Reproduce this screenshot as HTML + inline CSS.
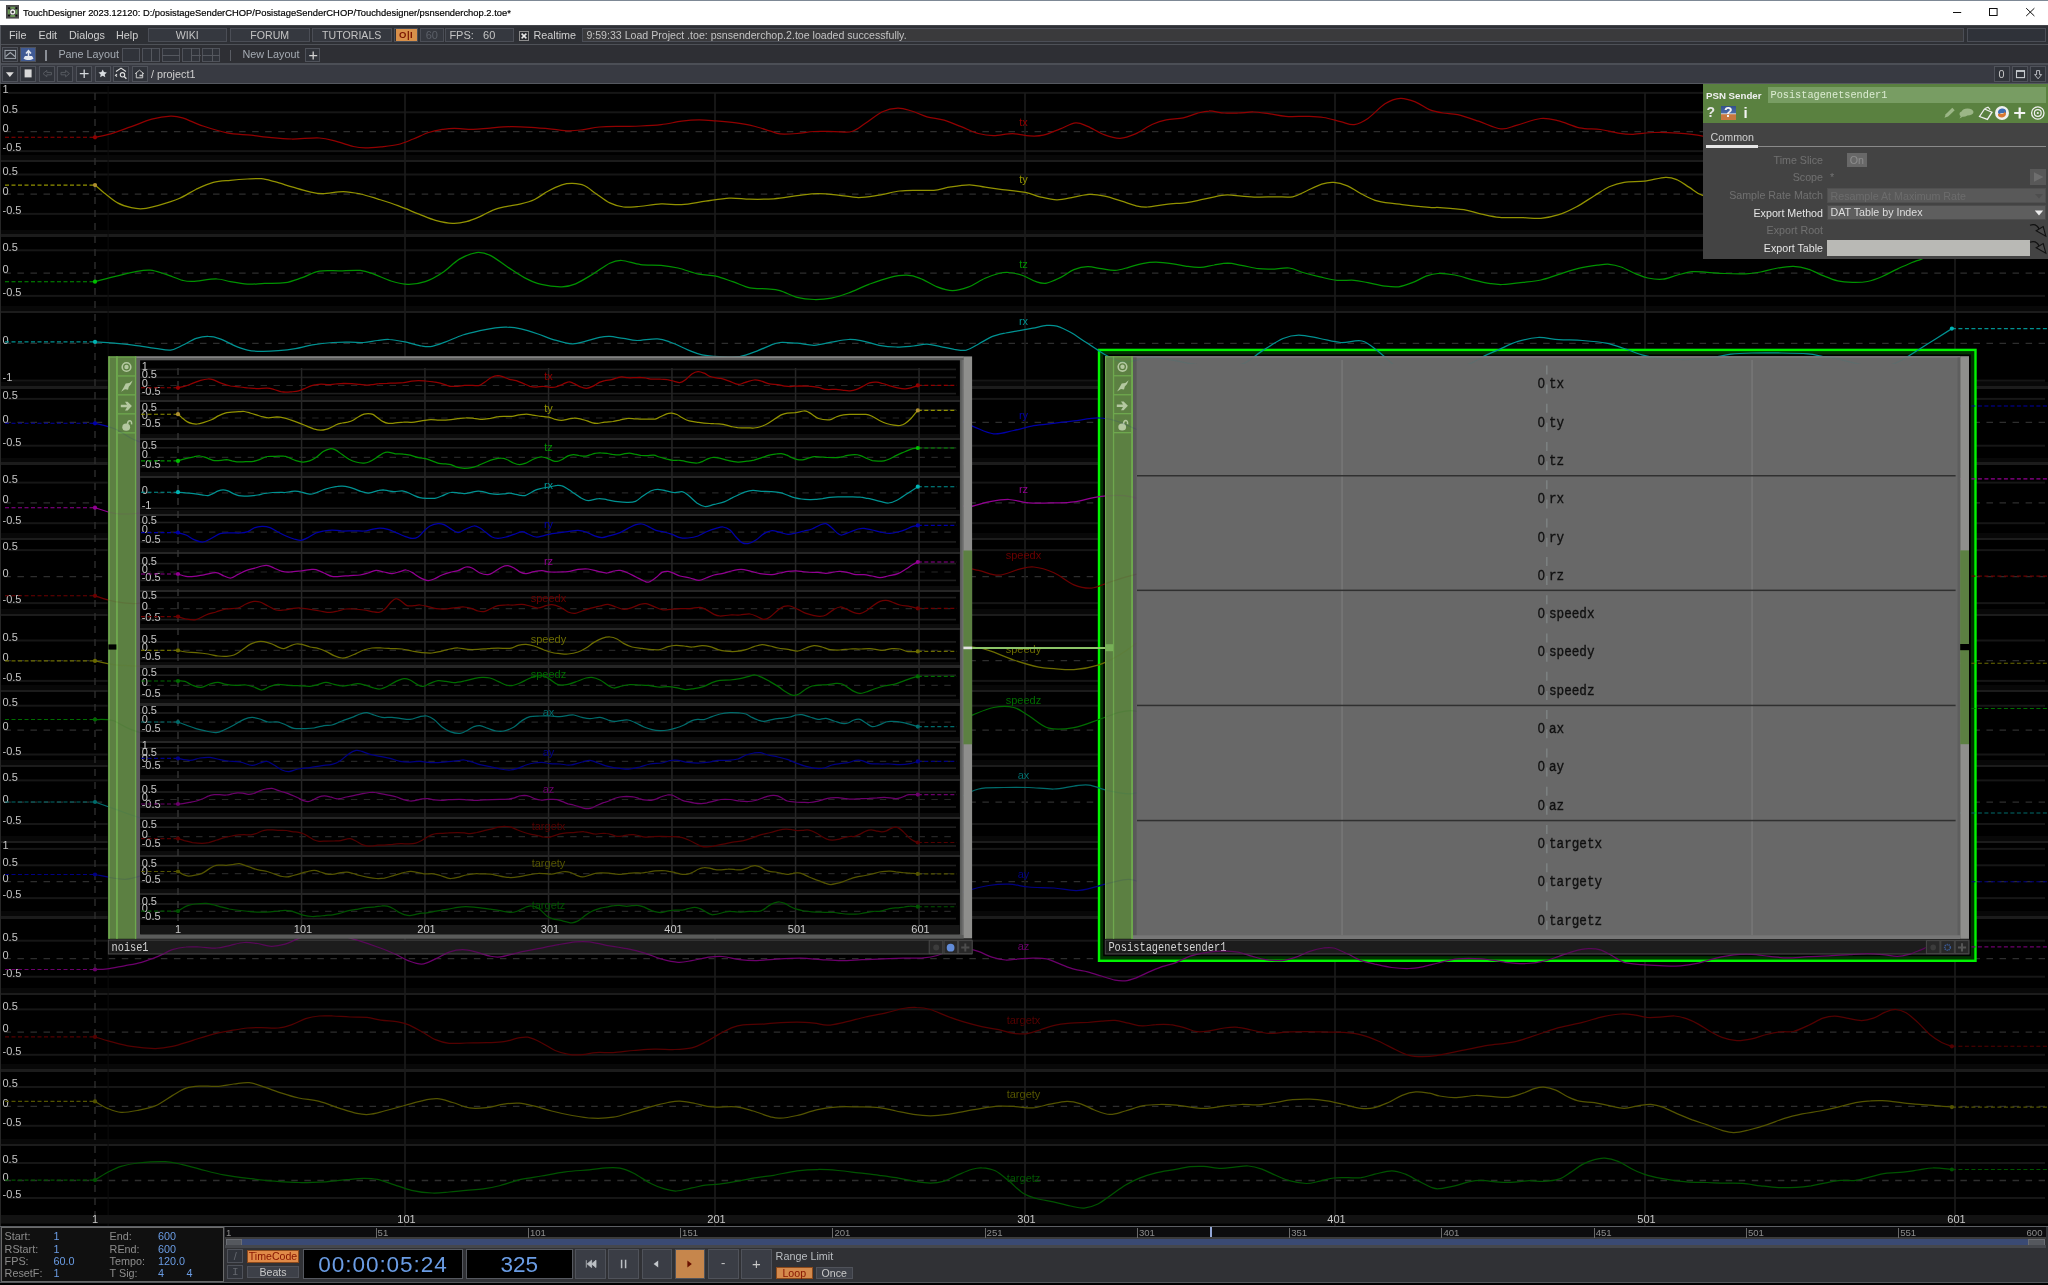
<!DOCTYPE html><html><head><meta charset="utf-8"><title>TouchDesigner</title><style>
html,body{margin:0;padding:0;background:#000}
#w{position:absolute;left:0;top:0;width:2048px;height:1285px}
#w>div{filter:brightness(1)}
body{width:2048px;height:1285px;position:relative;overflow:hidden;font-family:'Liberation Sans', sans-serif}
.mt{position:absolute;font:10.8px 'Liberation Sans', sans-serif;color:#cfcfcf;white-space:nowrap}
.btn{position:absolute;box-sizing:border-box;border:1px solid #4b4e56;background:#35383f;font:10.6px 'Liberation Sans', sans-serif;color:#c4c4c4;text-align:center;white-space:nowrap;overflow:hidden}
.ib{position:absolute;box-sizing:border-box;border:1px solid #4f525a;background:#30333a}
.il{position:absolute;font:10.8px 'Liberation Sans', sans-serif;color:#8c8c8c;white-space:nowrap}
.iv{position:absolute;font:10.8px 'Liberation Sans', sans-serif;color:#6a9ce4;white-space:nowrap}
.rl{position:absolute;top:1226.6px;font:9.6px 'Liberation Sans', sans-serif;color:#8c8c8c;white-space:nowrap}
</style></head><body>
<svg style="position:absolute;left:0;top:0;filter:brightness(1)" width="2048" height="1285" viewBox="0 0 2048 1285">
<rect x="0" y="84" width="2048" height="1142" fill="#000"/>
<g shape-rendering="crispEdges">
<rect x="0" y="155.2" width="2048" height="5" fill="#080808"/>
<rect x="0" y="160.0" width="2048" height="2.4" fill="#1c1c1c"/>
<rect x="0" y="229.5" width="2048" height="5" fill="#080808"/>
<rect x="0" y="234.3" width="2048" height="2.4" fill="#1c1c1c"/>
<rect x="0" y="305.9" width="2048" height="5" fill="#080808"/>
<rect x="0" y="310.7" width="2048" height="2.4" fill="#1c1c1c"/>
<rect x="0" y="381.5" width="2048" height="5" fill="#080808"/>
<rect x="0" y="386.3" width="2048" height="2.4" fill="#1c1c1c"/>
<rect x="0" y="457.6" width="2048" height="5" fill="#080808"/>
<rect x="0" y="462.4" width="2048" height="2.4" fill="#1c1c1c"/>
<rect x="0" y="532.9" width="2048" height="5" fill="#080808"/>
<rect x="0" y="537.7" width="2048" height="2.4" fill="#1c1c1c"/>
<rect x="0" y="608.9" width="2048" height="5" fill="#080808"/>
<rect x="0" y="613.7" width="2048" height="2.4" fill="#1c1c1c"/>
<rect x="0" y="684.7" width="2048" height="5" fill="#080808"/>
<rect x="0" y="689.5" width="2048" height="2.4" fill="#1c1c1c"/>
<rect x="0" y="760.1" width="2048" height="5" fill="#080808"/>
<rect x="0" y="764.9" width="2048" height="2.4" fill="#1c1c1c"/>
<rect x="0" y="836.0" width="2048" height="5" fill="#080808"/>
<rect x="0" y="840.8" width="2048" height="2.4" fill="#1c1c1c"/>
<rect x="0" y="911.3" width="2048" height="5" fill="#080808"/>
<rect x="0" y="916.1" width="2048" height="2.4" fill="#1c1c1c"/>
<rect x="0" y="987.7" width="2048" height="5" fill="#080808"/>
<rect x="0" y="992.5" width="2048" height="2.4" fill="#1c1c1c"/>
<rect x="0" y="1064.3" width="2048" height="5" fill="#080808"/>
<rect x="0" y="1069.1" width="2048" height="2.4" fill="#1c1c1c"/>
<rect x="0" y="1138.7" width="2048" height="5" fill="#080808"/>
<rect x="0" y="1143.5" width="2048" height="2.4" fill="#1c1c1c"/>
</g>
<rect x="8" y="91.9" width="2037" height="2" fill="#161616"/>
<rect x="8" y="111.3" width="2037" height="2" fill="#161616"/>
<rect x="8" y="150.1" width="2037" height="2" fill="#161616"/>
<line x1="4.4" y1="131.7" x2="2045" y2="131.7" stroke="#2e2e2e" stroke-width="1.3" stroke-dasharray="6.5 6.54"/>
<rect x="8" y="173.5" width="2037" height="2" fill="#161616"/>
<rect x="8" y="212.9" width="2037" height="2" fill="#161616"/>
<line x1="4.4" y1="194.2" x2="2045" y2="194.2" stroke="#2e2e2e" stroke-width="1.3" stroke-dasharray="6.5 6.54"/>
<rect x="8" y="249.3" width="2037" height="2" fill="#161616"/>
<rect x="8" y="294.9" width="2037" height="2" fill="#161616"/>
<line x1="4.4" y1="273.1" x2="2045" y2="273.1" stroke="#2e2e2e" stroke-width="1.3" stroke-dasharray="6.5 6.54"/>
<rect x="8" y="379.6" width="2037" height="2" fill="#161616"/>
<line x1="4.4" y1="343.3" x2="2045" y2="343.3" stroke="#2e2e2e" stroke-width="1.3" stroke-dasharray="6.5 6.54"/>
<rect x="8" y="397.9" width="2037" height="2" fill="#161616"/>
<rect x="8" y="444.7" width="2037" height="2" fill="#161616"/>
<line x1="4.4" y1="422.3" x2="2045" y2="422.3" stroke="#2e2e2e" stroke-width="1.3" stroke-dasharray="6.5 6.54"/>
<rect x="8" y="481.6" width="2037" height="2" fill="#161616"/>
<rect x="8" y="522.2" width="2037" height="2" fill="#161616"/>
<line x1="4.4" y1="502.9" x2="2045" y2="502.9" stroke="#2e2e2e" stroke-width="1.3" stroke-dasharray="6.5 6.54"/>
<rect x="8" y="549.1" width="2037" height="2" fill="#161616"/>
<rect x="8" y="602.1" width="2037" height="2" fill="#161616"/>
<line x1="4.4" y1="576.6" x2="2045" y2="576.6" stroke="#2e2e2e" stroke-width="1.3" stroke-dasharray="6.5 6.54"/>
<rect x="8" y="639.5" width="2037" height="2" fill="#161616"/>
<rect x="8" y="679.9" width="2037" height="2" fill="#161616"/>
<line x1="4.4" y1="660.7" x2="2045" y2="660.7" stroke="#2e2e2e" stroke-width="1.3" stroke-dasharray="6.5 6.54"/>
<rect x="8" y="704.7" width="2037" height="2" fill="#161616"/>
<rect x="8" y="753.5" width="2037" height="2" fill="#161616"/>
<line x1="4.4" y1="730.1" x2="2045" y2="730.1" stroke="#2e2e2e" stroke-width="1.3" stroke-dasharray="6.5 6.54"/>
<rect x="8" y="779.4" width="2037" height="2" fill="#161616"/>
<rect x="8" y="823.0" width="2037" height="2" fill="#161616"/>
<line x1="4.4" y1="802.2" x2="2045" y2="802.2" stroke="#2e2e2e" stroke-width="1.3" stroke-dasharray="6.5 6.54"/>
<rect x="8" y="847.9" width="2037" height="2" fill="#161616"/>
<rect x="8" y="864.3" width="2037" height="2" fill="#161616"/>
<rect x="8" y="897.1" width="2037" height="2" fill="#161616"/>
<line x1="4.4" y1="881.7" x2="2045" y2="881.7" stroke="#2e2e2e" stroke-width="1.3" stroke-dasharray="6.5 6.54"/>
<rect x="8" y="939.7" width="2037" height="2" fill="#161616"/>
<rect x="8" y="975.7" width="2037" height="2" fill="#161616"/>
<line x1="4.4" y1="958.7" x2="2045" y2="958.7" stroke="#2e2e2e" stroke-width="1.3" stroke-dasharray="6.5 6.54"/>
<rect x="8" y="1008.4" width="2037" height="2" fill="#161616"/>
<rect x="8" y="1053.8" width="2037" height="2" fill="#161616"/>
<line x1="4.4" y1="1032.1" x2="2045" y2="1032.1" stroke="#2e2e2e" stroke-width="1.3" stroke-dasharray="6.5 6.54"/>
<rect x="8" y="1086.0" width="2037" height="2" fill="#161616"/>
<rect x="8" y="1124.8" width="2037" height="2" fill="#161616"/>
<line x1="4.4" y1="1106.4" x2="2045" y2="1106.4" stroke="#2e2e2e" stroke-width="1.3" stroke-dasharray="6.5 6.54"/>
<rect x="8" y="1162.0" width="2037" height="2" fill="#161616"/>
<rect x="8" y="1197.0" width="2037" height="2" fill="#161616"/>
<line x1="4.4" y1="1180.5" x2="2045" y2="1180.5" stroke="#2e2e2e" stroke-width="1.3" stroke-dasharray="6.5 6.54"/>
<rect x="404.2" y="93" width="1.6" height="1133" fill="#1c1c1c"/>
<rect x="714.2" y="93" width="1.6" height="1133" fill="#1c1c1c"/>
<rect x="1024.2" y="93" width="1.6" height="1133" fill="#1c1c1c"/>
<rect x="1334.2" y="93" width="1.6" height="1133" fill="#1c1c1c"/>
<rect x="1644.2" y="93" width="1.6" height="1133" fill="#1c1c1c"/>
<rect x="1954.2" y="93" width="1.6" height="1133" fill="#1c1c1c"/>
<line x1="95" y1="93" x2="95" y2="1215" stroke="#303030" stroke-width="1.3" stroke-dasharray="7 6"/>
<rect x="107.6" y="86" width="1" height="1140" fill="#0c0c0c"/>
<rect x="0" y="1215" width="2048" height="8.6" fill="#121212"/>
<text x="95.0" y="1223.3" font-size="11" fill="#c8c8c8" text-anchor="middle" font-family="'Liberation Sans', sans-serif">1</text>
<text x="406.5" y="1223.3" font-size="11" fill="#c8c8c8" text-anchor="middle" font-family="'Liberation Sans', sans-serif">101</text>
<text x="716.5" y="1223.3" font-size="11" fill="#c8c8c8" text-anchor="middle" font-family="'Liberation Sans', sans-serif">201</text>
<text x="1026.5" y="1223.3" font-size="11" fill="#c8c8c8" text-anchor="middle" font-family="'Liberation Sans', sans-serif">301</text>
<text x="1336.5" y="1223.3" font-size="11" fill="#c8c8c8" text-anchor="middle" font-family="'Liberation Sans', sans-serif">401</text>
<text x="1646.5" y="1223.3" font-size="11" fill="#c8c8c8" text-anchor="middle" font-family="'Liberation Sans', sans-serif">501</text>
<text x="1956.5" y="1223.3" font-size="11" fill="#c8c8c8" text-anchor="middle" font-family="'Liberation Sans', sans-serif">601</text>
<text x="2.5" y="93.2" font-size="11" fill="#c4c4c4" font-family="'Liberation Sans', sans-serif">1</text>
<text x="2.5" y="112.6" font-size="11" fill="#c4c4c4" font-family="'Liberation Sans', sans-serif">0.5</text>
<text x="2.5" y="132.0" font-size="11" fill="#c4c4c4" font-family="'Liberation Sans', sans-serif">0</text>
<text x="2.5" y="151.4" font-size="11" fill="#c4c4c4" font-family="'Liberation Sans', sans-serif">-0.5</text>
<text x="2.5" y="174.8" font-size="11" fill="#c4c4c4" font-family="'Liberation Sans', sans-serif">0.5</text>
<text x="2.5" y="194.5" font-size="11" fill="#c4c4c4" font-family="'Liberation Sans', sans-serif">0</text>
<text x="2.5" y="214.2" font-size="11" fill="#c4c4c4" font-family="'Liberation Sans', sans-serif">-0.5</text>
<text x="2.5" y="250.6" font-size="11" fill="#c4c4c4" font-family="'Liberation Sans', sans-serif">0.5</text>
<text x="2.5" y="273.4" font-size="11" fill="#c4c4c4" font-family="'Liberation Sans', sans-serif">0</text>
<text x="2.5" y="296.2" font-size="11" fill="#c4c4c4" font-family="'Liberation Sans', sans-serif">-0.5</text>
<text x="2.5" y="343.6" font-size="11" fill="#c4c4c4" font-family="'Liberation Sans', sans-serif">0</text>
<text x="2.5" y="380.9" font-size="11" fill="#c4c4c4" font-family="'Liberation Sans', sans-serif">-1</text>
<text x="2.5" y="399.2" font-size="11" fill="#c4c4c4" font-family="'Liberation Sans', sans-serif">0.5</text>
<text x="2.5" y="422.6" font-size="11" fill="#c4c4c4" font-family="'Liberation Sans', sans-serif">0</text>
<text x="2.5" y="446.0" font-size="11" fill="#c4c4c4" font-family="'Liberation Sans', sans-serif">-0.5</text>
<text x="2.5" y="482.9" font-size="11" fill="#c4c4c4" font-family="'Liberation Sans', sans-serif">0.5</text>
<text x="2.5" y="503.2" font-size="11" fill="#c4c4c4" font-family="'Liberation Sans', sans-serif">0</text>
<text x="2.5" y="523.5" font-size="11" fill="#c4c4c4" font-family="'Liberation Sans', sans-serif">-0.5</text>
<text x="2.5" y="550.4" font-size="11" fill="#c4c4c4" font-family="'Liberation Sans', sans-serif">0.5</text>
<text x="2.5" y="576.9" font-size="11" fill="#c4c4c4" font-family="'Liberation Sans', sans-serif">0</text>
<text x="2.5" y="603.4" font-size="11" fill="#c4c4c4" font-family="'Liberation Sans', sans-serif">-0.5</text>
<text x="2.5" y="640.8" font-size="11" fill="#c4c4c4" font-family="'Liberation Sans', sans-serif">0.5</text>
<text x="2.5" y="661.0" font-size="11" fill="#c4c4c4" font-family="'Liberation Sans', sans-serif">0</text>
<text x="2.5" y="681.2" font-size="11" fill="#c4c4c4" font-family="'Liberation Sans', sans-serif">-0.5</text>
<text x="2.5" y="706.0" font-size="11" fill="#c4c4c4" font-family="'Liberation Sans', sans-serif">0.5</text>
<text x="2.5" y="730.4" font-size="11" fill="#c4c4c4" font-family="'Liberation Sans', sans-serif">0</text>
<text x="2.5" y="754.8" font-size="11" fill="#c4c4c4" font-family="'Liberation Sans', sans-serif">-0.5</text>
<text x="2.5" y="780.7" font-size="11" fill="#c4c4c4" font-family="'Liberation Sans', sans-serif">0.5</text>
<text x="2.5" y="802.5" font-size="11" fill="#c4c4c4" font-family="'Liberation Sans', sans-serif">0</text>
<text x="2.5" y="824.3" font-size="11" fill="#c4c4c4" font-family="'Liberation Sans', sans-serif">-0.5</text>
<text x="2.5" y="849.2" font-size="11" fill="#c4c4c4" font-family="'Liberation Sans', sans-serif">1</text>
<text x="2.5" y="865.6" font-size="11" fill="#c4c4c4" font-family="'Liberation Sans', sans-serif">0.5</text>
<text x="2.5" y="882.0" font-size="11" fill="#c4c4c4" font-family="'Liberation Sans', sans-serif">0</text>
<text x="2.5" y="898.4" font-size="11" fill="#c4c4c4" font-family="'Liberation Sans', sans-serif">-0.5</text>
<text x="2.5" y="941.0" font-size="11" fill="#c4c4c4" font-family="'Liberation Sans', sans-serif">0.5</text>
<text x="2.5" y="959.0" font-size="11" fill="#c4c4c4" font-family="'Liberation Sans', sans-serif">0</text>
<text x="2.5" y="977.0" font-size="11" fill="#c4c4c4" font-family="'Liberation Sans', sans-serif">-0.5</text>
<text x="2.5" y="1009.7" font-size="11" fill="#c4c4c4" font-family="'Liberation Sans', sans-serif">0.5</text>
<text x="2.5" y="1032.4" font-size="11" fill="#c4c4c4" font-family="'Liberation Sans', sans-serif">0</text>
<text x="2.5" y="1055.1" font-size="11" fill="#c4c4c4" font-family="'Liberation Sans', sans-serif">-0.5</text>
<text x="2.5" y="1087.3" font-size="11" fill="#c4c4c4" font-family="'Liberation Sans', sans-serif">0.5</text>
<text x="2.5" y="1106.7" font-size="11" fill="#c4c4c4" font-family="'Liberation Sans', sans-serif">0</text>
<text x="2.5" y="1126.1" font-size="11" fill="#c4c4c4" font-family="'Liberation Sans', sans-serif">-0.5</text>
<text x="2.5" y="1163.3" font-size="11" fill="#c4c4c4" font-family="'Liberation Sans', sans-serif">0.5</text>
<text x="2.5" y="1180.8" font-size="11" fill="#c4c4c4" font-family="'Liberation Sans', sans-serif">0</text>
<text x="2.5" y="1198.3" font-size="11" fill="#c4c4c4" font-family="'Liberation Sans', sans-serif">-0.5</text>
<rect x="1097.8" y="348.7" width="878.9" height="613.3" fill="#00f400"/>
<rect x="1100.2" y="351.1" width="874.1" height="608.5" fill="#003200"/>
<rect x="1103.2" y="354.4" width="867.7" height="601.8" fill="#000"/>
<g id="bgc"><path d="M95.0 137.3C97.6 136.7 104.7 135.6 110.8 133.9C116.8 132.1 124.4 129.1 131.3 126.7C138.1 124.2 145.2 120.9 151.8 119.2C158.3 117.4 165.4 116.3 170.6 116.1C175.7 115.9 177.1 116.2 182.5 117.8C188.0 119.5 195.6 123.5 203.0 126.0C210.5 128.5 219.0 131.3 227.0 132.9C234.9 134.4 243.5 134.4 250.9 135.2C258.3 136.0 264.6 137.0 271.4 137.6C278.2 138.3 283.9 138.9 291.9 139.0C299.9 139.1 311.9 137.6 319.3 138.0C326.7 138.4 330.7 140.0 336.3 141.4C342.0 142.8 348.6 145.4 353.4 146.5C358.3 147.6 360.8 147.8 365.4 147.9C370.0 147.9 375.4 147.4 380.8 146.9C386.2 146.3 392.5 145.8 397.9 144.5C403.3 143.2 408.1 141.0 413.3 139.0C418.4 137.0 423.8 134.1 428.6 132.5C433.5 130.9 438.0 130.1 442.3 129.4C446.6 128.8 449.1 128.4 454.3 128.4C459.4 128.4 467.1 129.5 473.1 129.4C479.0 129.4 483.9 128.5 490.2 128.1C496.4 127.6 503.8 126.8 510.7 126.7C517.5 126.6 524.3 127.0 531.2 127.4C538.0 127.8 545.4 128.5 551.7 129.1C557.9 129.7 563.6 130.7 568.8 130.8C573.9 130.9 577.3 130.4 582.4 129.8C587.6 129.1 593.3 127.6 599.5 127.0C605.8 126.5 613.2 126.5 620.0 126.4C626.9 126.2 633.7 126.3 640.5 126.0C647.4 125.7 654.2 125.4 661.1 124.6C667.9 123.9 675.3 122.0 681.6 121.2C687.8 120.4 693.0 119.9 698.7 119.9C704.3 119.8 709.5 120.4 715.7 120.9C722.0 121.4 730.0 122.1 736.2 122.9C742.5 123.8 747.6 124.6 753.3 126.0C759.0 127.4 766.0 129.8 770.4 131.1C774.9 132.5 775.6 133.5 780.0 133.9C784.4 134.3 791.4 133.9 797.1 133.5C802.8 133.1 807.9 131.8 814.2 131.5C820.4 131.1 828.4 131.5 834.7 131.5C841.0 131.5 846.7 132.9 851.8 131.5C856.9 130.1 860.3 126.6 865.4 123.3C870.6 120.0 877.1 114.2 882.5 111.7C888.0 109.2 893.1 108.4 897.9 108.2C902.8 108.1 906.7 109.6 911.6 111.0C916.4 112.4 921.6 115.2 927.0 116.8C932.4 118.3 938.4 118.6 944.1 120.2C949.8 121.9 955.5 124.5 961.2 126.7C966.8 128.9 972.8 132.1 978.2 133.5C983.7 135.0 987.9 135.6 993.6 135.6C999.3 135.6 1006.4 133.5 1012.4 133.5C1018.4 133.6 1024.4 135.6 1029.5 135.9C1034.6 136.2 1038.1 136.4 1043.2 135.2C1048.3 134.0 1054.9 130.8 1060.3 128.8C1065.7 126.7 1071.1 123.3 1075.7 122.9C1080.2 122.5 1082.8 124.4 1087.6 126.4C1092.5 128.4 1099.3 132.9 1104.7 134.9C1110.1 136.9 1115.0 138.5 1120.1 138.3C1125.2 138.1 1130.1 136.2 1135.5 133.9C1140.9 131.5 1147.4 126.6 1152.6 124.3C1157.7 122.0 1161.1 120.9 1166.2 119.9C1171.4 118.8 1178.2 118.9 1183.3 117.8C1188.4 116.7 1192.7 114.5 1197.0 113.4C1201.3 112.2 1204.4 111.0 1209.0 111.0C1213.5 110.9 1219.5 112.7 1224.3 113.0C1229.2 113.4 1233.2 113.2 1238.0 113.0C1242.8 112.9 1248.3 111.9 1253.4 112.0C1258.5 112.1 1263.4 113.0 1268.8 113.7C1274.2 114.5 1279.6 116.0 1285.9 116.4C1292.1 116.9 1300.1 116.3 1306.4 116.4C1312.6 116.6 1317.8 116.6 1323.5 117.5C1329.2 118.3 1335.4 120.4 1340.5 121.6C1345.7 122.8 1349.7 125.2 1354.2 124.6C1358.8 124.1 1362.8 122.0 1367.9 118.5C1373.0 115.0 1379.6 107.2 1385.0 103.8C1390.4 100.4 1395.2 98.6 1400.4 98.3C1405.5 98.0 1410.9 100.2 1415.7 102.1C1420.6 104.0 1424.9 107.8 1429.4 109.6C1434.0 111.4 1438.4 112.2 1443.1 113.0C1447.8 113.9 1451.9 113.3 1457.8 114.7C1463.7 116.1 1471.4 118.8 1478.6 121.2C1485.8 123.6 1494.4 128.3 1500.9 128.9C1507.3 129.6 1510.5 126.8 1517.2 125.1C1523.9 123.3 1534.0 119.2 1540.9 118.5C1547.9 117.9 1552.3 119.4 1558.8 120.9C1565.2 122.5 1572.6 126.3 1579.5 127.8C1586.5 129.2 1593.9 128.6 1600.3 129.5C1606.7 130.4 1612.7 132.3 1618.1 133.1C1623.6 133.9 1627.0 134.4 1633.0 134.3C1638.9 134.2 1646.3 132.7 1653.8 132.5C1661.2 132.3 1669.3 132.5 1677.5 133.1C1685.7 133.7 1695.5 134.7 1702.7 136.1C1710.0 137.4 1713.6 140.3 1720.9 141.1C1728.3 141.9 1739.3 140.7 1746.7 141.1C1754.1 141.5 1759.6 142.8 1765.5 143.3C1771.3 143.9 1776.4 144.8 1781.9 144.5C1787.3 144.1 1792.4 143.2 1798.3 141.1C1804.1 139.0 1811.6 134.7 1817.0 132.1C1822.5 129.5 1826.0 126.8 1831.1 125.4C1836.2 124.0 1842.0 123.6 1847.5 123.8C1853.0 124.1 1858.0 125.5 1863.9 127.0C1869.8 128.4 1876.4 130.9 1882.7 132.6C1888.9 134.3 1895.2 136.1 1901.4 137.3C1907.7 138.4 1914.7 139.5 1920.2 139.5C1925.6 139.5 1929.9 138.3 1934.2 137.3C1938.5 136.3 1943.0 134.7 1945.9 133.7C1948.9 132.7 1950.9 131.8 1951.9 131.5" fill="none" stroke="#920000" stroke-width="1.25"/>
<line x1="5" y1="137.3" x2="95.0" y2="137.3" stroke="#920000" stroke-width="1.1" stroke-dasharray="4 2.5"/>
<line x1="1951.9" y1="131.5" x2="2048" y2="131.5" stroke="#920000" stroke-width="1.1" stroke-dasharray="4 2.5"/>
<circle cx="95.0" cy="137.3" r="2.1" fill="#920000"/>
<circle cx="1951.9" cy="131.5" r="2.1" fill="#920000"/>
<path d="M95.0 185.1C96.5 186.4 100.2 189.7 103.9 192.7C107.7 195.6 113.0 200.4 117.6 202.9C122.2 205.4 127.0 206.7 131.3 207.7C135.5 208.7 138.7 209.1 143.2 208.7C147.8 208.3 152.6 207.0 158.6 205.3C164.6 203.6 172.9 201.2 179.1 198.5C185.4 195.8 190.5 191.9 196.2 189.2C201.9 186.6 207.6 183.9 213.3 182.4C219.0 180.9 224.7 180.9 230.4 180.4C236.1 179.8 242.4 179.3 247.5 179.0C252.6 178.7 256.6 178.2 261.2 178.7C265.7 179.1 269.7 180.4 274.8 181.7C280.0 183.1 286.2 185.2 291.9 186.9C297.6 188.5 303.9 190.5 309.0 191.6C314.1 192.8 317.0 193.7 322.7 193.7C328.4 193.7 336.9 191.6 343.2 191.6C349.4 191.7 354.6 192.8 360.3 194.0C366.0 195.2 371.1 196.9 377.4 198.8C383.6 200.8 391.0 203.1 397.9 205.7C404.7 208.2 412.1 211.4 418.4 213.9C424.6 216.3 429.8 218.8 435.5 220.4C441.2 221.9 447.4 223.2 452.6 223.4C457.7 223.7 461.7 222.9 466.2 221.7C470.8 220.6 475.3 218.6 479.9 216.6C484.5 214.6 489.0 211.5 493.6 209.8C498.1 208.0 502.7 207.3 507.2 206.3C511.8 205.4 516.4 205.1 520.9 203.9C525.5 202.8 530.0 201.7 534.6 199.5C539.1 197.3 543.7 193.4 548.3 191.0C552.8 188.5 557.9 186.1 561.9 184.8C565.9 183.6 568.5 183.3 572.2 183.4C575.9 183.6 580.2 183.8 584.2 185.5C588.1 187.2 591.8 190.8 596.1 193.7C600.4 196.6 605.2 200.7 609.8 202.9C614.3 205.1 618.9 206.4 623.5 207.0C628.0 207.6 630.9 207.2 637.1 206.7C643.4 206.2 653.6 204.3 661.1 203.9C668.5 203.6 674.2 205.1 681.6 204.6C689.0 204.2 697.5 202.3 705.5 201.2C713.5 200.1 722.0 198.5 729.4 198.1C736.8 197.8 742.5 199.0 749.9 199.2C757.3 199.3 766.0 199.4 773.8 198.8C781.7 198.2 789.8 196.6 797.1 195.7C804.4 194.9 810.8 193.8 817.6 193.7C824.4 193.6 831.3 194.4 838.1 195.1C844.9 195.7 851.8 197.5 858.6 197.5C865.4 197.5 872.3 196.1 879.1 195.1C886.0 194.0 893.4 191.8 899.6 191.0C905.9 190.2 911.0 190.4 916.7 190.3C922.4 190.2 928.1 190.8 933.8 190.3C939.5 189.7 944.9 187.8 950.9 186.9C956.9 185.9 964.0 184.7 969.7 184.8C975.4 184.9 979.7 186.4 985.1 187.2C990.5 188.0 995.4 188.7 1002.2 189.6C1008.9 190.4 1019.1 191.1 1025.4 192.3C1031.7 193.5 1034.5 195.5 1039.8 196.8C1045.0 198.0 1051.2 199.8 1056.9 199.8C1062.6 199.9 1068.5 198.0 1073.9 197.1C1079.4 196.2 1084.2 194.5 1089.3 194.4C1094.5 194.2 1099.3 194.9 1104.7 196.1C1110.1 197.2 1116.7 199.6 1121.8 201.2C1126.9 202.8 1131.2 204.7 1135.5 205.7C1139.7 206.6 1142.3 207.2 1147.4 207.0C1152.6 206.8 1159.7 205.0 1166.2 204.3C1172.8 203.5 1180.5 203.4 1186.7 202.6C1193.0 201.7 1197.6 200.4 1203.8 199.2C1210.1 197.9 1218.1 195.6 1224.3 195.1C1230.6 194.5 1235.7 195.7 1241.4 196.1C1247.1 196.4 1252.8 197.0 1258.5 197.1C1264.2 197.2 1269.9 196.8 1275.6 196.8C1281.3 196.7 1287.6 197.7 1292.7 196.8C1297.8 195.8 1301.5 193.1 1306.4 191.0C1311.2 188.8 1317.2 185.5 1321.7 184.1C1326.3 182.7 1329.4 182.1 1333.7 182.4C1338.0 182.7 1342.8 184.0 1347.4 185.8C1351.9 187.7 1355.9 191.1 1361.1 193.7C1366.2 196.3 1371.3 199.4 1378.1 201.2C1385.0 203.0 1393.5 203.6 1402.1 204.6C1410.6 205.7 1423.1 206.9 1429.4 207.4C1435.7 207.9 1434.3 207.2 1440.0 207.6C1445.7 208.0 1456.8 208.6 1463.8 209.7C1470.7 210.8 1475.6 212.9 1481.6 214.1C1487.5 215.4 1492.4 216.8 1499.4 217.4C1506.3 218.0 1516.2 217.6 1523.1 217.7C1530.1 217.9 1535.0 218.8 1540.9 218.3C1546.9 217.8 1552.8 216.7 1558.8 214.7C1564.7 212.8 1570.6 209.9 1576.6 206.7C1582.5 203.6 1588.9 199.0 1594.4 195.7C1599.8 192.4 1604.3 189.1 1609.2 186.8C1614.2 184.6 1618.1 183.3 1624.1 182.4C1630.0 181.4 1637.9 182.0 1644.8 181.2C1651.8 180.3 1660.2 177.5 1665.6 177.3C1671.1 177.1 1673.5 178.3 1677.5 180.0C1681.5 181.7 1685.2 184.8 1689.4 187.4C1693.6 190.0 1695.9 193.6 1702.7 195.4C1709.6 197.3 1723.0 199.0 1730.3 198.4C1737.6 197.8 1740.9 193.6 1746.7 191.7C1752.6 189.7 1759.2 187.8 1765.5 186.8C1771.7 185.7 1777.6 185.8 1784.2 185.6C1790.9 185.4 1799.1 185.6 1805.3 185.6C1811.6 185.6 1816.6 185.0 1821.7 185.6C1826.8 186.3 1830.3 187.1 1835.8 189.4C1841.2 191.8 1848.3 196.6 1854.5 199.5C1860.8 202.5 1867.0 205.4 1873.3 207.4C1879.5 209.4 1886.2 210.7 1892.0 211.4C1897.9 212.2 1903.7 212.6 1908.4 211.9C1913.1 211.2 1915.9 210.0 1920.2 207.4C1924.4 204.8 1929.9 200.3 1934.2 196.2C1938.5 192.1 1943.0 186.1 1945.9 182.7C1948.9 179.3 1950.9 177.1 1951.9 176.0" fill="none" stroke="#929200" stroke-width="1.25"/>
<line x1="5" y1="185.1" x2="95.0" y2="185.1" stroke="#929200" stroke-width="1.1" stroke-dasharray="4 2.5"/>
<line x1="1951.9" y1="176.0" x2="2048" y2="176.0" stroke="#929200" stroke-width="1.1" stroke-dasharray="4 2.5"/>
<circle cx="95.0" cy="185.1" r="2.1" fill="#b09030"/>
<circle cx="1951.9" cy="176.0" r="2.1" fill="#b09030"/>
<path d="M95.0 281.7C98.2 280.8 107.6 278.2 114.2 276.6C120.8 274.9 128.7 272.9 134.7 271.8C140.7 270.7 144.9 269.7 150.1 270.1C155.2 270.5 160.0 272.5 165.4 274.2C170.9 275.9 178.0 279.1 182.5 280.3C187.1 281.5 187.1 281.6 192.8 281.4C198.5 281.1 210.5 278.9 216.7 279.0C223.0 279.0 225.3 280.8 230.4 281.7C235.5 282.6 241.8 283.8 247.5 284.1C253.2 284.4 258.3 283.6 264.6 283.4C270.8 283.2 278.8 283.7 285.1 282.7C291.3 281.8 296.5 279.5 302.2 277.6C307.9 275.7 313.0 272.2 319.3 271.1C325.5 270.0 332.9 270.9 339.8 270.8C346.6 270.6 354.6 269.9 360.3 270.4C366.0 271.0 368.8 272.4 373.9 274.2C379.1 275.9 385.3 279.3 391.0 281.0C396.7 282.7 402.4 284.3 408.1 284.4C413.8 284.5 419.5 283.6 425.2 281.7C430.9 279.8 436.6 276.6 442.3 272.8C448.0 269.1 453.7 262.5 459.4 259.1C465.1 255.8 471.4 253.3 476.5 252.6C481.6 252.0 485.0 253.0 490.2 255.4C495.3 257.7 501.5 263.0 507.2 266.7C512.9 270.4 518.6 274.6 524.3 277.6C530.0 280.6 535.2 282.9 541.4 284.4C547.7 286.0 556.2 286.9 561.9 286.8C567.6 286.7 570.5 285.9 575.6 283.8C580.7 281.6 587.0 277.6 592.7 274.2C598.4 270.8 604.9 265.5 609.8 263.2C614.6 261.0 616.6 260.3 621.7 260.5C626.9 260.7 634.0 263.8 640.5 264.6C647.1 265.4 654.8 264.7 661.1 265.3C667.3 265.9 671.9 266.5 678.1 268.0C684.4 269.5 692.4 272.8 698.7 274.2C704.9 275.5 710.0 275.0 715.7 276.2C721.4 277.5 727.1 279.8 732.8 281.7C738.5 283.6 744.2 286.7 749.9 287.9C755.6 289.0 762.0 288.4 767.0 288.9C772.0 289.3 775.0 289.2 780.0 290.6C785.0 292.0 791.4 295.9 797.1 297.4C802.8 298.9 808.5 299.4 814.2 299.5C819.9 299.6 825.6 299.2 831.3 298.1C837.0 297.0 842.1 295.3 848.4 293.0C854.6 290.7 862.0 287.0 868.9 284.4C875.7 281.9 883.1 279.1 889.4 277.6C895.6 276.1 901.3 275.1 906.5 275.2C911.6 275.3 915.0 276.3 920.1 278.3C925.3 280.2 931.8 284.8 937.2 286.8C942.6 288.9 947.5 290.5 952.6 290.6C957.7 290.6 962.6 289.2 968.0 287.2C973.4 285.1 980.0 280.6 985.1 278.3C990.2 276.0 994.8 274.5 998.7 273.5C1002.7 272.5 1005.0 272.1 1009.0 272.5C1013.0 272.8 1018.1 274.0 1022.7 275.5C1027.2 277.1 1032.4 280.4 1036.3 281.7C1040.3 283.0 1042.6 283.8 1046.6 283.1C1050.6 282.4 1055.7 279.8 1060.3 277.6C1064.8 275.4 1069.4 271.6 1073.9 269.7C1078.5 267.9 1083.1 266.8 1087.6 266.7C1092.2 266.5 1096.7 268.1 1101.3 268.7C1105.8 269.3 1110.4 270.6 1115.0 270.4C1119.5 270.2 1124.1 268.5 1128.6 267.3C1133.2 266.2 1137.7 264.4 1142.3 263.6C1146.9 262.7 1150.8 262.2 1156.0 262.2C1161.1 262.3 1167.9 263.2 1173.1 263.9C1178.2 264.6 1182.2 265.7 1186.7 266.3C1191.3 266.9 1195.9 267.6 1200.4 267.3C1205.0 267.1 1209.5 265.6 1214.1 265.0C1218.6 264.3 1223.2 263.2 1227.8 263.2C1232.3 263.3 1236.3 264.4 1241.4 265.3C1246.6 266.2 1253.4 268.1 1258.5 268.7C1263.6 269.3 1267.1 269.2 1272.2 269.1C1277.3 268.9 1284.2 267.5 1289.3 268.0C1294.4 268.6 1297.8 271.0 1302.9 272.5C1308.1 274.0 1314.3 275.6 1320.0 276.9C1325.7 278.2 1331.4 279.8 1337.1 280.3C1342.8 280.9 1349.1 279.9 1354.2 280.3C1359.3 280.7 1362.8 281.8 1367.9 282.7C1373.0 283.7 1379.9 285.5 1385.0 286.1C1390.1 286.8 1394.1 287.4 1398.7 286.8C1403.2 286.3 1407.8 284.5 1412.3 282.7C1416.9 281.0 1421.7 277.8 1426.0 276.2C1430.3 274.7 1433.2 273.7 1438.0 273.5C1442.8 273.3 1449.1 274.0 1454.8 275.0C1460.6 276.0 1466.7 278.3 1472.7 279.8C1478.6 281.2 1485.5 282.8 1490.5 283.6C1495.4 284.4 1496.9 284.7 1502.3 284.5C1507.8 284.3 1516.7 283.2 1523.1 282.4C1529.6 281.7 1535.0 281.4 1540.9 280.0C1546.9 278.7 1552.3 276.4 1558.8 274.4C1565.2 272.4 1573.1 269.7 1579.5 268.2C1586.0 266.6 1592.4 265.8 1597.3 265.2C1602.3 264.6 1605.3 264.0 1609.2 264.3C1613.2 264.6 1616.6 265.4 1621.1 267.0C1625.5 268.6 1631.5 272.0 1635.9 273.8C1640.4 275.6 1643.4 277.1 1647.8 278.0C1652.3 278.9 1657.7 279.7 1662.7 279.2C1667.6 278.7 1672.6 276.2 1677.5 275.0C1682.4 273.8 1687.4 272.2 1692.3 271.7C1697.3 271.3 1701.7 272.0 1707.2 272.3C1712.6 272.6 1718.6 273.3 1725.0 273.5C1731.4 273.8 1739.8 274.1 1745.8 273.8C1751.7 273.6 1755.7 272.9 1760.6 272.0C1765.6 271.1 1770.0 269.4 1775.5 268.5C1780.9 267.5 1787.8 266.3 1793.3 266.4C1798.7 266.5 1803.2 267.5 1808.1 269.1C1813.1 270.6 1818.0 273.6 1823.0 275.6C1827.9 277.6 1832.9 279.8 1837.8 280.9C1842.8 282.1 1847.7 282.3 1852.7 282.4C1857.6 282.5 1862.6 282.5 1867.5 281.5C1872.4 280.5 1877.4 278.6 1882.3 276.5C1887.3 274.4 1892.2 271.4 1897.2 269.1C1902.1 266.7 1908.1 264.2 1912.0 262.5C1916.0 260.9 1916.5 260.9 1920.9 259.3C1925.4 257.6 1933.7 253.9 1938.9 252.4C1944.1 251.0 1949.7 250.9 1951.9 250.6" fill="none" stroke="#009200" stroke-width="1.25"/>
<line x1="5" y1="281.7" x2="95.0" y2="281.7" stroke="#009200" stroke-width="1.1" stroke-dasharray="4 2.5"/>
<line x1="1951.9" y1="250.6" x2="2048" y2="250.6" stroke="#009200" stroke-width="1.1" stroke-dasharray="4 2.5"/>
<circle cx="95.0" cy="281.7" r="2.1" fill="#00c000"/>
<circle cx="1951.9" cy="250.6" r="2.1" fill="#00c000"/>
<path d="M95.0 341.9C98.2 342.1 107.6 342.7 114.2 343.2C120.8 343.8 127.9 344.4 134.7 345.3C141.5 346.1 149.2 347.6 155.2 348.3C161.2 349.1 166.0 350.6 170.6 350.1C175.1 349.5 178.3 347.2 182.5 345.3C186.8 343.3 191.9 339.9 196.2 338.4C200.5 337.0 204.2 336.3 208.2 336.4C212.2 336.4 215.9 337.3 220.1 338.8C224.4 340.3 229.3 343.4 233.8 345.3C238.4 347.2 242.9 349.0 247.5 350.1C252.0 351.1 256.0 351.3 261.2 351.4C266.3 351.5 272.5 351.2 278.2 350.7C283.9 350.3 289.6 349.7 295.3 348.7C301.0 347.7 306.2 346.0 312.4 344.9C318.7 343.9 326.7 343.0 332.9 342.5C339.2 342.1 344.9 342.2 350.0 342.2C355.1 342.2 359.1 342.8 363.7 342.5C368.2 342.3 373.1 341.0 377.4 340.5C381.6 340.0 384.8 339.2 389.3 339.5C393.9 339.7 399.3 340.8 404.7 341.9C410.1 342.9 417.2 345.2 421.8 346.0C426.4 346.7 428.1 347.0 432.1 346.3C436.0 345.6 440.6 343.7 445.7 341.9C450.8 340.0 457.1 336.9 462.8 335.0C468.5 333.1 474.5 331.8 479.9 330.6C485.3 329.4 490.7 328.4 495.3 327.8C499.8 327.3 503.0 327.0 507.2 327.2C511.5 327.3 515.8 327.7 520.9 328.9C526.0 330.0 532.3 332.1 538.0 334.0C543.7 335.9 549.4 338.5 555.1 340.1C560.8 341.8 567.1 343.7 572.2 343.9C577.3 344.1 581.3 342.3 585.9 341.2C590.4 340.1 595.5 338.2 599.5 337.4C603.5 336.6 605.8 336.2 609.8 336.4C613.8 336.6 618.9 337.8 623.5 338.4C628.0 339.1 631.4 340.4 637.1 340.5C642.8 340.5 651.9 338.4 657.6 338.8C663.3 339.1 666.2 340.7 671.3 342.5C676.4 344.4 683.3 348.0 688.4 350.1C693.5 352.1 696.9 353.8 702.1 354.8C707.2 355.9 712.9 356.3 719.2 356.6C725.4 356.8 733.4 357.5 739.7 356.6C745.9 355.6 751.6 353.0 756.8 351.1C761.9 349.2 766.6 346.7 770.4 345.3C774.3 343.8 775.6 342.9 780.0 342.5C784.4 342.2 791.4 342.8 797.1 343.2C802.8 343.7 808.5 345.4 814.2 345.3C819.9 345.1 825.6 343.2 831.3 342.2C837.0 341.2 843.2 339.7 848.4 339.5C853.5 339.2 856.9 339.9 862.0 340.8C867.2 341.8 873.4 344.2 879.1 345.3C884.8 346.3 890.5 346.9 896.2 347.0C901.9 347.1 908.2 346.4 913.3 346.0C918.4 345.5 922.4 344.1 927.0 344.2C931.5 344.4 936.1 345.8 940.6 346.6C945.2 347.5 950.0 348.8 954.3 349.4C958.6 349.9 962.3 350.9 966.3 350.1C970.3 349.2 974.0 346.5 978.2 344.2C982.5 342.0 987.4 338.6 991.9 336.7C996.5 334.8 1001.0 334.0 1005.6 333.0C1010.1 331.9 1014.7 331.4 1019.3 330.6C1023.8 329.8 1028.4 329.0 1032.9 328.2C1037.5 327.3 1042.6 325.8 1046.6 325.4C1050.6 325.1 1052.9 325.0 1056.9 326.1C1060.8 327.3 1066.0 329.8 1070.5 332.3C1075.1 334.8 1079.6 338.2 1084.2 341.2C1088.8 344.1 1093.9 347.6 1097.9 350.1C1101.9 352.6 1103.6 354.2 1108.1 356.2C1112.6 358.2 1117.7 362.0 1124.9 362.2C1132.1 362.4 1143.3 357.5 1151.2 357.2C1159.1 356.8 1164.4 358.9 1172.3 360.2C1180.2 361.4 1189.9 363.7 1198.7 364.7C1207.4 365.7 1217.5 366.4 1225.0 366.2C1232.5 366.1 1237.3 366.2 1243.5 363.7C1249.6 361.2 1255.3 355.3 1261.9 351.1C1268.5 346.9 1276.8 341.2 1283.0 338.5C1289.1 335.8 1292.6 335.0 1298.8 335.0C1304.9 335.0 1312.8 337.2 1319.9 338.5C1326.9 339.7 1333.9 342.1 1340.9 342.5C1348.0 342.9 1355.9 339.6 1362.0 341.0C1368.2 342.4 1371.7 346.5 1377.8 351.1C1384.0 355.7 1392.3 364.6 1398.9 368.8C1405.5 373.0 1410.3 375.9 1417.4 376.3C1424.4 376.8 1432.7 373.2 1441.1 371.3C1449.4 369.4 1460.2 367.3 1467.4 364.7C1474.7 362.2 1479.2 358.5 1484.5 355.9C1489.9 353.4 1493.9 351.8 1499.4 349.4C1504.8 347.0 1510.8 343.7 1517.2 341.7C1523.6 339.7 1531.0 337.9 1538.0 337.5C1544.9 337.2 1551.3 339.1 1558.8 339.6C1566.2 340.1 1574.6 339.9 1582.5 340.5C1590.4 341.1 1599.3 341.8 1606.2 343.2C1613.2 344.5 1618.1 346.6 1624.1 348.5C1630.0 350.4 1635.9 353.1 1641.9 354.8C1647.8 356.4 1653.3 357.5 1659.7 358.3C1666.1 359.1 1674.0 359.4 1680.5 359.5C1686.9 359.6 1692.8 359.3 1698.3 358.9C1703.7 358.6 1707.7 358.2 1713.1 357.4C1718.6 356.6 1724.5 354.9 1730.9 354.2C1737.4 353.4 1743.3 353.2 1751.7 353.0C1760.1 352.8 1772.0 352.8 1781.4 353.0C1790.8 353.1 1801.2 353.3 1808.1 353.9C1815.1 354.5 1819.1 356.0 1823.0 356.5C1826.8 357.1 1825.3 356.0 1831.1 357.2C1836.8 358.4 1849.5 362.0 1857.4 363.7C1865.3 365.5 1871.5 368.2 1878.5 367.8C1885.5 367.3 1891.7 365.0 1899.6 361.2C1907.5 357.4 1917.2 350.5 1925.9 345.0C1934.6 339.6 1947.6 331.4 1951.9 328.6" fill="none" stroke="#009292" stroke-width="1.25"/>
<line x1="5" y1="341.9" x2="95.0" y2="341.9" stroke="#009292" stroke-width="1.1" stroke-dasharray="4 2.5"/>
<line x1="1951.9" y1="328.6" x2="2048" y2="328.6" stroke="#009292" stroke-width="1.1" stroke-dasharray="4 2.5"/>
<circle cx="95.0" cy="341.9" r="2.1" fill="#00b4b4"/>
<circle cx="1951.9" cy="328.6" r="2.1" fill="#00b4b4"/>
<path d="M95.0 423.3C98.3 424.2 108.4 426.2 115.1 429.0C121.8 431.8 128.0 437.3 135.2 440.1C142.3 442.9 150.2 446.5 157.8 445.9C165.3 445.2 173.2 439.6 180.3 436.2C187.5 432.9 192.9 427.7 200.4 425.7C208.0 423.6 217.2 424.0 225.5 423.7C233.9 423.5 243.1 424.7 250.6 424.2C258.2 423.7 264.9 422.9 270.7 420.9C276.6 418.9 279.9 414.3 285.8 412.2C291.6 410.1 299.2 408.5 305.9 408.4C312.5 408.2 319.2 409.0 325.9 411.2C332.6 413.5 339.3 418.5 346.0 421.8C352.7 425.2 359.4 428.6 366.1 431.4C372.8 434.2 379.9 436.9 386.2 438.6C392.4 440.4 397.9 442.6 403.7 442.0C409.6 441.5 415.0 438.2 421.3 435.3C427.6 432.3 434.7 426.9 441.4 424.2C448.1 421.6 454.8 420.6 461.5 419.4C468.2 418.2 474.0 417.0 481.6 417.0C489.1 417.0 497.5 419.1 506.7 419.4C515.9 419.7 527.6 418.9 536.8 418.9C546.0 418.9 554.4 420.0 561.9 419.4C569.4 418.9 575.3 416.8 582.0 415.6C588.7 414.4 595.4 412.2 602.0 412.2C608.7 412.2 615.4 413.7 622.1 415.6C628.8 417.4 635.5 420.6 642.2 423.3C648.9 425.9 655.6 429.1 662.3 431.4C669.0 433.8 676.5 436.8 682.4 437.2C688.2 437.6 692.4 436.8 697.4 433.8C702.4 430.9 707.5 423.8 712.5 419.4C717.5 415.0 721.7 410.4 727.6 407.4C733.4 404.4 741.8 402.2 747.6 401.6C753.5 401.1 757.7 402.1 762.7 404.0C767.7 406.0 771.9 410.0 777.8 413.2C783.6 416.4 791.1 423.0 797.8 423.3C804.5 423.5 811.2 417.3 817.9 414.6C824.6 412.0 832.1 407.8 838.0 407.4C843.9 407.0 848.0 409.6 853.1 412.2C858.1 414.8 863.1 419.7 868.1 423.3C873.1 426.9 878.2 431.5 883.2 433.8C888.2 436.2 892.4 437.2 898.2 437.2C904.1 437.2 911.6 435.4 918.3 433.8C925.0 432.2 931.7 429.8 938.4 427.6C945.1 425.4 952.6 421.0 958.5 420.9C964.3 420.7 967.7 424.5 973.5 426.6C979.4 428.8 986.9 433.2 993.6 433.8C1000.3 434.5 1007.0 431.8 1013.7 430.5C1020.4 429.1 1027.1 426.9 1033.8 425.7C1040.5 424.5 1047.2 424.1 1053.9 423.3C1060.6 422.5 1066.4 421.7 1073.9 420.9C1081.5 420.0 1091.5 417.8 1099.0 418.0C1106.6 418.1 1112.4 419.7 1119.1 421.8C1125.8 423.9 1132.5 428.2 1139.2 430.5C1145.9 432.7 1152.6 435.3 1159.3 435.3C1166.0 435.3 1171.8 432.5 1179.4 430.5C1186.9 428.5 1196.9 426.1 1204.5 423.3C1212.0 420.4 1217.9 416.4 1224.6 413.2C1231.2 410.0 1238.8 405.8 1244.6 404.0C1250.5 402.3 1254.7 401.9 1259.7 402.6C1264.7 403.3 1268.9 405.8 1274.8 408.4C1280.6 410.9 1288.1 415.7 1294.8 418.0C1301.5 420.2 1308.2 420.2 1314.9 421.8C1321.6 423.4 1328.3 425.3 1335.0 427.6C1341.7 429.8 1348.4 433.8 1355.1 435.3C1361.8 436.7 1367.6 436.9 1375.2 436.2C1382.7 435.6 1392.7 433.8 1400.3 431.4C1407.8 429.0 1412.8 424.9 1420.3 421.8C1427.9 418.8 1438.3 415.2 1445.4 413.2C1452.6 411.2 1457.2 409.2 1463.0 409.8C1468.9 410.4 1475.1 413.0 1480.6 417.0C1486.0 421.0 1490.6 428.8 1495.6 433.8C1500.7 438.9 1505.7 444.7 1510.7 447.3C1515.7 449.9 1519.9 450.7 1525.8 449.7C1531.6 448.7 1539.2 445.1 1545.9 441.0C1552.5 437.0 1559.2 429.4 1565.9 425.7C1572.6 421.9 1579.3 418.9 1586.0 418.5C1592.7 418.0 1599.4 421.3 1606.1 422.8C1612.8 424.3 1619.5 427.3 1626.2 427.6C1632.9 427.8 1639.6 425.6 1646.3 424.2C1652.9 422.9 1659.6 421.0 1666.3 419.4C1673.0 417.8 1679.7 417.0 1686.4 414.6C1693.1 412.2 1700.6 407.2 1706.5 405.0C1712.4 402.8 1716.5 400.4 1721.6 401.6C1726.6 402.8 1731.6 408.2 1736.6 412.2C1741.6 416.2 1747.5 422.9 1751.7 425.7C1755.9 428.5 1756.7 429.7 1761.7 429.0C1766.7 428.4 1775.1 424.2 1781.8 421.8C1788.5 419.4 1796.0 416.0 1801.9 414.6C1807.7 413.2 1811.1 412.8 1816.9 413.2C1822.8 413.6 1829.5 415.4 1837.0 417.0C1844.6 418.6 1854.6 421.4 1862.1 422.8C1869.7 424.1 1875.5 425.3 1882.2 425.2C1888.9 425.0 1895.6 423.4 1902.3 421.8C1909.0 420.2 1916.5 417.7 1922.4 415.6C1928.2 413.4 1932.5 410.4 1937.4 408.8C1942.4 407.2 1949.5 406.4 1951.9 406.0" fill="none" stroke="#0000a8" stroke-width="1.25"/>
<line x1="5" y1="423.3" x2="95.0" y2="423.3" stroke="#0000a8" stroke-width="1.1" stroke-dasharray="4 2.5"/>
<line x1="1951.9" y1="406.0" x2="2048" y2="406.0" stroke="#0000a8" stroke-width="1.1" stroke-dasharray="4 2.5"/>
<circle cx="95.0" cy="423.3" r="2.1" fill="#0000a8"/>
<circle cx="1951.9" cy="406.0" r="2.1" fill="#0000a8"/>
<path d="M95.0 507.7C98.3 508.7 108.4 512.5 115.1 513.5C121.8 514.4 127.6 514.1 135.2 513.5C142.7 512.8 151.1 511.2 160.3 509.6C169.5 508.1 182.0 503.9 190.4 504.3C198.8 504.8 204.2 510.4 210.5 512.5C216.7 514.7 222.2 518.0 228.0 517.3C233.9 516.7 239.3 511.6 245.6 508.7C251.9 505.7 259.0 501.9 265.7 499.5C272.4 497.1 279.1 496.1 285.8 494.2C292.5 492.4 300.0 489.6 305.9 488.5C311.7 487.4 315.9 486.7 320.9 487.5C325.9 488.3 330.1 491.0 336.0 493.3C341.8 495.6 349.4 499.9 356.1 501.5C362.7 503.1 368.6 503.1 376.1 502.9C383.7 502.7 392.9 501.5 401.2 500.5C409.6 499.5 419.6 497.7 426.3 497.1C433.0 496.6 435.5 495.8 441.4 497.1C447.3 498.5 454.8 502.6 461.5 505.3C468.2 508.0 474.9 512.1 481.6 513.5C488.3 514.8 494.1 513.8 501.6 513.5C509.2 513.2 518.4 512.1 526.7 511.6C535.1 511.0 544.3 511.2 551.8 510.1C559.4 509.1 565.2 507.1 571.9 505.3C578.6 503.5 585.3 499.5 592.0 499.1C598.7 498.7 605.4 501.6 612.1 502.9C618.8 504.2 625.5 506.9 632.2 506.7C638.9 506.6 646.4 503.4 652.2 501.9C658.1 500.5 662.3 497.8 667.3 498.1C672.3 498.4 676.5 500.8 682.4 503.9C688.2 506.9 695.8 513.1 702.4 516.4C709.1 519.6 716.7 523.0 722.5 523.6C728.4 524.1 731.7 522.0 737.6 519.7C743.4 517.5 751.0 512.8 757.7 510.1C764.4 507.5 771.1 505.6 777.8 503.9C784.4 502.1 791.1 501.7 797.8 499.5C804.5 497.4 812.1 491.9 817.9 490.9C823.8 489.8 827.1 490.9 833.0 493.3C838.8 495.7 846.4 502.7 853.1 505.3C859.8 507.9 867.3 509.6 873.1 509.2C879.0 508.7 882.3 505.9 888.2 502.9C894.1 499.9 902.4 493.4 908.3 490.9C914.1 488.3 918.3 487.1 923.3 487.5C928.4 487.9 933.4 490.7 938.4 493.3C943.4 495.8 948.4 500.7 953.5 502.9C958.5 505.1 962.7 506.9 968.5 506.7C974.4 506.6 981.9 503.1 988.6 501.9C995.3 500.7 1002.0 499.4 1008.7 499.5C1015.4 499.7 1021.2 502.3 1028.8 502.9C1036.3 503.5 1046.3 503.1 1053.9 502.9C1061.4 502.7 1066.4 503.0 1073.9 501.9C1081.5 500.9 1090.7 497.7 1099.0 496.6C1107.4 495.6 1115.8 494.9 1124.1 495.7C1132.5 496.5 1141.3 499.9 1149.3 501.5C1157.2 503.1 1165.1 505.5 1171.8 505.3C1178.5 505.1 1184.0 501.5 1189.4 500.5C1194.9 499.5 1198.6 498.3 1204.5 499.1C1210.3 499.9 1217.9 502.7 1224.6 505.3C1231.2 507.9 1237.9 511.7 1244.6 514.9C1251.3 518.1 1259.3 522.5 1264.7 524.5C1270.2 526.5 1272.2 528.3 1277.3 526.9C1282.3 525.6 1289.4 520.2 1294.8 516.4C1300.3 512.5 1304.9 506.3 1309.9 503.9C1314.9 501.4 1319.9 501.1 1325.0 501.5C1330.0 501.9 1335.0 504.4 1340.0 506.3C1345.0 508.1 1348.4 510.7 1355.1 512.5C1361.8 514.4 1372.2 515.6 1380.2 517.3C1388.1 519.1 1396.1 523.1 1402.8 523.1C1409.5 523.1 1414.1 519.5 1420.3 517.3C1426.6 515.2 1433.7 511.9 1440.4 510.1C1447.1 508.3 1453.8 508.2 1460.5 506.7C1467.2 505.3 1473.9 503.1 1480.6 501.5C1487.3 499.9 1494.8 497.9 1500.7 497.1C1506.5 496.4 1509.9 496.3 1515.7 497.1C1521.6 497.9 1529.1 500.3 1535.8 501.9C1542.5 503.5 1547.5 505.5 1555.9 506.7C1564.3 507.9 1577.6 509.4 1586.0 509.2C1594.4 508.9 1599.4 506.6 1606.1 505.3C1612.8 504.0 1619.5 502.3 1626.2 501.5C1632.9 500.6 1638.7 499.8 1646.3 500.0C1653.8 500.3 1662.2 502.3 1671.4 502.9C1680.6 503.5 1693.1 503.3 1701.5 503.9C1709.8 504.4 1714.9 506.4 1721.6 506.3C1728.3 506.1 1735.8 503.7 1741.6 502.9C1747.5 502.1 1750.8 501.2 1756.7 501.5C1762.6 501.7 1770.1 503.1 1776.8 504.3C1783.5 505.6 1790.2 508.3 1796.9 509.2C1803.6 510.0 1810.2 508.6 1816.9 509.2C1823.6 509.7 1830.3 511.3 1837.0 512.5C1843.7 513.7 1850.4 516.4 1857.1 516.4C1863.8 516.4 1869.7 514.1 1877.2 512.5C1884.7 510.9 1894.8 509.6 1902.3 506.7C1909.8 503.9 1916.5 499.1 1922.4 495.7C1928.2 492.2 1932.5 488.9 1937.4 486.1C1942.4 483.3 1949.5 480.1 1951.9 478.9" fill="none" stroke="#920092" stroke-width="1.25"/>
<line x1="5" y1="507.7" x2="95.0" y2="507.7" stroke="#920092" stroke-width="1.1" stroke-dasharray="4 2.5"/>
<line x1="1951.9" y1="478.9" x2="2048" y2="478.9" stroke="#920092" stroke-width="1.1" stroke-dasharray="4 2.5"/>
<circle cx="95.0" cy="507.7" r="2.1" fill="#920092"/>
<circle cx="1951.9" cy="478.9" r="2.1" fill="#920092"/>
<path d="M95.0 595.8C98.3 596.8 107.6 600.4 115.1 601.6C122.6 602.8 131.8 604.6 140.2 603.0C148.5 601.4 156.9 595.0 165.3 592.0C173.7 588.9 182.0 587.2 190.4 584.8C198.8 582.4 206.3 579.2 215.5 577.6C224.7 576.0 237.2 577.2 245.6 575.2C254.0 573.2 259.0 568.2 265.7 565.5C272.4 562.9 279.9 560.1 285.8 559.3C291.6 558.5 295.0 558.9 300.8 560.7C306.7 562.6 314.2 567.1 320.9 570.4C327.6 573.6 334.3 578.4 341.0 580.0C347.7 581.6 354.4 580.5 361.1 580.0C367.8 579.4 374.5 577.4 381.2 576.6C387.8 575.8 393.7 574.8 401.2 575.2C408.8 575.5 418.0 577.3 426.3 578.5C434.7 579.7 443.1 581.2 451.4 582.4C459.8 583.6 469.0 585.7 476.5 585.7C484.1 585.7 489.9 583.7 496.6 582.4C503.3 581.0 510.0 578.4 516.7 577.6C523.4 576.8 529.3 577.2 536.8 577.6C544.3 578.0 554.4 578.9 561.9 580.0C569.4 581.0 575.7 582.9 582.0 583.8C588.2 584.8 594.1 586.8 599.5 585.7C605.0 584.7 609.6 581.7 614.6 577.6C619.6 573.4 625.1 564.9 629.7 560.7C634.3 556.6 638.0 553.0 642.2 552.6C646.4 552.2 650.2 555.5 654.8 558.3C659.4 561.1 664.4 567.5 669.8 569.4C675.3 571.2 682.0 569.6 687.4 569.4C692.8 569.1 696.6 567.5 702.4 567.9C708.3 568.3 715.8 570.4 722.5 571.8C729.2 573.2 735.1 575.6 742.6 576.6C750.1 577.6 759.3 578.0 767.7 577.6C776.1 577.2 785.3 575.0 792.8 574.2C800.3 573.4 806.2 572.4 812.9 572.8C819.6 573.2 827.1 575.0 833.0 576.6C838.8 578.2 843.0 581.2 848.0 582.4C853.1 583.6 858.1 584.6 863.1 583.8C868.1 583.0 872.3 580.0 878.2 577.6C884.0 575.2 891.5 571.0 898.2 569.4C904.9 567.8 911.6 568.2 918.3 567.9C925.0 567.7 931.7 568.2 938.4 567.9C945.1 567.7 951.8 566.1 958.5 566.5C965.2 566.9 971.9 568.9 978.6 570.4C985.3 571.8 992.0 575.3 998.6 575.2C1005.3 575.0 1012.9 570.8 1018.7 569.4C1024.6 568.0 1027.9 566.4 1033.8 567.0C1039.6 567.5 1047.2 569.8 1053.9 572.8C1060.6 575.7 1067.7 582.2 1073.9 584.8C1080.2 587.3 1085.7 588.5 1091.5 588.1C1097.4 587.7 1102.8 584.4 1109.1 582.4C1115.4 580.4 1121.6 578.1 1129.2 576.1C1136.7 574.1 1146.7 572.0 1154.3 570.4C1161.8 568.7 1167.7 566.1 1174.4 566.5C1181.0 566.9 1187.7 570.8 1194.4 572.8C1201.1 574.8 1207.8 578.3 1214.5 578.5C1221.2 578.8 1227.9 576.2 1234.6 574.2C1241.3 572.2 1248.8 568.1 1254.7 566.5C1260.5 564.9 1263.9 563.7 1269.7 564.6C1275.6 565.5 1283.1 569.4 1289.8 571.8C1296.5 574.2 1303.2 577.9 1309.9 579.0C1316.6 580.1 1322.4 578.9 1330.0 578.5C1337.5 578.1 1346.7 576.9 1355.1 576.6C1363.4 576.3 1371.8 577.1 1380.2 576.6C1388.5 576.1 1398.6 573.3 1405.3 573.7C1412.0 574.1 1414.5 576.2 1420.3 579.0C1426.2 581.8 1434.6 588.0 1440.4 590.5C1446.3 593.1 1448.8 594.1 1455.5 594.4C1462.2 594.6 1472.2 592.4 1480.6 592.0C1489.0 591.6 1497.3 592.4 1505.7 592.0C1514.1 591.6 1523.3 588.8 1530.8 589.6C1538.3 590.4 1545.0 594.6 1550.9 596.8C1556.7 599.0 1560.9 602.6 1565.9 602.6C1571.0 602.6 1575.1 600.6 1581.0 596.8C1586.8 593.0 1595.2 584.2 1601.1 580.0C1606.9 575.7 1611.1 572.9 1616.1 571.3C1621.2 569.7 1625.3 569.1 1631.2 570.4C1637.1 571.6 1644.6 575.6 1651.3 578.5C1658.0 581.5 1664.7 585.7 1671.4 588.1C1678.0 590.6 1685.6 592.2 1691.4 593.4C1697.3 594.6 1701.5 595.6 1706.5 595.3C1711.5 595.1 1715.7 594.8 1721.6 592.0C1727.4 589.2 1735.8 581.7 1741.6 578.5C1747.5 575.3 1751.7 572.9 1756.7 572.8C1761.7 572.6 1765.9 575.3 1771.8 577.6C1777.6 579.8 1786.0 584.4 1791.8 586.2C1797.7 588.1 1801.9 589.3 1806.9 588.6C1811.9 588.0 1816.1 585.8 1822.0 582.4C1827.8 578.9 1836.2 571.8 1842.0 567.9C1847.9 564.1 1852.1 561.1 1857.1 559.3C1862.1 557.4 1867.1 556.6 1872.2 556.9C1877.2 557.1 1881.4 558.9 1887.2 560.7C1893.1 562.6 1899.8 566.1 1907.3 567.9C1914.8 569.8 1925.0 570.4 1932.4 571.8C1939.8 573.2 1948.7 575.4 1951.9 576.1" fill="none" stroke="#6c0000" stroke-width="1.25"/>
<line x1="5" y1="595.8" x2="95.0" y2="595.8" stroke="#6c0000" stroke-width="1.1" stroke-dasharray="4 2.5"/>
<line x1="1951.9" y1="576.1" x2="2048" y2="576.1" stroke="#6c0000" stroke-width="1.1" stroke-dasharray="4 2.5"/>
<circle cx="95.0" cy="595.8" r="2.1" fill="#6c0000"/>
<circle cx="1951.9" cy="576.1" r="2.1" fill="#6c0000"/>
<path d="M95.0 660.9C98.3 661.6 107.6 663.9 115.1 664.8C122.6 665.7 131.0 665.4 140.2 666.2C149.4 667.0 161.1 668.2 170.3 669.6C179.5 671.0 187.9 673.4 195.4 674.4C202.9 675.4 208.8 675.8 215.5 675.4C222.2 675.0 228.9 674.6 235.6 672.0C242.3 669.4 249.0 664.2 255.6 660.0C262.3 655.7 269.0 649.9 275.7 646.5C282.4 643.2 290.0 640.9 295.8 639.8C301.7 638.7 305.0 638.8 310.9 639.8C316.7 640.7 324.7 643.2 331.0 645.6C337.2 647.9 343.5 651.9 348.5 653.7C353.5 655.6 356.5 657.2 361.1 656.6C365.7 656.1 371.1 652.2 376.1 650.4C381.2 648.5 386.2 646.2 391.2 645.6C396.2 644.9 400.4 645.3 406.3 646.5C412.1 647.7 419.6 651.2 426.3 652.8C433.0 654.4 439.7 654.4 446.4 656.1C453.1 657.9 459.8 660.5 466.5 663.3C473.2 666.2 479.9 670.8 486.6 673.4C493.3 676.1 500.8 678.6 506.7 679.2C512.5 679.8 515.9 678.6 521.7 676.8C527.6 675.0 535.1 671.4 541.8 668.6C548.5 665.8 555.2 662.2 561.9 660.0C568.6 657.7 574.4 656.0 582.0 655.2C589.5 654.4 598.7 654.9 607.1 655.2C615.4 655.4 623.8 656.2 632.2 656.6C640.5 657.0 648.9 656.6 657.3 657.6C665.6 658.5 674.0 660.9 682.4 662.4C690.7 663.8 699.1 665.4 707.5 666.2C715.8 667.0 725.0 667.6 732.6 667.2C740.1 666.8 745.1 665.4 752.7 663.8C760.2 662.2 770.2 659.0 777.8 657.6C785.3 656.1 790.3 655.0 797.8 655.2C805.4 655.3 814.6 658.0 822.9 658.5C831.3 659.1 839.7 658.9 848.0 658.5C856.4 658.2 864.8 657.2 873.1 656.6C881.5 656.1 889.0 655.3 898.2 655.2C907.4 655.1 920.0 657.2 928.4 656.1C936.7 655.1 941.7 650.5 948.4 648.9C955.1 647.3 961.8 646.3 968.5 646.5C975.2 646.8 981.1 648.1 988.6 650.4C996.1 652.6 1005.3 657.2 1013.7 660.0C1022.1 662.8 1032.1 665.7 1038.8 667.2C1045.5 668.6 1048.0 668.2 1053.9 668.6C1059.7 669.0 1066.4 670.2 1073.9 669.6C1081.5 669.0 1091.5 667.2 1099.0 664.8C1106.6 662.4 1112.4 659.0 1119.1 655.2C1125.8 651.3 1132.5 645.6 1139.2 641.7C1145.9 637.9 1152.6 634.3 1159.3 632.1C1166.0 629.9 1173.1 628.5 1179.4 628.7C1185.6 629.0 1191.1 630.9 1196.9 633.5C1202.8 636.2 1208.2 641.4 1214.5 644.6C1220.8 647.8 1227.1 650.8 1234.6 652.8C1242.1 654.7 1251.3 655.1 1259.7 656.1C1268.1 657.2 1277.3 658.5 1284.8 659.0C1292.3 659.5 1298.2 660.2 1304.9 659.0C1311.6 657.8 1318.3 653.5 1325.0 651.8C1331.7 650.1 1338.3 649.2 1345.0 648.9C1351.7 648.7 1358.4 649.7 1365.1 650.4C1371.8 651.0 1377.7 652.9 1385.2 652.8C1392.7 652.6 1402.8 649.6 1410.3 649.4C1417.8 649.2 1423.7 650.2 1430.4 651.8C1437.1 653.4 1443.8 657.2 1450.5 659.0C1457.2 660.9 1463.0 662.1 1470.5 662.9C1478.1 663.6 1487.3 664.0 1495.6 663.3C1504.0 662.7 1513.2 660.9 1520.7 659.0C1528.3 657.1 1534.1 653.8 1540.8 651.8C1547.5 649.8 1554.2 647.2 1560.9 647.0C1567.6 646.8 1574.3 649.0 1581.0 650.4C1587.7 651.7 1593.5 653.8 1601.1 655.2C1608.6 656.5 1617.8 657.3 1626.2 658.5C1634.5 659.7 1643.7 662.9 1651.3 662.4C1658.8 661.8 1664.7 657.3 1671.4 655.2C1678.0 653.0 1684.7 649.8 1691.4 649.4C1698.1 649.0 1704.8 651.2 1711.5 652.8C1718.2 654.4 1724.1 657.8 1731.6 659.0C1739.1 660.2 1748.3 660.2 1756.7 660.0C1765.1 659.7 1773.4 658.0 1781.8 657.6C1790.2 657.2 1798.5 657.7 1806.9 657.6C1815.3 657.4 1822.8 656.1 1832.0 656.6C1841.2 657.2 1852.9 660.9 1862.1 660.9C1871.3 660.9 1879.7 657.2 1887.2 656.6C1894.8 656.1 1900.6 656.4 1907.3 657.6C1914.0 658.8 1920.0 662.9 1927.4 663.8C1934.8 664.8 1947.8 663.4 1951.9 663.3" fill="none" stroke="#6c6c00" stroke-width="1.25"/>
<line x1="5" y1="660.9" x2="95.0" y2="660.9" stroke="#6c6c00" stroke-width="1.1" stroke-dasharray="4 2.5"/>
<line x1="1951.9" y1="663.3" x2="2048" y2="663.3" stroke="#6c6c00" stroke-width="1.1" stroke-dasharray="4 2.5"/>
<circle cx="95.0" cy="660.9" r="2.1" fill="#6c6c00"/>
<circle cx="1951.9" cy="663.3" r="2.1" fill="#6c6c00"/>
<path d="M95.0 719.5C97.9 719.7 106.7 718.9 112.6 720.5C118.4 722.1 123.4 726.7 130.1 729.1C136.8 731.5 145.2 735.3 152.7 734.9C160.3 734.5 168.2 728.7 175.3 726.7C182.4 724.7 188.7 722.7 195.4 722.9C202.1 723.0 208.0 726.5 215.5 727.7C223.0 728.9 232.2 729.9 240.6 730.1C249.0 730.3 258.2 728.5 265.7 729.1C273.2 729.8 279.1 731.9 285.8 733.9C292.5 735.9 299.2 741.4 305.9 741.2C312.5 740.9 319.2 734.7 325.9 732.5C332.6 730.3 338.5 728.1 346.0 727.7C353.5 727.3 362.7 729.6 371.1 730.1C379.5 730.6 387.0 730.2 396.2 730.6C405.4 731.0 418.0 732.9 426.3 732.5C434.7 732.1 439.7 729.8 446.4 728.2C453.1 726.6 459.8 723.0 466.5 722.9C473.2 722.8 479.9 726.3 486.6 727.7C493.3 729.1 500.0 731.3 506.7 731.5C513.4 731.8 520.0 730.1 526.7 729.1C533.4 728.2 540.1 725.6 546.8 725.8C553.5 725.9 560.2 728.3 566.9 730.1C573.6 731.9 581.1 734.9 587.0 736.4C592.8 737.8 596.2 739.6 602.0 738.8C607.9 738.0 615.4 734.6 622.1 731.5C628.8 728.5 635.5 723.4 642.2 720.5C648.9 717.5 656.4 714.3 662.3 713.8C668.1 713.2 671.9 714.8 677.3 717.1C682.8 719.4 689.5 725.1 694.9 727.7C700.4 730.3 704.5 732.9 710.0 732.5C715.4 732.1 721.3 727.6 727.6 725.3C733.8 723.0 740.9 719.4 747.6 718.6C754.3 717.8 761.0 719.7 767.7 720.5C774.4 721.3 780.3 723.5 787.8 723.4C795.3 723.2 804.5 721.1 812.9 719.5C821.3 717.9 830.5 715.2 838.0 713.8C845.5 712.3 851.4 711.1 858.1 710.9C864.8 710.6 871.5 710.7 878.2 712.3C884.9 713.9 891.5 717.7 898.2 720.5C904.9 723.3 912.5 727.5 918.3 729.1C924.2 730.8 927.5 731.4 933.4 730.6C939.2 729.8 946.8 727.0 953.5 724.3C960.2 721.7 966.8 717.5 973.5 714.7C980.2 711.9 986.9 708.7 993.6 707.5C1000.3 706.3 1007.8 706.1 1013.7 707.5C1019.6 708.9 1022.9 712.2 1028.8 715.7C1034.6 719.1 1041.3 726.2 1048.8 728.2C1056.4 730.2 1065.6 729.1 1073.9 727.7C1082.3 726.3 1091.5 722.1 1099.0 719.5C1106.6 717.0 1113.3 713.8 1119.1 712.3C1125.0 710.9 1128.3 710.1 1134.2 710.9C1140.0 711.7 1147.6 713.9 1154.3 717.1C1161.0 720.3 1168.5 726.9 1174.4 730.1C1180.2 733.3 1183.6 736.1 1189.4 736.4C1195.3 736.6 1202.8 732.9 1209.5 731.5C1216.2 730.2 1222.0 728.6 1229.6 728.2C1237.1 727.8 1247.1 728.8 1254.7 729.1C1262.2 729.5 1267.2 729.3 1274.8 730.1C1282.3 730.9 1291.5 733.5 1299.9 733.9C1308.2 734.4 1317.4 732.7 1325.0 733.0C1332.5 733.2 1337.9 734.2 1345.0 735.4C1352.2 736.6 1360.1 739.8 1367.6 740.2C1375.2 740.6 1382.3 739.1 1390.2 737.8C1398.2 736.5 1407.8 734.9 1415.3 732.5C1422.9 730.1 1428.7 725.8 1435.4 723.4C1442.1 721.0 1448.0 719.1 1455.5 718.1C1463.0 717.0 1472.2 717.8 1480.6 717.1C1489.0 716.4 1498.2 715.1 1505.7 713.8C1513.2 712.4 1519.5 710.4 1525.8 708.9C1532.0 707.5 1537.5 704.8 1543.3 705.1C1549.2 705.4 1554.6 708.2 1560.9 710.9C1567.2 713.5 1574.3 717.4 1581.0 721.0C1587.7 724.6 1594.4 728.3 1601.1 732.5C1607.8 736.7 1614.9 742.4 1621.2 746.0C1627.4 749.6 1633.3 753.3 1638.7 754.1C1644.2 754.9 1648.3 753.3 1653.8 750.8C1659.2 748.2 1665.9 742.0 1671.4 738.8C1676.8 735.5 1680.6 733.1 1686.4 731.5C1692.3 729.9 1699.8 729.7 1706.5 729.1C1713.2 728.6 1719.9 728.8 1726.6 728.2C1733.3 727.5 1740.8 725.5 1746.7 725.3C1752.5 725.1 1756.7 725.1 1761.7 726.7C1766.7 728.4 1771.8 732.4 1776.8 735.4C1781.8 738.4 1786.8 742.2 1791.8 744.5C1796.9 746.8 1801.9 749.1 1806.9 749.3C1811.9 749.6 1816.1 747.7 1822.0 746.0C1827.8 744.2 1834.5 741.2 1842.0 738.8C1849.6 736.4 1858.8 733.4 1867.1 731.5C1875.5 729.7 1884.7 729.5 1892.2 727.7C1899.8 725.9 1905.6 723.3 1912.3 721.0C1919.0 718.6 1925.8 715.8 1932.4 713.8C1939.0 711.7 1948.7 709.3 1951.9 708.5" fill="none" stroke="#006c00" stroke-width="1.25"/>
<line x1="5" y1="719.5" x2="95.0" y2="719.5" stroke="#006c00" stroke-width="1.1" stroke-dasharray="4 2.5"/>
<line x1="1951.9" y1="708.5" x2="2048" y2="708.5" stroke="#006c00" stroke-width="1.1" stroke-dasharray="4 2.5"/>
<circle cx="95.0" cy="719.5" r="2.1" fill="#006c00"/>
<circle cx="1951.9" cy="708.5" r="2.1" fill="#006c00"/>
<path d="M95.0 802.0C98.3 803.2 107.6 806.5 115.1 809.2C122.6 811.8 131.8 815.4 140.2 817.8C148.5 820.2 156.9 822.0 165.3 823.6C173.7 825.2 182.9 827.8 190.4 827.4C197.9 827.0 202.9 824.2 210.5 821.2C218.0 818.1 227.2 813.4 235.6 809.2C243.9 804.9 253.1 798.8 260.7 795.7C268.2 792.7 274.1 791.1 280.7 790.9C287.4 790.7 294.1 792.9 300.8 794.7C307.5 796.6 313.4 800.8 320.9 802.0C328.4 803.2 338.5 800.8 346.0 802.0C353.5 803.2 359.4 806.6 366.1 809.2C372.8 811.7 378.6 815.9 386.2 817.3C393.7 818.8 402.9 818.0 411.3 817.8C419.6 817.7 428.0 817.6 436.4 816.4C444.7 815.2 453.9 811.8 461.5 810.6C469.0 809.4 474.0 811.0 481.6 809.2C489.1 807.3 498.3 802.6 506.7 799.6C515.0 796.5 524.2 793.7 531.8 790.9C539.3 788.1 545.6 784.7 551.8 782.7C558.1 780.8 563.6 779.0 569.4 779.4C575.3 779.8 580.7 783.2 587.0 785.1C593.3 787.1 599.5 789.9 607.1 790.9C614.6 791.9 624.6 790.5 632.2 790.9C639.7 791.3 644.7 792.5 652.2 793.3C659.8 794.1 669.0 796.4 677.3 795.7C685.7 795.0 695.3 790.3 702.4 789.0C709.6 787.6 714.2 786.4 720.0 787.5C725.9 788.7 731.3 791.3 737.6 795.7C743.9 800.1 751.0 809.1 757.7 814.0C764.4 818.9 770.2 822.5 777.8 825.0C785.3 827.6 795.3 830.0 802.9 829.4C810.4 828.7 817.1 823.9 822.9 821.2C828.8 818.5 833.0 814.8 838.0 813.0C843.0 811.3 847.2 809.9 853.1 810.6C858.9 811.3 866.4 815.2 873.1 817.3C879.8 819.5 886.5 822.6 893.2 823.6C899.9 824.6 905.8 825.2 913.3 823.6C920.8 822.0 930.9 818.1 938.4 814.0C945.9 809.8 951.8 802.8 958.5 798.6C965.2 794.4 971.0 790.8 978.6 789.0C986.1 787.1 995.3 787.8 1003.7 787.5C1012.0 787.3 1020.4 787.3 1028.8 787.5C1037.1 787.8 1046.3 789.2 1053.9 789.0C1061.4 788.7 1068.1 786.7 1073.9 786.1C1079.8 785.5 1083.2 784.3 1089.0 785.1C1094.9 785.9 1102.4 789.5 1109.1 790.9C1115.8 792.3 1121.6 793.8 1129.2 793.8C1136.7 793.8 1146.7 790.3 1154.3 790.9C1161.8 791.5 1168.5 795.5 1174.4 797.2C1180.2 798.8 1183.6 800.4 1189.4 800.5C1195.3 800.7 1203.6 798.7 1209.5 798.1C1215.4 797.6 1218.7 796.1 1224.6 797.2C1230.4 798.2 1237.9 801.6 1244.6 804.4C1251.3 807.2 1258.0 811.3 1264.7 814.0C1271.4 816.6 1278.1 818.8 1284.8 820.2C1291.5 821.7 1298.2 822.5 1304.9 822.6C1311.6 822.8 1318.3 822.2 1325.0 821.2C1331.7 820.1 1338.3 818.4 1345.0 816.4C1351.7 814.4 1358.4 812.1 1365.1 809.2C1371.8 806.2 1379.3 800.8 1385.2 798.6C1391.1 796.4 1395.2 796.1 1400.3 795.7C1405.3 795.3 1409.5 797.3 1415.3 796.2C1421.2 795.1 1428.7 791.2 1435.4 789.0C1442.1 786.7 1448.0 784.3 1455.5 782.7C1463.0 781.1 1472.2 779.8 1480.6 779.4C1489.0 779.0 1499.0 779.8 1505.7 780.3C1512.4 780.9 1515.7 781.0 1520.7 782.7C1525.8 784.5 1530.8 788.5 1535.8 790.9C1540.8 793.3 1545.9 795.5 1550.9 797.2C1555.9 798.8 1560.1 800.7 1565.9 800.5C1571.8 800.4 1579.3 797.4 1586.0 796.2C1592.7 795.0 1598.6 794.3 1606.1 793.3C1613.6 792.3 1624.5 791.3 1631.2 789.9C1637.9 788.6 1641.2 786.1 1646.3 785.1C1651.3 784.2 1655.5 783.4 1661.3 784.2C1667.2 785.0 1674.7 788.0 1681.4 789.9C1688.1 791.9 1694.8 795.1 1701.5 795.7C1708.2 796.3 1714.9 792.7 1721.6 793.3C1728.3 793.9 1734.9 797.6 1741.6 799.6C1748.3 801.6 1755.9 804.5 1761.7 805.3C1767.6 806.1 1771.8 805.7 1776.8 804.4C1781.8 803.0 1786.8 798.6 1791.8 797.2C1796.9 795.7 1801.9 794.5 1806.9 795.7C1811.9 796.9 1816.9 801.5 1822.0 804.4C1827.0 807.2 1832.0 812.1 1837.0 813.0C1842.0 814.0 1846.2 812.0 1852.1 810.1C1857.9 808.3 1866.3 803.6 1872.2 802.0C1878.0 800.4 1880.5 800.4 1887.2 800.5C1893.9 800.7 1904.8 801.7 1912.3 802.9C1919.9 804.1 1925.8 806.0 1932.4 807.7C1939.0 809.4 1948.7 812.1 1951.9 813.0" fill="none" stroke="#006c6c" stroke-width="1.25"/>
<line x1="5" y1="802.0" x2="95.0" y2="802.0" stroke="#006c6c" stroke-width="1.1" stroke-dasharray="4 2.5"/>
<line x1="1951.9" y1="813.0" x2="2048" y2="813.0" stroke="#006c6c" stroke-width="1.1" stroke-dasharray="4 2.5"/>
<circle cx="95.0" cy="802.0" r="2.1" fill="#006c6c"/>
<circle cx="1951.9" cy="813.0" r="2.1" fill="#006c6c"/>
<path d="M95.0 874.5C100.0 875.3 115.9 879.5 125.1 879.3C134.3 879.1 141.9 874.7 150.2 873.5C158.6 872.3 167.0 871.4 175.3 872.1C183.7 872.7 192.9 875.9 200.4 877.4C208.0 878.8 212.1 879.8 220.5 880.7C228.9 881.7 240.6 881.4 250.6 883.1C260.7 884.9 272.4 890.9 280.7 891.3C289.1 891.7 294.6 887.1 300.8 885.5C307.1 883.9 312.5 880.9 318.4 881.7C324.3 882.5 329.7 886.9 336.0 890.4C342.2 893.8 349.8 899.7 356.1 902.4C362.3 905.0 366.9 906.6 373.6 906.2C380.3 905.8 387.4 901.6 396.2 900.0C405.0 898.4 416.3 898.0 426.3 896.6C436.4 895.2 447.3 893.1 456.5 891.8C465.7 890.5 474.0 890.8 481.6 888.9C489.1 887.1 494.9 884.7 501.6 880.7C508.3 876.7 515.0 869.1 521.7 864.9C528.4 860.6 535.9 856.5 541.8 855.3C547.7 854.1 551.0 856.1 556.9 857.7C562.7 859.3 569.4 862.9 576.9 864.9C584.5 866.9 593.7 868.1 602.0 869.7C610.4 871.3 618.8 872.5 627.1 874.5C635.5 876.5 643.9 880.3 652.2 881.7C660.6 883.1 669.0 883.1 677.3 883.1C685.7 883.1 694.1 881.5 702.4 881.7C710.8 881.9 720.0 884.1 727.6 884.6C735.1 885.1 740.1 885.0 747.6 884.6C755.2 884.2 764.4 883.0 772.7 882.2C781.1 881.4 791.1 880.4 797.8 879.8C804.5 879.1 807.0 877.8 812.9 878.3C818.8 878.9 826.3 881.3 833.0 883.1C839.7 885.0 845.5 887.5 853.1 889.4C860.6 891.2 869.8 892.4 878.2 894.2C886.5 896.0 894.9 898.6 903.3 900.0C911.6 901.3 920.8 902.6 928.4 902.4C935.9 902.1 941.7 900.5 948.4 898.5C955.1 896.5 961.8 892.5 968.5 890.4C975.2 888.2 981.9 886.6 988.6 885.5C995.3 884.5 1002.0 883.9 1008.7 884.1C1015.4 884.3 1021.2 886.3 1028.8 887.0C1036.3 887.6 1045.5 887.4 1053.9 888.0C1062.2 888.5 1069.8 891.2 1079.0 890.4C1088.2 889.6 1100.7 885.0 1109.1 883.1C1117.5 881.3 1122.5 878.9 1129.2 879.3C1135.9 879.7 1141.7 883.1 1149.3 885.5C1156.8 888.0 1165.1 891.6 1174.4 893.7C1183.6 895.9 1195.3 897.5 1204.5 898.5C1213.7 899.6 1221.2 900.5 1229.6 900.0C1237.9 899.4 1246.3 897.2 1254.7 895.2C1263.0 893.2 1270.6 889.6 1279.8 888.0C1289.0 886.3 1301.5 886.9 1309.9 885.5C1318.3 884.2 1323.3 880.8 1330.0 879.8C1336.7 878.7 1342.5 878.6 1350.1 879.3C1357.6 880.0 1366.0 883.1 1375.2 884.1C1384.4 885.1 1396.1 885.7 1405.3 885.5C1414.5 885.4 1422.9 884.2 1430.4 883.1C1437.9 882.1 1442.9 879.9 1450.5 879.3C1458.0 878.7 1467.2 879.9 1475.6 879.3C1483.9 878.7 1493.1 878.1 1500.7 875.9C1508.2 873.8 1514.1 868.7 1520.7 866.3C1527.4 863.9 1535.0 862.5 1540.8 861.5C1546.7 860.5 1550.0 859.7 1555.9 860.5C1561.7 861.3 1568.4 864.6 1576.0 866.3C1583.5 868.1 1592.7 869.3 1601.1 871.1C1609.4 873.0 1618.6 875.0 1626.2 877.4C1633.7 879.8 1638.7 882.8 1646.3 885.5C1653.8 888.3 1663.0 891.6 1671.4 893.7C1679.7 895.9 1688.9 897.9 1696.5 898.5C1704.0 899.2 1709.8 898.9 1716.5 897.6C1723.2 896.2 1729.9 892.1 1736.6 890.4C1743.3 888.6 1750.0 888.0 1756.7 887.0C1763.4 886.0 1770.1 885.9 1776.8 884.6C1783.5 883.3 1791.0 880.1 1796.9 879.3C1802.7 878.5 1806.1 878.5 1811.9 879.8C1817.8 881.1 1824.5 885.6 1832.0 887.0C1839.5 888.4 1848.7 887.8 1857.1 888.0C1865.5 888.1 1873.8 887.7 1882.2 888.0C1890.6 888.2 1898.9 889.6 1907.3 889.4C1915.7 889.2 1925.0 888.3 1932.4 887.0C1939.8 885.7 1948.7 882.6 1951.9 881.7" fill="none" stroke="#000084" stroke-width="1.25"/>
<line x1="5" y1="874.5" x2="95.0" y2="874.5" stroke="#000084" stroke-width="1.1" stroke-dasharray="4 2.5"/>
<line x1="1951.9" y1="881.7" x2="2048" y2="881.7" stroke="#000084" stroke-width="1.1" stroke-dasharray="4 2.5"/>
<circle cx="95.0" cy="874.5" r="2.1" fill="#000084"/>
<circle cx="1951.9" cy="881.7" r="2.1" fill="#000084"/>
<path d="M95.0 969.5C97.1 969.4 102.4 969.5 107.3 968.8C112.2 968.2 118.7 966.8 124.4 965.8C130.1 964.7 135.8 963.9 141.5 962.3C147.2 960.7 153.5 958.3 158.6 956.2C163.7 954.1 167.7 951.2 172.3 949.7C176.8 948.2 181.4 947.4 186.0 947.0C190.5 946.5 194.5 946.8 199.6 947.0C204.8 947.1 211.6 948.3 216.7 948.0C221.8 947.7 225.8 946.2 230.4 945.3C234.9 944.3 239.5 942.8 244.1 942.5C248.6 942.2 253.2 942.9 257.7 943.5C262.3 944.2 266.8 946.2 271.4 946.3C276.0 946.4 280.5 945.5 285.1 944.2C289.6 942.9 293.6 940.2 298.8 938.4C303.9 936.6 310.5 934.5 315.9 933.5C321.3 932.4 325.9 931.5 331.0 932.0C336.0 932.6 341.1 935.3 346.0 936.8C350.9 938.3 355.0 939.5 360.3 941.2C365.5 942.8 371.7 944.9 377.4 947.0C383.1 949.1 389.3 951.5 394.5 953.8C399.6 956.1 403.6 958.9 408.1 960.6C412.7 962.3 417.2 964.3 421.8 964.1C426.4 963.8 430.9 960.9 435.5 958.9C440.0 956.9 444.6 953.6 449.1 952.1C453.7 950.6 458.3 949.7 462.8 949.7C467.4 949.7 471.9 951.0 476.5 952.1C481.0 953.2 486.2 955.4 490.2 956.2C494.1 957.0 495.9 957.4 500.4 956.9C505.0 956.3 511.2 954.1 517.5 952.8C523.8 951.4 531.2 950.0 538.0 948.7C544.8 947.3 552.2 945.7 558.5 944.6C564.8 943.4 570.5 942.3 575.6 941.8C580.7 941.4 584.2 941.3 589.3 941.8C594.4 942.4 600.1 944.1 606.4 945.3C612.6 946.4 620.6 947.4 626.9 948.7C633.1 949.9 638.3 951.1 644.0 952.8C649.7 954.5 655.4 957.3 661.1 958.9C666.8 960.5 673.0 962.1 678.1 962.3C683.3 962.6 686.7 961.5 691.8 960.6C696.9 959.8 703.8 957.9 708.9 957.2C714.0 956.5 717.5 956.1 722.6 956.5C727.7 956.9 734.0 958.9 739.7 959.6C745.4 960.3 751.1 960.7 756.8 960.6C762.5 960.6 766.6 959.7 773.8 959.3C781.1 958.9 792.6 958.2 800.5 958.2C808.4 958.3 814.2 959.2 821.0 959.6C827.9 960.0 834.7 960.6 841.5 960.6C848.4 960.6 855.2 959.9 862.0 959.6C868.9 959.3 875.7 959.2 882.5 958.9C889.4 958.7 896.2 958.4 903.0 958.2C909.9 958.1 917.9 958.4 923.6 957.9C929.3 957.4 932.7 956.8 937.2 955.5C941.8 954.3 946.3 951.5 950.9 950.4C955.5 949.2 960.0 948.5 964.6 948.7C969.1 948.8 973.7 950.0 978.2 951.4C982.8 952.8 987.4 955.8 991.9 957.2C996.5 958.6 1001.0 959.7 1005.6 960.0C1010.1 960.2 1014.7 959.2 1019.3 958.9C1023.8 958.6 1028.4 958.2 1032.9 958.2C1037.5 958.2 1042.0 958.0 1046.6 958.9C1051.2 959.9 1055.7 962.3 1060.3 964.1C1064.8 965.8 1069.4 967.9 1073.9 969.2C1078.5 970.5 1083.1 970.8 1087.6 971.9C1092.2 973.1 1096.7 974.6 1101.3 976.0C1105.8 977.4 1111.0 979.3 1115.0 980.1C1118.9 980.9 1121.8 981.1 1125.2 980.8C1128.6 980.5 1131.5 979.5 1135.5 978.1C1139.5 976.6 1144.6 973.9 1149.1 971.9C1153.7 970.0 1158.3 968.0 1162.8 966.4C1167.4 964.9 1171.9 964.1 1176.5 962.3C1181.0 960.6 1185.6 957.8 1190.2 956.2C1194.7 954.6 1198.7 953.6 1203.8 952.8C1209.0 951.9 1215.2 951.2 1220.9 951.1C1226.6 951.0 1232.9 951.2 1238.0 952.1C1243.1 952.9 1247.1 954.9 1251.7 956.2C1256.2 957.4 1260.2 958.9 1265.4 959.6C1270.5 960.3 1277.3 961.0 1282.4 960.6C1287.6 960.2 1291.6 958.8 1296.1 957.2C1300.7 955.7 1305.2 952.9 1309.8 951.4C1314.3 949.9 1319.5 948.6 1323.5 948.0C1327.4 947.4 1329.7 947.0 1333.7 948.0C1337.7 949.0 1342.8 951.7 1347.4 953.8C1351.9 955.9 1356.5 958.9 1361.1 960.6C1365.6 962.3 1369.6 962.9 1374.7 964.1C1379.9 965.2 1386.1 966.7 1391.8 967.5C1397.5 968.2 1403.8 968.6 1408.9 968.5C1414.0 968.4 1417.7 967.7 1422.6 966.8C1427.4 965.9 1432.1 964.4 1438.0 963.0C1443.8 961.7 1450.5 959.5 1457.8 958.8C1465.1 958.0 1473.6 958.2 1481.6 958.8C1489.5 959.3 1497.9 961.5 1505.3 962.3C1512.7 963.1 1519.7 963.7 1526.1 963.5C1532.5 963.3 1538.5 962.3 1543.9 961.1C1549.3 959.9 1553.8 958.0 1558.8 956.4C1563.7 954.7 1568.6 952.6 1573.6 951.3C1578.5 950.0 1584.0 948.9 1588.4 948.7C1592.9 948.4 1596.4 948.7 1600.3 949.8C1604.3 951.0 1608.2 953.7 1612.2 955.8C1616.1 957.9 1619.1 960.8 1624.1 962.3C1629.0 963.8 1635.9 964.1 1641.9 964.7C1647.8 965.2 1653.3 965.4 1659.7 965.6C1666.1 965.8 1674.0 966.3 1680.5 965.9C1686.9 965.5 1692.3 964.5 1698.3 963.2C1704.2 961.9 1710.2 959.5 1716.1 958.2C1722.0 956.8 1728.0 955.5 1733.9 954.9C1739.8 954.2 1745.8 954.0 1751.7 954.3C1757.7 954.5 1763.6 955.8 1769.5 956.4C1775.5 957.0 1780.9 957.8 1787.3 957.9C1793.8 957.9 1801.2 957.0 1808.1 956.7C1815.1 956.3 1822.0 956.1 1828.9 955.8C1835.8 955.4 1843.3 954.9 1849.7 954.6C1856.1 954.2 1862.1 953.7 1867.5 953.7C1872.9 953.7 1877.4 954.1 1882.3 954.6C1887.3 955.0 1892.7 956.4 1897.2 956.4C1901.6 956.3 1905.1 955.4 1909.1 954.3C1913.0 953.2 1917.5 951.1 1920.9 949.8C1924.4 948.6 1924.7 947.4 1929.8 946.9C1935.0 946.4 1948.2 946.9 1951.9 946.9" fill="none" stroke="#6c006c" stroke-width="1.25"/>
<line x1="5" y1="969.5" x2="95.0" y2="969.5" stroke="#6c006c" stroke-width="1.1" stroke-dasharray="4 2.5"/>
<line x1="1951.9" y1="946.9" x2="2048" y2="946.9" stroke="#6c006c" stroke-width="1.1" stroke-dasharray="4 2.5"/>
<circle cx="95.0" cy="969.5" r="2.1" fill="#6c006c"/>
<circle cx="1951.9" cy="946.9" r="2.1" fill="#6c006c"/>
<path d="M95.0 1036.9C97.6 1037.7 104.7 1040.0 110.8 1041.6C116.8 1043.2 123.9 1045.3 131.3 1046.4C138.7 1047.6 148.4 1048.5 155.2 1048.5C162.0 1048.5 166.0 1047.8 172.3 1046.4C178.6 1045.1 186.0 1042.3 192.8 1040.3C199.6 1038.2 207.0 1035.7 213.3 1034.1C219.6 1032.5 224.7 1031.7 230.4 1030.7C236.1 1029.7 242.4 1028.5 247.5 1028.0C252.6 1027.5 256.0 1027.6 261.2 1027.6C266.3 1027.6 273.1 1028.5 278.2 1028.0C283.4 1027.5 287.4 1026.1 291.9 1024.6C296.5 1023.0 301.0 1020.2 305.6 1018.7C310.1 1017.3 314.7 1016.5 319.3 1016.0C323.8 1015.6 327.8 1015.8 332.9 1016.0C338.1 1016.2 344.3 1016.8 350.0 1017.0C355.7 1017.3 362.0 1016.9 367.1 1017.4C372.2 1017.9 375.7 1019.4 380.8 1020.1C385.9 1020.8 393.3 1021.1 397.9 1021.8C402.4 1022.6 404.1 1022.9 408.1 1024.6C412.1 1026.2 417.2 1029.2 421.8 1031.7C426.4 1034.2 430.9 1037.7 435.5 1039.6C440.0 1041.5 444.0 1042.8 449.1 1043.3C454.3 1043.9 460.0 1043.1 466.2 1043.0C472.5 1042.9 480.5 1042.9 486.7 1042.7C493.0 1042.4 498.7 1042.4 503.8 1041.6C509.0 1040.9 513.5 1039.0 517.5 1038.2C521.5 1037.5 523.8 1036.5 527.8 1037.2C531.7 1037.9 536.9 1040.4 541.4 1042.7C546.0 1044.9 550.5 1048.6 555.1 1050.5C559.7 1052.5 564.2 1053.6 568.8 1054.3C573.3 1055.0 577.9 1054.9 582.4 1054.6C587.0 1054.3 591.0 1052.9 596.1 1052.6C601.2 1052.2 606.9 1052.9 613.2 1052.6C619.5 1052.2 626.9 1051.1 633.7 1050.5C640.5 1050.0 647.4 1049.3 654.2 1049.2C661.1 1049.0 668.5 1049.7 674.7 1049.5C681.0 1049.3 686.7 1049.0 691.8 1047.8C696.9 1046.5 700.9 1044.3 705.5 1042.0C710.0 1039.7 714.6 1036.6 719.2 1034.1C723.7 1031.7 728.8 1028.8 732.8 1027.3C736.8 1025.7 738.5 1025.4 743.1 1024.9C747.6 1024.4 755.0 1024.5 760.2 1024.2C765.3 1023.9 767.7 1023.5 773.8 1023.2C780.0 1022.8 790.4 1022.2 797.1 1022.2C803.8 1022.2 809.1 1022.7 814.2 1023.2C819.3 1023.7 822.7 1025.4 827.9 1025.2C833.0 1025.1 838.7 1023.5 844.9 1022.2C851.2 1020.8 858.6 1018.6 865.4 1017.0C872.3 1015.5 879.7 1014.4 886.0 1012.9C892.2 1011.5 897.9 1009.4 903.0 1008.5C908.2 1007.6 912.2 1007.3 916.7 1007.5C921.3 1007.6 925.3 1008.0 930.4 1009.5C935.5 1011.0 941.8 1014.2 947.5 1016.3C953.2 1018.5 958.9 1020.4 964.6 1022.2C970.3 1023.9 976.0 1025.3 981.7 1026.6C987.4 1027.9 993.6 1028.6 998.7 1029.7C1003.9 1030.8 1007.9 1032.4 1012.4 1033.1C1017.0 1033.8 1021.5 1034.3 1026.1 1033.8C1030.7 1033.3 1035.2 1031.4 1039.8 1030.0C1044.3 1028.7 1048.3 1026.7 1053.4 1025.6C1058.6 1024.4 1064.8 1023.7 1070.5 1023.2C1076.2 1022.7 1082.5 1022.8 1087.6 1022.5C1092.7 1022.2 1096.7 1021.5 1101.3 1021.1C1105.8 1020.8 1110.4 1020.1 1115.0 1020.4C1119.5 1020.8 1124.1 1022.3 1128.6 1023.2C1133.2 1024.1 1137.7 1025.7 1142.3 1025.9C1146.9 1026.1 1151.4 1024.8 1156.0 1024.6C1160.5 1024.3 1165.1 1024.1 1169.6 1024.6C1174.2 1025.0 1178.8 1026.1 1183.3 1027.3C1187.9 1028.5 1192.4 1031.2 1197.0 1031.7C1201.5 1032.3 1206.1 1031.3 1210.7 1030.7C1215.2 1030.1 1219.8 1028.5 1224.3 1028.0C1228.9 1027.4 1233.5 1026.9 1238.0 1027.3C1242.6 1027.6 1246.6 1029.0 1251.7 1030.0C1256.8 1031.0 1263.1 1033.1 1268.8 1033.4C1274.5 1033.8 1279.6 1032.4 1285.9 1032.1C1292.1 1031.8 1299.5 1031.7 1306.4 1031.7C1313.2 1031.7 1320.6 1032.0 1326.9 1032.1C1333.1 1032.2 1338.3 1032.0 1344.0 1032.4C1349.7 1032.9 1355.4 1033.4 1361.1 1034.8C1366.8 1036.2 1372.4 1038.5 1378.1 1041.0C1383.8 1043.4 1390.1 1047.1 1395.2 1049.5C1400.4 1051.9 1404.3 1054.1 1408.9 1055.3C1413.5 1056.5 1418.0 1056.6 1422.6 1056.7C1427.1 1056.7 1429.4 1056.7 1436.2 1055.7C1443.1 1054.6 1455.2 1051.9 1463.8 1050.2C1472.3 1048.5 1479.1 1046.8 1487.5 1045.4C1495.9 1044.1 1505.8 1043.7 1514.2 1041.9C1522.6 1040.0 1530.5 1036.8 1538.0 1034.5C1545.4 1032.1 1551.3 1029.7 1558.8 1027.6C1566.2 1025.6 1575.1 1024.1 1582.5 1022.3C1589.9 1020.5 1596.8 1018.0 1603.3 1016.6C1609.7 1015.3 1615.7 1014.2 1621.1 1014.0C1626.5 1013.7 1631.5 1014.6 1635.9 1015.2C1640.4 1015.8 1643.4 1017.2 1647.8 1017.5C1652.3 1017.8 1658.2 1017.2 1662.7 1016.9C1667.1 1016.7 1670.6 1015.8 1674.5 1016.0C1678.5 1016.3 1682.4 1017.4 1686.4 1018.7C1690.4 1020.1 1694.3 1021.9 1698.3 1024.1C1702.2 1026.2 1706.2 1029.3 1710.2 1031.5C1714.1 1033.7 1717.6 1035.9 1722.0 1037.4C1726.5 1039.0 1731.9 1040.4 1736.9 1040.7C1741.8 1040.9 1746.8 1039.9 1751.7 1038.9C1756.7 1037.9 1761.6 1035.6 1766.6 1034.5C1771.5 1033.3 1777.0 1032.3 1781.4 1031.8C1785.9 1031.3 1788.8 1032.5 1793.3 1031.5C1797.7 1030.4 1803.2 1027.8 1808.1 1025.5C1813.1 1023.3 1818.5 1019.7 1823.0 1018.1C1827.4 1016.5 1830.9 1016.0 1834.8 1016.0C1838.8 1016.0 1842.3 1017.4 1846.7 1018.1C1851.2 1018.9 1857.1 1020.5 1861.6 1020.5C1866.0 1020.5 1869.5 1019.5 1873.4 1018.1C1877.4 1016.7 1881.6 1013.6 1885.3 1012.2C1889.0 1010.8 1892.2 1009.4 1895.7 1009.5C1899.2 1009.6 1902.4 1010.6 1906.1 1012.8C1909.8 1015.0 1914.0 1019.0 1918.0 1022.6C1921.9 1026.2 1925.9 1031.1 1929.8 1034.5C1933.8 1037.8 1938.0 1040.5 1941.7 1042.5C1945.4 1044.4 1950.2 1045.7 1951.9 1046.3" fill="none" stroke="#540000" stroke-width="1.25"/>
<line x1="5" y1="1036.9" x2="95.0" y2="1036.9" stroke="#540000" stroke-width="1.1" stroke-dasharray="4 2.5"/>
<line x1="1951.9" y1="1046.3" x2="2048" y2="1046.3" stroke="#540000" stroke-width="1.1" stroke-dasharray="4 2.5"/>
<circle cx="95.0" cy="1036.9" r="2.1" fill="#540000"/>
<circle cx="1951.9" cy="1046.3" r="2.1" fill="#540000"/>
<path d="M95.0 1101.4C97.1 1102.6 103.0 1106.5 107.3 1108.3C111.7 1110.1 115.9 1112.0 121.0 1112.4C126.1 1112.7 132.4 1111.4 138.1 1110.3C143.8 1109.2 149.5 1108.3 155.2 1105.9C160.9 1103.4 167.2 1098.6 172.3 1095.6C177.4 1092.7 181.4 1089.7 186.0 1088.1C190.5 1086.5 194.5 1086.3 199.6 1086.1C204.8 1085.8 211.0 1086.7 216.7 1086.4C222.4 1086.1 228.4 1084.6 233.8 1084.0C239.2 1083.4 244.1 1082.1 249.2 1082.6C254.3 1083.2 259.2 1085.3 264.6 1087.1C270.0 1088.9 276.0 1091.4 281.7 1093.2C287.4 1095.1 292.5 1096.7 298.8 1098.0C305.0 1099.4 312.4 1099.7 319.3 1101.4C326.1 1103.2 333.5 1106.3 339.8 1108.3C346.0 1110.3 352.0 1112.4 356.9 1113.4C361.7 1114.4 364.3 1114.8 368.8 1114.4C373.4 1114.0 378.2 1112.5 384.2 1111.0C390.2 1109.5 398.4 1107.3 404.7 1105.5C411.0 1103.8 416.4 1101.9 421.8 1100.8C427.2 1099.6 432.1 1098.4 437.2 1098.7C442.3 1099.0 447.1 1100.9 452.6 1102.5C458.0 1104.0 464.0 1107.1 469.6 1107.9C475.3 1108.8 481.0 1108.2 486.7 1107.6C492.4 1107.0 498.4 1104.9 503.8 1104.2C509.2 1103.4 514.1 1102.8 519.2 1103.2C524.3 1103.5 529.2 1104.9 534.6 1106.2C540.0 1107.5 545.4 1109.5 551.7 1111.0C557.9 1112.6 565.4 1114.3 572.2 1115.5C579.0 1116.7 585.9 1117.9 592.7 1118.2C599.5 1118.5 606.4 1118.3 613.2 1117.2C620.0 1116.1 626.9 1113.6 633.7 1111.7C640.5 1109.8 648.5 1107.4 654.2 1105.9C659.9 1104.4 663.6 1103.3 667.9 1102.5C672.2 1101.7 675.3 1100.9 679.9 1101.1C684.4 1101.3 689.8 1102.5 695.2 1103.5C700.6 1104.5 705.5 1106.3 712.3 1106.9C719.2 1107.5 729.4 1106.2 736.2 1106.9C743.1 1107.6 747.6 1109.4 753.3 1111.0C759.0 1112.7 766.0 1115.6 770.4 1116.8C774.9 1118.0 775.6 1118.4 780.0 1118.2C784.4 1118.0 790.8 1116.9 797.1 1115.5C803.4 1114.0 810.8 1111.1 817.6 1109.6C824.4 1108.2 831.3 1107.4 838.1 1106.9C844.9 1106.5 851.8 1106.8 858.6 1106.9C865.4 1107.0 872.9 1106.9 879.1 1107.6C885.4 1108.3 890.5 1109.9 896.2 1111.0C901.9 1112.2 907.6 1113.6 913.3 1114.4C919.0 1115.2 924.7 1115.8 930.4 1115.8C936.1 1115.8 941.8 1115.2 947.5 1114.4C953.2 1113.7 958.9 1112.4 964.6 1111.4C970.3 1110.3 976.0 1109.1 981.7 1108.3C987.4 1107.4 993.1 1106.5 998.7 1106.2C1004.4 1105.9 1010.1 1106.3 1015.8 1106.6C1021.5 1106.9 1027.2 1108.3 1032.9 1107.9C1038.6 1107.5 1044.3 1105.3 1050.0 1104.2C1055.7 1103.1 1062.0 1101.5 1067.1 1101.4C1072.2 1101.4 1076.2 1102.4 1080.8 1103.8C1085.3 1105.3 1089.6 1108.2 1094.5 1110.0C1099.3 1111.8 1104.7 1114.3 1109.8 1114.4C1115.0 1114.6 1119.8 1112.4 1125.2 1111.0C1130.6 1109.6 1136.6 1107.0 1142.3 1105.9C1148.0 1104.8 1153.7 1104.6 1159.4 1104.5C1165.1 1104.4 1170.8 1104.7 1176.5 1105.2C1182.2 1105.7 1188.4 1107.1 1193.6 1107.6C1198.7 1108.1 1202.1 1108.6 1207.2 1108.3C1212.4 1108.0 1218.6 1106.5 1224.3 1105.9C1230.0 1105.3 1235.7 1104.7 1241.4 1104.5C1247.1 1104.4 1252.8 1105.2 1258.5 1104.9C1264.2 1104.5 1269.9 1103.3 1275.6 1102.5C1281.3 1101.6 1287.0 1100.3 1292.7 1099.7C1298.4 1099.2 1304.1 1098.9 1309.8 1099.1C1315.5 1099.2 1321.2 1099.9 1326.9 1100.8C1332.6 1101.7 1338.3 1103.3 1344.0 1104.5C1349.7 1105.8 1355.9 1107.8 1361.1 1108.3C1366.2 1108.8 1370.2 1108.6 1374.7 1107.6C1379.3 1106.6 1383.8 1104.5 1388.4 1102.5C1393.0 1100.4 1397.5 1097.1 1402.1 1095.3C1406.6 1093.5 1411.2 1092.2 1415.7 1091.9C1420.3 1091.5 1425.4 1092.6 1429.4 1093.2C1433.4 1093.9 1435.4 1095.2 1439.7 1096.0C1443.9 1096.7 1448.9 1097.7 1454.8 1097.6C1460.8 1097.5 1469.2 1095.7 1475.6 1095.5C1482.1 1095.4 1488.0 1096.4 1493.4 1096.7C1498.9 1097.0 1503.3 1097.9 1508.3 1097.3C1513.2 1096.7 1518.7 1094.6 1523.1 1093.2C1527.6 1091.7 1531.5 1089.4 1535.0 1088.4C1538.5 1087.4 1540.4 1086.9 1543.9 1087.2C1547.4 1087.5 1551.8 1088.6 1555.8 1090.2C1559.7 1091.8 1563.7 1094.9 1567.7 1096.7C1571.6 1098.5 1575.1 1100.2 1579.5 1101.2C1584.0 1102.2 1589.4 1101.9 1594.4 1102.7C1599.3 1103.4 1604.3 1104.7 1609.2 1105.6C1614.2 1106.6 1619.1 1108.3 1624.1 1108.3C1629.0 1108.3 1634.5 1106.3 1638.9 1105.6C1643.4 1105.0 1646.8 1104.2 1650.8 1104.4C1654.7 1104.7 1658.2 1105.5 1662.7 1107.1C1667.1 1108.7 1672.6 1111.8 1677.5 1113.9C1682.4 1116.1 1687.4 1118.0 1692.3 1119.9C1697.3 1121.7 1702.2 1123.2 1707.2 1124.9C1712.1 1126.7 1717.6 1129.0 1722.0 1130.3C1726.5 1131.6 1729.5 1132.7 1733.9 1132.6C1738.4 1132.6 1743.3 1131.3 1748.8 1130.0C1754.2 1128.7 1760.6 1126.9 1766.6 1124.9C1772.5 1123.0 1778.4 1120.2 1784.4 1118.4C1790.3 1116.6 1796.3 1115.2 1802.2 1113.9C1808.1 1112.7 1814.1 1112.1 1820.0 1111.0C1825.9 1109.8 1831.9 1108.5 1837.8 1107.1C1843.7 1105.7 1850.2 1103.7 1855.6 1102.7C1861.1 1101.6 1866.0 1101.2 1870.5 1100.9C1874.9 1100.5 1877.9 1100.4 1882.3 1100.6C1886.8 1100.8 1891.7 1101.5 1897.2 1102.1C1902.6 1102.7 1909.1 1103.6 1915.0 1104.1C1920.9 1104.7 1926.7 1104.8 1932.8 1105.3C1939.0 1105.8 1948.7 1106.8 1951.9 1107.1" fill="none" stroke="#545400" stroke-width="1.25"/>
<line x1="5" y1="1101.4" x2="95.0" y2="1101.4" stroke="#545400" stroke-width="1.1" stroke-dasharray="4 2.5"/>
<line x1="1951.9" y1="1107.1" x2="2048" y2="1107.1" stroke="#545400" stroke-width="1.1" stroke-dasharray="4 2.5"/>
<circle cx="95.0" cy="1101.4" r="2.1" fill="#545400"/>
<circle cx="1951.9" cy="1107.1" r="2.1" fill="#545400"/>
<path d="M95.0 1180.1C97.1 1178.8 103.0 1174.8 107.3 1172.5C111.7 1170.3 115.9 1168.0 121.0 1166.4C126.1 1164.8 130.7 1163.8 138.1 1163.0C145.5 1162.2 158.0 1161.3 165.4 1161.6C172.9 1161.9 176.8 1163.4 182.5 1164.7C188.2 1165.9 192.8 1167.4 199.6 1169.1C206.5 1170.8 215.0 1173.3 223.6 1174.9C232.1 1176.5 242.4 1177.7 250.9 1178.7C259.4 1179.7 266.8 1180.5 274.8 1181.1C282.8 1181.7 290.2 1182.3 298.8 1182.5C307.3 1182.6 318.1 1182.2 326.1 1181.8C334.1 1181.3 340.3 1180.3 346.6 1179.7C352.9 1179.1 358.6 1178.4 363.7 1178.3C368.8 1178.3 372.2 1178.3 377.4 1179.4C382.5 1180.5 388.8 1183.0 394.5 1184.8C400.1 1186.7 405.3 1188.9 411.5 1190.3C417.8 1191.7 425.8 1192.8 432.1 1193.0C438.3 1193.3 443.4 1192.5 449.1 1192.0C454.8 1191.6 460.5 1190.8 466.2 1190.3C471.9 1189.8 477.6 1189.7 483.3 1188.9C489.0 1188.1 494.1 1187.1 500.4 1185.5C506.7 1183.9 514.1 1181.0 520.9 1179.4C527.8 1177.8 534.0 1177.2 541.4 1176.0C548.8 1174.7 557.4 1172.9 565.4 1171.9C573.3 1170.8 582.4 1170.5 589.3 1169.8C596.1 1169.1 601.2 1168.0 606.4 1167.8C611.5 1167.5 615.5 1167.2 620.0 1168.1C624.6 1169.0 628.6 1170.7 633.7 1173.2C638.8 1175.8 645.7 1180.9 650.8 1183.5C655.9 1186.1 660.2 1187.7 664.5 1188.9C668.7 1190.2 671.9 1191.2 676.4 1191.0C681.0 1190.8 687.0 1188.9 691.8 1187.9C696.7 1187.0 700.9 1185.8 705.5 1185.2C710.0 1184.6 714.0 1184.8 719.2 1184.2C724.3 1183.5 730.0 1182.5 736.2 1181.4C742.5 1180.3 750.5 1178.7 756.8 1177.7C763.0 1176.6 767.1 1176.4 773.8 1175.3C780.6 1174.1 789.8 1171.8 797.1 1170.8C804.4 1169.9 810.8 1169.5 817.6 1169.5C824.4 1169.4 831.3 1169.9 838.1 1170.5C844.9 1171.1 851.8 1172.1 858.6 1172.9C865.4 1173.7 872.9 1174.5 879.1 1175.3C885.4 1176.1 890.5 1176.7 896.2 1177.7C901.9 1178.6 907.6 1180.2 913.3 1181.1C919.0 1182.0 925.3 1183.1 930.4 1183.1C935.5 1183.1 939.5 1182.5 944.1 1181.1C948.6 1179.7 953.2 1176.9 957.7 1174.9C962.3 1173.0 967.4 1170.7 971.4 1169.5C975.4 1168.3 977.7 1167.5 981.7 1167.8C985.6 1168.0 990.8 1168.6 995.3 1170.8C999.9 1173.1 1004.4 1177.4 1009.0 1181.1C1013.6 1184.8 1018.1 1190.1 1022.7 1193.0C1027.2 1196.0 1031.2 1197.0 1036.3 1198.5C1041.5 1200.0 1047.7 1200.7 1053.4 1201.9C1059.1 1203.2 1065.4 1205.0 1070.5 1206.0C1075.7 1207.1 1079.6 1208.4 1084.2 1208.1C1088.8 1207.7 1093.3 1206.2 1097.9 1204.0C1102.4 1201.8 1107.0 1197.9 1111.5 1194.8C1116.1 1191.6 1120.7 1187.9 1125.2 1185.2C1129.8 1182.5 1133.8 1180.4 1138.9 1178.3C1144.0 1176.3 1150.3 1174.3 1156.0 1172.9C1161.7 1171.5 1167.4 1170.8 1173.1 1169.8C1178.8 1168.8 1185.0 1167.3 1190.2 1166.7C1195.3 1166.2 1198.7 1166.1 1203.8 1166.4C1209.0 1166.7 1215.8 1168.3 1220.9 1168.4C1226.0 1168.6 1230.0 1167.5 1234.6 1167.1C1239.1 1166.7 1243.7 1165.7 1248.3 1166.0C1252.8 1166.4 1257.4 1167.6 1261.9 1169.1C1266.5 1170.7 1271.0 1173.3 1275.6 1175.3C1280.2 1177.2 1284.2 1179.4 1289.3 1180.7C1294.4 1182.1 1301.2 1183.4 1306.4 1183.5C1311.5 1183.5 1315.5 1182.0 1320.0 1181.1C1324.6 1180.2 1329.2 1178.6 1333.7 1178.0C1338.3 1177.4 1342.8 1177.7 1347.4 1177.7C1351.9 1177.6 1356.5 1178.2 1361.1 1177.7C1365.6 1177.1 1369.6 1175.4 1374.7 1174.2C1379.9 1173.1 1386.7 1170.8 1391.8 1170.8C1396.9 1170.8 1400.9 1172.5 1405.5 1174.2C1410.0 1176.0 1414.6 1179.1 1419.2 1181.4C1423.7 1183.7 1429.4 1186.7 1432.8 1187.9C1436.2 1189.1 1436.0 1189.0 1439.7 1188.6C1443.3 1188.2 1449.8 1186.9 1454.8 1185.8C1459.8 1184.6 1465.2 1182.5 1469.7 1181.6C1474.1 1180.7 1476.6 1180.3 1481.6 1180.4C1486.5 1180.5 1493.9 1181.9 1499.4 1182.2C1504.8 1182.5 1509.3 1182.5 1514.2 1182.2C1519.2 1182.0 1524.1 1180.9 1529.1 1180.7C1534.0 1180.6 1539.0 1181.6 1543.9 1181.3C1548.9 1181.1 1554.3 1180.7 1558.8 1179.2C1563.2 1177.8 1566.7 1174.9 1570.6 1172.4C1574.6 1169.9 1578.5 1166.5 1582.5 1164.4C1586.5 1162.3 1590.7 1160.7 1594.4 1159.7C1598.1 1158.6 1600.8 1157.9 1604.8 1158.2C1608.7 1158.5 1613.4 1159.6 1618.1 1161.4C1622.8 1163.3 1628.0 1167.1 1633.0 1169.5C1637.9 1171.8 1642.4 1173.8 1647.8 1175.4C1653.3 1177.0 1659.2 1178.2 1665.6 1179.2C1672.1 1180.3 1679.5 1181.4 1686.4 1181.9C1693.3 1182.5 1700.8 1182.3 1707.2 1182.5C1713.6 1182.7 1719.1 1183.0 1725.0 1183.1C1730.9 1183.3 1736.9 1183.0 1742.8 1183.4C1748.8 1183.9 1754.7 1185.1 1760.6 1185.8C1766.6 1186.5 1772.5 1187.3 1778.4 1187.6C1784.4 1187.8 1790.8 1187.6 1796.2 1187.3C1801.7 1187.0 1806.1 1186.5 1811.1 1185.8C1816.0 1185.0 1821.0 1183.7 1825.9 1182.8C1830.9 1181.9 1835.8 1180.8 1840.8 1180.4C1845.7 1180.0 1850.7 1181.0 1855.6 1180.4C1860.6 1179.8 1865.5 1178.1 1870.5 1176.9C1875.4 1175.7 1879.9 1174.1 1885.3 1173.3C1890.8 1172.5 1897.7 1172.7 1903.1 1172.1C1908.6 1171.6 1913.0 1170.7 1918.0 1170.0C1922.9 1169.4 1927.2 1168.1 1932.8 1168.0C1938.5 1167.9 1948.7 1169.2 1951.9 1169.5" fill="none" stroke="#005400" stroke-width="1.25"/>
<line x1="5" y1="1180.1" x2="95.0" y2="1180.1" stroke="#005400" stroke-width="1.1" stroke-dasharray="4 2.5"/>
<line x1="1951.9" y1="1169.5" x2="2048" y2="1169.5" stroke="#005400" stroke-width="1.1" stroke-dasharray="4 2.5"/>
<circle cx="95.0" cy="1180.1" r="2.1" fill="#005400"/>
<circle cx="1951.9" cy="1169.5" r="2.1" fill="#005400"/></g>
<text x="1023.5" y="125.5" font-size="11" fill="#920000" text-anchor="middle" font-family="'Liberation Sans', sans-serif">tx</text>
<text x="1023.5" y="183.0" font-size="11" fill="#929200" text-anchor="middle" font-family="'Liberation Sans', sans-serif">ty</text>
<text x="1023.5" y="267.5" font-size="11" fill="#009200" text-anchor="middle" font-family="'Liberation Sans', sans-serif">tz</text>
<text x="1023.5" y="325.0" font-size="11" fill="#009292" text-anchor="middle" font-family="'Liberation Sans', sans-serif">rx</text>
<text x="1023.5" y="419.0" font-size="11" fill="#0000a8" text-anchor="middle" font-family="'Liberation Sans', sans-serif">ry</text>
<text x="1023.5" y="492.5" font-size="11" fill="#920092" text-anchor="middle" font-family="'Liberation Sans', sans-serif">rz</text>
<text x="1023.5" y="558.5" font-size="11" fill="#6c0000" text-anchor="middle" font-family="'Liberation Sans', sans-serif">speedx</text>
<text x="1023.5" y="653.0" font-size="11" fill="#6c6c00" text-anchor="middle" font-family="'Liberation Sans', sans-serif">speedy</text>
<text x="1023.5" y="703.5" font-size="11" fill="#006c00" text-anchor="middle" font-family="'Liberation Sans', sans-serif">speedz</text>
<text x="1023.5" y="779.0" font-size="11" fill="#006c6c" text-anchor="middle" font-family="'Liberation Sans', sans-serif">ax</text>
<text x="1023.5" y="877.5" font-size="11" fill="#000084" text-anchor="middle" font-family="'Liberation Sans', sans-serif">ay</text>
<text x="1023.5" y="950.0" font-size="11" fill="#6c006c" text-anchor="middle" font-family="'Liberation Sans', sans-serif">az</text>
<text x="1023.5" y="1024.0" font-size="11" fill="#540000" text-anchor="middle" font-family="'Liberation Sans', sans-serif">targetx</text>
<text x="1023.5" y="1098.0" font-size="11" fill="#545400" text-anchor="middle" font-family="'Liberation Sans', sans-serif">targety</text>
<text x="1023.5" y="1182.0" font-size="11" fill="#005400" text-anchor="middle" font-family="'Liberation Sans', sans-serif">targetz</text>
<rect x="971.8" y="647" width="134" height="2" fill="#8cc468"/>
<rect x="136" y="356.4" width="827.6" height="582.4" fill="#5b5c5b"/>
<rect x="136" y="356.4" width="827.6" height="1.5" fill="#888"/>
<rect x="961.6" y="360" width="2" height="575" fill="#6c6c6c"/>
<rect x="140.1" y="360.3" width="819.8" height="573.8" fill="#000"/>
<rect x="108.4" y="356.4" width="27.8" height="582.4" fill="#5c8042"/>
<rect x="108.2" y="356.4" width="1.7" height="582.4" fill="#6ea84e"/>
<rect x="116.0" y="356.4" width="1.9" height="582.4" fill="#6ea84e"/>
<rect x="134.9" y="356.4" width="1.3" height="582.4" fill="#6ea84e"/>
<rect x="108.4" y="356.4" width="27.8" height="1.2" fill="#6ea84e"/>
<rect x="118.0" y="375.3" width="17.6" height="1.3" fill="#6ea84e"/>
<rect x="118.0" y="394.2" width="17.6" height="1.3" fill="#6ea84e"/>
<rect x="118.0" y="413.2" width="17.6" height="1.3" fill="#6ea84e"/>
<rect x="118.0" y="432.2" width="17.6" height="1.3" fill="#6ea84e"/>
<circle cx="126.5" cy="367.0" r="4.3" fill="none" stroke="#b4c8a0" stroke-width="1.6"/>
<circle cx="126.5" cy="367.0" r="2.2" fill="#b4c8a0"/>
<path d="M132.66 380.52 L129.32 383.09 L125.72 383.60 L123.92 386.95 L121.10 391.82 L124.95 389.25 L128.03 389.75 L128.80 386.65 L130.86 384.35z" fill="#b4c8a0"/>
<path d="M120.80 404.80 L127.00 404.80 L125.00 401.70 L127.60 401.70 L131.90 406.05 L127.60 410.40 L125.00 410.40 L127.00 407.30 L120.80 407.30z" fill="#b4c8a0"/>
<ellipse cx="126.2" cy="427.2" rx="3.9" ry="3.6" fill="#b4c8a0"/>
<path d="M127.50 424.15 C127.80 419.45 132.40 419.65 131.50 424.45" fill="none" stroke="#b4c8a0" stroke-width="1.5"/>
<rect x="108.4" y="644.4" width="8" height="5.2" fill="#000"/>
<rect x="963.4" y="356.4" width="8.7" height="582.0" fill="#8e8e8c"/>
<rect x="963.4" y="550.5" width="8.7" height="193.8" fill="#5c8042"/>
<rect x="963.4" y="646.6" width="8.7" height="2.6" fill="#e4e4e4"/>
<g shape-rendering="crispEdges">
<rect x="140.2" y="396.2" width="819.6" height="4" fill="#0c0c0c"/>
<rect x="140.2" y="400.1" width="819.6" height="2.2" fill="#262626"/>
<rect x="140.2" y="434.1" width="819.6" height="4" fill="#0c0c0c"/>
<rect x="140.2" y="438.0" width="819.6" height="2.2" fill="#262626"/>
<rect x="140.2" y="472.0" width="819.6" height="4" fill="#0c0c0c"/>
<rect x="140.2" y="475.9" width="819.6" height="2.2" fill="#262626"/>
<rect x="140.2" y="509.9" width="819.6" height="4" fill="#0c0c0c"/>
<rect x="140.2" y="513.8" width="819.6" height="2.2" fill="#262626"/>
<rect x="140.2" y="547.8" width="819.6" height="4" fill="#0c0c0c"/>
<rect x="140.2" y="551.7" width="819.6" height="2.2" fill="#262626"/>
<rect x="140.2" y="585.7" width="819.6" height="4" fill="#0c0c0c"/>
<rect x="140.2" y="589.6" width="819.6" height="2.2" fill="#262626"/>
<rect x="140.2" y="623.6" width="819.6" height="4" fill="#0c0c0c"/>
<rect x="140.2" y="627.5" width="819.6" height="2.2" fill="#262626"/>
<rect x="140.2" y="661.5" width="819.6" height="4" fill="#0c0c0c"/>
<rect x="140.2" y="665.4" width="819.6" height="2.2" fill="#262626"/>
<rect x="140.2" y="699.4" width="819.6" height="4" fill="#0c0c0c"/>
<rect x="140.2" y="703.3" width="819.6" height="2.2" fill="#262626"/>
<rect x="140.2" y="737.3" width="819.6" height="4" fill="#0c0c0c"/>
<rect x="140.2" y="741.2" width="819.6" height="2.2" fill="#262626"/>
<rect x="140.2" y="775.2" width="819.6" height="4" fill="#0c0c0c"/>
<rect x="140.2" y="779.1" width="819.6" height="2.2" fill="#262626"/>
<rect x="140.2" y="813.1" width="819.6" height="4" fill="#0c0c0c"/>
<rect x="140.2" y="817.0" width="819.6" height="2.2" fill="#262626"/>
<rect x="140.2" y="851.0" width="819.6" height="4" fill="#0c0c0c"/>
<rect x="140.2" y="854.9" width="819.6" height="2.2" fill="#262626"/>
<rect x="140.2" y="888.9" width="819.6" height="4" fill="#0c0c0c"/>
<rect x="140.2" y="892.8" width="819.6" height="2.2" fill="#262626"/>
</g>
<rect x="140.2" y="368.6" width="815.8" height="1.6" fill="#1e1e1e"/>
<rect x="140.2" y="376.6" width="815.8" height="1.6" fill="#1e1e1e"/>
<rect x="140.2" y="392.8" width="815.8" height="1.6" fill="#1e1e1e"/>
<line x1="141" y1="385.5" x2="956" y2="385.5" stroke="#262626" stroke-width="1.2" stroke-dasharray="6.4 6.5" stroke-dashoffset="9.4"/>
<rect x="140.2" y="409.0" width="815.8" height="1.6" fill="#1e1e1e"/>
<rect x="140.2" y="425.4" width="815.8" height="1.6" fill="#1e1e1e"/>
<line x1="141" y1="418.0" x2="956" y2="418.0" stroke="#262626" stroke-width="1.2" stroke-dasharray="6.4 6.5" stroke-dashoffset="9.4"/>
<rect x="140.2" y="447.0" width="815.8" height="1.6" fill="#1e1e1e"/>
<rect x="140.2" y="466.0" width="815.8" height="1.6" fill="#1e1e1e"/>
<line x1="141" y1="457.3" x2="956" y2="457.3" stroke="#262626" stroke-width="1.2" stroke-dasharray="6.4 6.5" stroke-dashoffset="9.4"/>
<rect x="140.2" y="507.5" width="815.8" height="1.6" fill="#1e1e1e"/>
<line x1="141" y1="492.8" x2="956" y2="492.8" stroke="#262626" stroke-width="1.2" stroke-dasharray="6.4 6.5" stroke-dashoffset="9.4"/>
<rect x="140.2" y="521.7" width="815.8" height="1.6" fill="#1e1e1e"/>
<rect x="140.2" y="541.1" width="815.8" height="1.6" fill="#1e1e1e"/>
<line x1="141" y1="532.2" x2="956" y2="532.2" stroke="#262626" stroke-width="1.2" stroke-dasharray="6.4 6.5" stroke-dashoffset="9.4"/>
<rect x="140.2" y="562.8" width="815.8" height="1.6" fill="#1e1e1e"/>
<rect x="140.2" y="579.6" width="815.8" height="1.6" fill="#1e1e1e"/>
<line x1="141" y1="572.0" x2="956" y2="572.0" stroke="#262626" stroke-width="1.2" stroke-dasharray="6.4 6.5" stroke-dashoffset="9.4"/>
<rect x="140.2" y="596.8" width="815.8" height="1.6" fill="#1e1e1e"/>
<rect x="140.2" y="618.8" width="815.8" height="1.6" fill="#1e1e1e"/>
<line x1="141" y1="608.6" x2="956" y2="608.6" stroke="#262626" stroke-width="1.2" stroke-dasharray="6.4 6.5" stroke-dashoffset="9.4"/>
<rect x="140.2" y="641.1" width="815.8" height="1.6" fill="#1e1e1e"/>
<rect x="140.2" y="657.9" width="815.8" height="1.6" fill="#1e1e1e"/>
<line x1="141" y1="650.3" x2="956" y2="650.3" stroke="#262626" stroke-width="1.2" stroke-dasharray="6.4 6.5" stroke-dashoffset="9.4"/>
<rect x="140.2" y="674.4" width="815.8" height="1.6" fill="#1e1e1e"/>
<rect x="140.2" y="694.8" width="815.8" height="1.6" fill="#1e1e1e"/>
<line x1="141" y1="685.4" x2="956" y2="685.4" stroke="#262626" stroke-width="1.2" stroke-dasharray="6.4 6.5" stroke-dashoffset="9.4"/>
<rect x="140.2" y="712.2" width="815.8" height="1.6" fill="#1e1e1e"/>
<rect x="140.2" y="730.4" width="815.8" height="1.6" fill="#1e1e1e"/>
<line x1="141" y1="722.1" x2="956" y2="722.1" stroke="#262626" stroke-width="1.2" stroke-dasharray="6.4 6.5" stroke-dashoffset="9.4"/>
<rect x="140.2" y="747.0" width="815.8" height="1.6" fill="#1e1e1e"/>
<rect x="140.2" y="753.8" width="815.8" height="1.6" fill="#1e1e1e"/>
<rect x="140.2" y="767.4" width="815.8" height="1.6" fill="#1e1e1e"/>
<line x1="141" y1="761.4" x2="956" y2="761.4" stroke="#262626" stroke-width="1.2" stroke-dasharray="6.4 6.5" stroke-dashoffset="9.4"/>
<rect x="140.2" y="791.2" width="815.8" height="1.6" fill="#1e1e1e"/>
<rect x="140.2" y="806.2" width="815.8" height="1.6" fill="#1e1e1e"/>
<line x1="141" y1="799.5" x2="956" y2="799.5" stroke="#262626" stroke-width="1.2" stroke-dasharray="6.4 6.5" stroke-dashoffset="9.4"/>
<rect x="140.2" y="826.4" width="815.8" height="1.6" fill="#1e1e1e"/>
<rect x="140.2" y="845.2" width="815.8" height="1.6" fill="#1e1e1e"/>
<line x1="141" y1="836.6" x2="956" y2="836.6" stroke="#262626" stroke-width="1.2" stroke-dasharray="6.4 6.5" stroke-dashoffset="9.4"/>
<rect x="140.2" y="864.7" width="815.8" height="1.6" fill="#1e1e1e"/>
<rect x="140.2" y="880.9" width="815.8" height="1.6" fill="#1e1e1e"/>
<line x1="141" y1="873.6" x2="956" y2="873.6" stroke="#262626" stroke-width="1.2" stroke-dasharray="6.4 6.5" stroke-dashoffset="9.4"/>
<rect x="140.2" y="903.2" width="815.8" height="1.6" fill="#1e1e1e"/>
<rect x="140.2" y="917.8" width="815.8" height="1.6" fill="#1e1e1e"/>
<line x1="141" y1="911.3" x2="956" y2="911.3" stroke="#262626" stroke-width="1.2" stroke-dasharray="6.4 6.5" stroke-dashoffset="9.4"/>
<rect x="300.8" y="368" width="1.5" height="566" fill="#262626"/>
<rect x="424.2" y="368" width="1.5" height="566" fill="#262626"/>
<rect x="547.8" y="368" width="1.5" height="566" fill="#262626"/>
<rect x="671.2" y="368" width="1.5" height="566" fill="#262626"/>
<rect x="794.8" y="368" width="1.5" height="566" fill="#262626"/>
<rect x="918.3" y="368" width="1.5" height="566" fill="#262626"/>
<line x1="178" y1="368" x2="178" y2="925" stroke="#383838" stroke-width="1.3" stroke-dasharray="7 6"/>
<rect x="140.2" y="925" width="819.6" height="9.4" fill="#161616"/>
<text x="178.0" y="933.3" font-size="11" fill="#c8c8c8" text-anchor="middle" font-family="'Liberation Sans', sans-serif">1</text>
<text x="303.0" y="933.3" font-size="11" fill="#c8c8c8" text-anchor="middle" font-family="'Liberation Sans', sans-serif">101</text>
<text x="426.5" y="933.3" font-size="11" fill="#c8c8c8" text-anchor="middle" font-family="'Liberation Sans', sans-serif">201</text>
<text x="550.0" y="933.3" font-size="11" fill="#c8c8c8" text-anchor="middle" font-family="'Liberation Sans', sans-serif">301</text>
<text x="673.5" y="933.3" font-size="11" fill="#c8c8c8" text-anchor="middle" font-family="'Liberation Sans', sans-serif">401</text>
<text x="797.0" y="933.3" font-size="11" fill="#c8c8c8" text-anchor="middle" font-family="'Liberation Sans', sans-serif">501</text>
<text x="920.5" y="933.3" font-size="11" fill="#c8c8c8" text-anchor="middle" font-family="'Liberation Sans', sans-serif">601</text>
<text x="141.7" y="370.4" font-size="11" fill="#c4c4c4" font-family="'Liberation Sans', sans-serif">1</text>
<text x="141.7" y="378.4" font-size="11" fill="#c4c4c4" font-family="'Liberation Sans', sans-serif">0.5</text>
<text x="141.7" y="386.5" font-size="11" fill="#c4c4c4" font-family="'Liberation Sans', sans-serif">0</text>
<text x="141.7" y="394.6" font-size="11" fill="#c4c4c4" font-family="'Liberation Sans', sans-serif">-0.5</text>
<text x="141.7" y="410.8" font-size="11" fill="#c4c4c4" font-family="'Liberation Sans', sans-serif">0.5</text>
<text x="141.7" y="419.0" font-size="11" fill="#c4c4c4" font-family="'Liberation Sans', sans-serif">0</text>
<text x="141.7" y="427.2" font-size="11" fill="#c4c4c4" font-family="'Liberation Sans', sans-serif">-0.5</text>
<text x="141.7" y="448.8" font-size="11" fill="#c4c4c4" font-family="'Liberation Sans', sans-serif">0.5</text>
<text x="141.7" y="458.3" font-size="11" fill="#c4c4c4" font-family="'Liberation Sans', sans-serif">0</text>
<text x="141.7" y="467.8" font-size="11" fill="#c4c4c4" font-family="'Liberation Sans', sans-serif">-0.5</text>
<text x="141.7" y="493.8" font-size="11" fill="#c4c4c4" font-family="'Liberation Sans', sans-serif">0</text>
<text x="141.7" y="509.3" font-size="11" fill="#c4c4c4" font-family="'Liberation Sans', sans-serif">-1</text>
<text x="141.7" y="523.5" font-size="11" fill="#c4c4c4" font-family="'Liberation Sans', sans-serif">0.5</text>
<text x="141.7" y="533.2" font-size="11" fill="#c4c4c4" font-family="'Liberation Sans', sans-serif">0</text>
<text x="141.7" y="542.9" font-size="11" fill="#c4c4c4" font-family="'Liberation Sans', sans-serif">-0.5</text>
<text x="141.7" y="564.6" font-size="11" fill="#c4c4c4" font-family="'Liberation Sans', sans-serif">0.5</text>
<text x="141.7" y="573.0" font-size="11" fill="#c4c4c4" font-family="'Liberation Sans', sans-serif">0</text>
<text x="141.7" y="581.4" font-size="11" fill="#c4c4c4" font-family="'Liberation Sans', sans-serif">-0.5</text>
<text x="141.7" y="598.6" font-size="11" fill="#c4c4c4" font-family="'Liberation Sans', sans-serif">0.5</text>
<text x="141.7" y="609.6" font-size="11" fill="#c4c4c4" font-family="'Liberation Sans', sans-serif">0</text>
<text x="141.7" y="620.6" font-size="11" fill="#c4c4c4" font-family="'Liberation Sans', sans-serif">-0.5</text>
<text x="141.7" y="642.9" font-size="11" fill="#c4c4c4" font-family="'Liberation Sans', sans-serif">0.5</text>
<text x="141.7" y="651.3" font-size="11" fill="#c4c4c4" font-family="'Liberation Sans', sans-serif">0</text>
<text x="141.7" y="659.7" font-size="11" fill="#c4c4c4" font-family="'Liberation Sans', sans-serif">-0.5</text>
<text x="141.7" y="676.2" font-size="11" fill="#c4c4c4" font-family="'Liberation Sans', sans-serif">0.5</text>
<text x="141.7" y="686.4" font-size="11" fill="#c4c4c4" font-family="'Liberation Sans', sans-serif">0</text>
<text x="141.7" y="696.6" font-size="11" fill="#c4c4c4" font-family="'Liberation Sans', sans-serif">-0.5</text>
<text x="141.7" y="714.0" font-size="11" fill="#c4c4c4" font-family="'Liberation Sans', sans-serif">0.5</text>
<text x="141.7" y="723.1" font-size="11" fill="#c4c4c4" font-family="'Liberation Sans', sans-serif">0</text>
<text x="141.7" y="732.2" font-size="11" fill="#c4c4c4" font-family="'Liberation Sans', sans-serif">-0.5</text>
<text x="141.7" y="748.8" font-size="11" fill="#c4c4c4" font-family="'Liberation Sans', sans-serif">1</text>
<text x="141.7" y="755.6" font-size="11" fill="#c4c4c4" font-family="'Liberation Sans', sans-serif">0.5</text>
<text x="141.7" y="762.4" font-size="11" fill="#c4c4c4" font-family="'Liberation Sans', sans-serif">0</text>
<text x="141.7" y="769.2" font-size="11" fill="#c4c4c4" font-family="'Liberation Sans', sans-serif">-0.5</text>
<text x="141.7" y="793.0" font-size="11" fill="#c4c4c4" font-family="'Liberation Sans', sans-serif">0.5</text>
<text x="141.7" y="800.5" font-size="11" fill="#c4c4c4" font-family="'Liberation Sans', sans-serif">0</text>
<text x="141.7" y="808.0" font-size="11" fill="#c4c4c4" font-family="'Liberation Sans', sans-serif">-0.5</text>
<text x="141.7" y="828.2" font-size="11" fill="#c4c4c4" font-family="'Liberation Sans', sans-serif">0.5</text>
<text x="141.7" y="837.6" font-size="11" fill="#c4c4c4" font-family="'Liberation Sans', sans-serif">0</text>
<text x="141.7" y="847.0" font-size="11" fill="#c4c4c4" font-family="'Liberation Sans', sans-serif">-0.5</text>
<text x="141.7" y="866.5" font-size="11" fill="#c4c4c4" font-family="'Liberation Sans', sans-serif">0.5</text>
<text x="141.7" y="874.6" font-size="11" fill="#c4c4c4" font-family="'Liberation Sans', sans-serif">0</text>
<text x="141.7" y="882.7" font-size="11" fill="#c4c4c4" font-family="'Liberation Sans', sans-serif">-0.5</text>
<text x="141.7" y="905.0" font-size="11" fill="#c4c4c4" font-family="'Liberation Sans', sans-serif">0.5</text>
<text x="141.7" y="912.3" font-size="11" fill="#c4c4c4" font-family="'Liberation Sans', sans-serif">0</text>
<text x="141.7" y="919.6" font-size="11" fill="#c4c4c4" font-family="'Liberation Sans', sans-serif">-0.5</text>
<path d="M178.0 387.8C179.0 387.6 181.9 387.1 184.3 386.4C186.7 385.7 189.7 384.4 192.4 383.4C195.2 382.4 198.0 381.0 200.6 380.3C203.2 379.6 206.1 379.1 208.1 379.0C210.2 378.9 210.7 379.0 212.9 379.7C215.0 380.4 218.1 382.1 221.0 383.1C224.0 384.2 227.4 385.3 230.6 386.0C233.8 386.6 237.2 386.6 240.1 387.0C243.1 387.3 245.6 387.7 248.3 388.0C251.0 388.2 253.3 388.5 256.4 388.5C259.6 388.6 264.4 387.9 267.3 388.1C270.3 388.3 271.9 388.9 274.1 389.5C276.4 390.1 279.0 391.2 281.0 391.7C282.9 392.1 283.9 392.2 285.7 392.2C287.5 392.3 289.7 392.0 291.9 391.8C294.0 391.6 296.5 391.4 298.7 390.8C300.8 390.3 302.7 389.4 304.8 388.5C306.8 387.7 309.0 386.5 310.9 385.8C312.8 385.2 314.7 384.8 316.4 384.6C318.1 384.3 319.1 384.1 321.1 384.1C323.2 384.1 326.2 384.6 328.6 384.6C331.0 384.5 332.9 384.2 335.4 384.0C337.9 383.8 340.9 383.5 343.6 383.4C346.3 383.4 349.0 383.5 351.8 383.7C354.5 383.9 357.4 384.2 359.9 384.4C362.4 384.7 364.7 385.1 366.7 385.1C368.8 385.2 370.1 385.0 372.2 384.7C374.2 384.4 376.5 383.8 379.0 383.6C381.5 383.3 384.4 383.3 387.2 383.3C389.9 383.2 392.6 383.3 395.3 383.1C398.1 383.0 400.8 382.9 403.5 382.6C406.2 382.2 409.2 381.5 411.7 381.1C414.2 380.8 416.2 380.6 418.5 380.6C420.8 380.6 422.8 380.8 425.3 381.0C427.8 381.2 431.0 381.5 433.5 381.9C436.0 382.2 438.0 382.6 440.3 383.1C442.5 383.7 445.3 384.7 447.1 385.3C448.9 385.8 449.1 386.2 450.9 386.4C452.7 386.6 455.4 386.4 457.7 386.3C460.0 386.1 462.0 385.6 464.5 385.4C467.0 385.3 470.2 385.4 472.7 385.4C475.2 385.4 477.4 386.0 479.5 385.4C481.5 384.8 482.9 383.4 484.9 382.0C487.0 380.6 489.6 378.2 491.7 377.2C493.9 376.1 495.9 375.8 497.9 375.7C499.8 375.7 501.4 376.3 503.3 376.9C505.2 377.5 507.3 378.7 509.4 379.3C511.6 379.9 514.0 380.0 516.3 380.7C518.5 381.4 520.8 382.5 523.1 383.4C525.3 384.3 527.7 385.6 529.9 386.3C532.0 386.9 533.7 387.1 536.0 387.1C538.3 387.1 541.1 386.2 543.5 386.3C545.9 386.3 548.3 387.1 550.3 387.3C552.3 387.4 553.7 387.5 555.7 387.0C557.8 386.5 560.4 385.1 562.6 384.3C564.7 383.4 566.9 382.0 568.7 381.9C570.5 381.7 571.5 382.4 573.4 383.3C575.4 384.1 578.1 386.0 580.3 386.8C582.4 387.7 584.3 388.3 586.4 388.3C588.4 388.2 590.4 387.4 592.5 386.4C594.7 385.4 597.3 383.4 599.3 382.4C601.4 381.5 602.7 381.0 604.8 380.6C606.8 380.1 609.5 380.2 611.6 379.7C613.6 379.3 615.3 378.3 617.0 377.9C618.7 377.4 620.0 376.9 621.8 376.9C623.6 376.9 626.0 377.6 627.9 377.7C629.8 377.9 631.4 377.8 633.4 377.7C635.3 377.7 637.4 377.3 639.5 377.3C641.5 377.4 643.5 377.7 645.6 378.0C647.8 378.3 649.9 379.0 652.4 379.2C654.9 379.3 658.1 379.1 660.6 379.2C663.1 379.2 665.1 379.2 667.4 379.6C669.7 379.9 672.2 380.8 674.2 381.3C676.3 381.8 677.8 382.8 679.7 382.6C681.5 382.4 683.1 381.5 685.1 380.0C687.1 378.6 689.8 375.3 691.9 373.9C694.1 372.5 696.0 371.7 698.0 371.6C700.1 371.5 702.2 372.4 704.2 373.2C706.1 374.0 707.8 375.6 709.6 376.3C711.4 377.1 713.2 377.4 715.1 377.7C716.9 378.1 718.6 377.9 720.9 378.4C723.3 379.0 726.3 380.2 729.2 381.1C732.1 382.1 735.5 384.1 738.1 384.4C740.6 384.6 741.9 383.5 744.6 382.7C747.2 382.0 751.3 380.3 754.0 380.0C756.8 379.7 758.6 380.4 761.1 381.0C763.7 381.7 766.7 383.3 769.4 383.9C772.2 384.5 775.1 384.2 777.7 384.6C780.3 385.0 782.6 385.8 784.8 386.1C787.0 386.4 788.3 386.6 790.7 386.6C793.1 386.5 796.0 385.9 799.0 385.8C801.9 385.8 805.2 385.8 808.4 386.1C811.7 386.3 815.6 386.8 818.5 387.3C821.4 387.9 822.8 389.1 825.8 389.4C828.7 389.8 833.1 389.3 836.0 389.4C839.0 389.6 841.2 390.1 843.5 390.3C845.8 390.6 847.8 391.0 850.0 390.8C852.2 390.7 854.2 390.3 856.6 389.4C858.9 388.6 861.9 386.8 864.0 385.7C866.2 384.6 867.6 383.5 869.6 382.9C871.7 382.3 874.0 382.1 876.2 382.2C878.4 382.3 880.4 382.9 882.7 383.5C885.0 384.1 887.7 385.1 890.2 385.9C892.7 386.6 895.2 387.3 897.6 387.8C900.1 388.3 902.9 388.8 905.1 388.8C907.3 388.8 909.0 388.2 910.7 387.8C912.4 387.4 914.2 386.7 915.4 386.3C916.6 385.9 917.4 385.6 917.8 385.4" fill="none" stroke="#920000" stroke-width="1.25"/>
<line x1="141" y1="387.8" x2="178.0" y2="387.8" stroke="#920000" stroke-width="1.1" stroke-dasharray="4 2.5"/>
<line x1="917.8" y1="385.4" x2="957" y2="385.4" stroke="#920000" stroke-width="1.1" stroke-dasharray="4 2.5"/>
<circle cx="178.0" cy="387.8" r="2.1" fill="#920000"/>
<circle cx="917.8" cy="385.4" r="2.1" fill="#920000"/>
<path d="M178.0 414.2C178.6 414.8 180.1 416.1 181.6 417.4C183.1 418.6 185.2 420.6 187.0 421.6C188.8 422.7 190.7 423.2 192.4 423.6C194.2 424.0 195.4 424.2 197.2 424.0C199.0 423.9 201.0 423.3 203.3 422.6C205.7 421.9 209.0 420.9 211.5 419.8C214.0 418.7 216.1 417.1 218.3 415.9C220.6 414.8 222.9 413.7 225.1 413.1C227.4 412.5 229.7 412.5 231.9 412.2C234.2 412.0 236.7 411.8 238.7 411.7C240.8 411.6 242.4 411.3 244.2 411.5C246.0 411.7 247.6 412.2 249.6 412.8C251.7 413.4 254.2 414.3 256.4 414.9C258.7 415.6 261.2 416.5 263.3 416.9C265.3 417.4 266.4 417.8 268.7 417.8C271.0 417.8 274.4 416.9 276.9 416.9C279.4 417.0 281.4 417.4 283.7 417.9C286.0 418.4 288.0 419.1 290.5 419.9C293.0 420.7 295.9 421.7 298.7 422.8C301.4 423.8 304.3 425.2 306.8 426.2C309.3 427.2 311.4 428.2 313.6 428.9C315.9 429.5 318.4 430.1 320.4 430.2C322.5 430.3 324.1 429.9 325.9 429.4C327.7 429.0 329.5 428.1 331.3 427.3C333.2 426.5 335.0 425.2 336.8 424.5C338.6 423.8 340.4 423.5 342.2 423.0C344.0 422.6 345.9 422.5 347.7 422.1C349.5 421.6 351.3 421.1 353.1 420.2C354.9 419.3 356.8 417.7 358.6 416.7C360.4 415.6 362.4 414.6 364.0 414.1C365.6 413.6 366.6 413.5 368.1 413.5C369.6 413.6 371.3 413.7 372.9 414.4C374.5 415.1 375.9 416.6 377.6 417.8C379.3 419.0 381.3 420.7 383.1 421.6C384.9 422.6 386.7 423.1 388.5 423.3C390.3 423.6 391.5 423.4 394.0 423.2C396.5 423.0 400.6 422.2 403.5 422.1C406.5 421.9 408.7 422.5 411.7 422.3C414.6 422.1 418.0 421.4 421.2 420.9C424.4 420.5 427.8 419.8 430.7 419.6C433.7 419.5 436.0 420.0 438.9 420.1C441.9 420.1 445.3 420.2 448.4 419.9C451.6 419.7 454.8 419.0 457.7 418.6C460.6 418.3 463.2 417.8 465.9 417.8C468.6 417.7 471.3 418.1 474.0 418.4C476.8 418.6 479.5 419.4 482.2 419.4C484.9 419.4 487.7 418.8 490.4 418.4C493.1 417.9 496.1 417.0 498.6 416.7C501.1 416.3 503.1 416.4 505.4 416.4C507.6 416.3 509.9 416.6 512.2 416.4C514.4 416.1 516.6 415.3 519.0 414.9C521.4 414.6 524.2 414.1 526.5 414.1C528.7 414.1 530.4 414.8 532.6 415.1C534.8 415.4 536.7 415.7 539.4 416.1C542.1 416.4 546.2 416.7 548.7 417.2C551.2 417.7 552.3 418.5 554.4 419.1C556.5 419.6 558.9 420.3 561.2 420.3C563.5 420.4 565.8 419.6 568.0 419.2C570.2 418.8 572.1 418.1 574.1 418.1C576.2 418.0 578.1 418.3 580.3 418.8C582.4 419.3 585.0 420.3 587.1 420.9C589.1 421.6 590.8 422.4 592.5 422.8C594.2 423.2 595.2 423.4 597.3 423.3C599.3 423.2 602.2 422.5 604.8 422.2C607.4 421.9 610.4 421.8 612.9 421.5C615.4 421.1 617.2 420.6 619.7 420.1C622.2 419.5 625.4 418.6 627.9 418.4C630.4 418.1 632.5 418.6 634.7 418.8C637.0 418.9 639.3 419.2 641.5 419.2C643.8 419.3 646.1 419.1 648.3 419.1C650.6 419.0 653.1 419.5 655.1 419.1C657.2 418.7 658.7 417.5 660.6 416.7C662.5 415.8 664.9 414.4 666.7 413.8C668.5 413.2 669.8 413.0 671.5 413.1C673.2 413.2 675.1 413.7 676.9 414.5C678.7 415.3 680.3 416.7 682.4 417.8C684.4 418.9 686.5 420.2 689.2 420.9C691.9 421.7 695.3 421.9 698.7 422.3C702.1 422.8 707.1 423.3 709.6 423.5C712.1 423.7 711.6 423.4 713.8 423.6C716.1 423.7 720.5 424.0 723.3 424.4C726.1 424.9 728.0 425.8 730.4 426.3C732.8 426.8 734.7 427.4 737.5 427.7C740.2 427.9 744.2 427.7 746.9 427.8C749.7 427.8 751.7 428.2 754.0 428.0C756.4 427.8 758.8 427.3 761.1 426.5C763.5 425.7 765.9 424.5 768.2 423.2C770.6 421.9 773.2 420.0 775.3 418.6C777.5 417.3 779.3 415.9 781.2 414.9C783.2 414.0 784.8 413.5 787.2 413.1C789.5 412.7 792.7 412.9 795.4 412.6C798.2 412.2 801.5 411.1 803.7 411.0C805.9 410.9 806.9 411.4 808.4 412.1C810.0 412.8 811.5 414.1 813.2 415.2C814.9 416.3 815.8 417.8 818.5 418.5C821.2 419.3 826.6 420.0 829.5 419.8C832.4 419.5 833.7 417.8 836.0 417.0C838.4 416.1 841.0 415.3 843.5 414.9C846.0 414.5 848.3 414.5 851.0 414.4C853.6 414.4 856.9 414.4 859.4 414.4C861.9 414.4 863.9 414.2 865.9 414.4C867.9 414.7 869.3 415.1 871.5 416.0C873.7 417.0 876.5 419.0 879.0 420.2C881.5 421.5 884.0 422.7 886.4 423.5C888.9 424.3 891.6 424.9 893.9 425.2C896.2 425.5 898.6 425.6 900.4 425.4C902.3 425.1 903.4 424.6 905.1 423.5C906.8 422.4 909.0 420.5 910.7 418.8C912.4 417.1 914.2 414.6 915.4 413.2C916.6 411.8 917.4 410.9 917.8 410.4" fill="none" stroke="#929200" stroke-width="1.25"/>
<line x1="141" y1="414.2" x2="178.0" y2="414.2" stroke="#929200" stroke-width="1.1" stroke-dasharray="4 2.5"/>
<line x1="917.8" y1="410.4" x2="957" y2="410.4" stroke="#929200" stroke-width="1.1" stroke-dasharray="4 2.5"/>
<circle cx="178.0" cy="414.2" r="2.1" fill="#b09030"/>
<circle cx="917.8" cy="410.4" r="2.1" fill="#b09030"/>
<path d="M178.0 460.9C179.3 460.5 183.0 459.4 185.6 458.7C188.3 458.1 191.4 457.2 193.8 456.8C196.2 456.3 197.9 455.9 199.9 456.0C202.0 456.2 203.9 457.0 206.1 457.7C208.2 458.5 211.1 459.8 212.9 460.3C214.7 460.8 214.7 460.8 217.0 460.7C219.2 460.6 224.0 459.7 226.5 459.7C229.0 459.8 229.9 460.5 231.9 460.9C234.0 461.2 236.5 461.8 238.7 461.9C241.0 462.0 243.1 461.7 245.6 461.6C248.1 461.5 251.2 461.7 253.7 461.3C256.2 460.9 258.3 460.0 260.5 459.2C262.8 458.4 264.8 456.9 267.3 456.5C269.8 456.0 272.8 456.4 275.5 456.3C278.2 456.3 281.4 455.9 283.7 456.2C286.0 456.4 287.1 457.0 289.1 457.7C291.2 458.5 293.7 459.9 295.9 460.6C298.2 461.3 300.5 462.0 302.7 462.0C305.0 462.1 307.3 461.7 309.6 460.9C311.8 460.1 314.1 458.7 316.4 457.2C318.6 455.6 320.9 452.9 323.2 451.5C325.4 450.1 327.9 449.1 330.0 448.8C332.0 448.5 333.4 449.0 335.4 449.9C337.5 450.9 340.0 453.1 342.2 454.6C344.5 456.2 346.8 457.9 349.0 459.2C351.3 460.4 353.4 461.4 355.9 462.0C358.3 462.7 361.8 463.1 364.0 463.0C366.3 463.0 367.4 462.6 369.5 461.7C371.5 460.9 374.0 459.2 376.3 457.7C378.5 456.3 381.2 454.1 383.1 453.2C385.0 452.3 385.8 452.0 387.8 452.1C389.9 452.2 392.7 453.4 395.3 453.8C397.9 454.1 401.0 453.8 403.5 454.1C406.0 454.3 407.8 454.6 410.3 455.2C412.8 455.8 416.0 457.2 418.5 457.7C421.0 458.3 423.0 458.1 425.3 458.6C427.6 459.1 429.8 460.1 432.1 460.9C434.4 461.7 436.6 462.9 438.9 463.4C441.2 463.9 443.7 463.7 445.7 463.9C447.7 464.1 448.9 464.0 450.9 464.6C452.9 465.2 455.4 466.8 457.7 467.4C460.0 468.0 462.2 468.2 464.5 468.3C466.8 468.3 469.1 468.2 471.3 467.7C473.6 467.3 475.6 466.5 478.1 465.6C480.6 464.6 483.6 463.1 486.3 462.0C489.0 460.9 492.0 459.8 494.5 459.2C497.0 458.5 499.2 458.1 501.3 458.2C503.3 458.2 504.7 458.6 506.7 459.5C508.8 460.3 511.4 462.2 513.5 463.0C515.7 463.9 517.6 464.6 519.7 464.6C521.7 464.6 523.6 464.0 525.8 463.2C527.9 462.3 530.6 460.4 532.6 459.5C534.6 458.5 536.5 457.9 538.0 457.5C539.6 457.1 540.5 456.9 542.1 457.0C543.7 457.2 545.8 457.7 547.6 458.3C549.4 459.0 551.4 460.4 553.0 460.9C554.6 461.4 555.5 461.7 557.1 461.4C558.7 461.2 560.7 460.1 562.6 459.2C564.4 458.2 566.2 456.7 568.0 455.9C569.8 455.1 571.6 454.7 573.4 454.6C575.3 454.5 577.1 455.2 578.9 455.5C580.7 455.7 582.5 456.3 584.3 456.2C586.2 456.1 588.0 455.4 589.8 454.9C591.6 454.4 593.4 453.7 595.2 453.3C597.0 453.0 598.6 452.7 600.7 452.8C602.7 452.8 605.4 453.2 607.5 453.5C609.5 453.8 611.1 454.2 612.9 454.5C614.8 454.7 616.6 455.0 618.4 454.9C620.2 454.8 622.0 454.2 623.8 453.9C625.6 453.6 627.5 453.2 629.3 453.2C631.1 453.2 632.7 453.7 634.7 454.1C636.8 454.4 639.5 455.2 641.5 455.5C643.6 455.7 644.9 455.7 647.0 455.6C649.0 455.6 651.7 455.0 653.8 455.2C655.8 455.4 657.2 456.4 659.2 457.0C661.3 457.7 663.8 458.3 666.0 458.9C668.3 459.4 670.6 460.1 672.8 460.3C675.1 460.5 677.6 460.1 679.7 460.3C681.7 460.5 683.1 460.9 685.1 461.3C687.1 461.7 689.9 462.4 691.9 462.7C694.0 463.0 695.5 463.2 697.4 463.0C699.2 462.8 701.0 462.0 702.8 461.3C704.6 460.6 706.5 459.2 708.3 458.6C710.0 458.0 711.1 457.6 713.0 457.5C714.9 457.4 717.4 457.7 719.7 458.1C722.0 458.5 724.5 459.5 726.8 460.1C729.2 460.7 732.0 461.3 733.9 461.7C735.9 462.0 736.5 462.1 738.7 462.0C740.8 462.0 744.4 461.5 746.9 461.2C749.5 460.9 751.7 460.7 754.0 460.2C756.4 459.6 758.6 458.7 761.1 457.8C763.7 457.0 766.9 455.9 769.4 455.2C772.0 454.6 774.5 454.3 776.5 454.0C778.5 453.7 779.7 453.5 781.2 453.6C782.8 453.8 784.2 454.1 786.0 454.8C787.8 455.4 790.1 456.8 791.9 457.6C793.7 458.4 794.8 459.0 796.6 459.3C798.4 459.7 800.6 460.0 802.5 459.8C804.5 459.6 806.5 458.6 808.4 458.1C810.4 457.6 812.4 456.9 814.4 456.7C816.3 456.5 818.1 456.9 820.3 457.0C822.4 457.1 824.8 457.4 827.4 457.5C829.9 457.6 833.3 457.7 835.6 457.6C838.0 457.5 839.6 457.2 841.6 456.9C843.5 456.5 845.3 455.8 847.5 455.4C849.6 455.0 852.4 454.5 854.6 454.5C856.7 454.6 858.5 455.0 860.5 455.6C862.5 456.3 864.4 457.5 866.4 458.3C868.4 459.2 870.3 460.1 872.3 460.6C874.3 461.0 876.3 461.1 878.2 461.2C880.2 461.2 882.2 461.2 884.1 460.8C886.1 460.4 888.1 459.6 890.1 458.7C892.0 457.8 894.0 456.6 896.0 455.6C897.9 454.7 900.3 453.6 901.9 452.9C903.5 452.2 903.6 452.2 905.4 451.5C907.2 450.8 910.5 449.3 912.6 448.7C914.6 448.1 916.9 448.1 917.8 448.0" fill="none" stroke="#009200" stroke-width="1.25"/>
<line x1="141" y1="460.9" x2="178.0" y2="460.9" stroke="#009200" stroke-width="1.1" stroke-dasharray="4 2.5"/>
<line x1="917.8" y1="448.0" x2="957" y2="448.0" stroke="#009200" stroke-width="1.1" stroke-dasharray="4 2.5"/>
<circle cx="178.0" cy="460.9" r="2.1" fill="#00c000"/>
<circle cx="917.8" cy="448.0" r="2.1" fill="#00c000"/>
<path d="M178.0 492.2C179.3 492.3 183.0 492.5 185.6 492.8C188.3 493.0 191.1 493.3 193.8 493.6C196.5 494.0 199.6 494.6 202.0 494.9C204.4 495.2 206.3 495.8 208.1 495.6C209.9 495.4 211.2 494.4 212.9 493.6C214.6 492.8 216.6 491.4 218.3 490.8C220.0 490.2 221.5 489.9 223.1 489.9C224.7 489.9 226.2 490.3 227.9 490.9C229.6 491.5 231.5 492.8 233.3 493.6C235.1 494.4 236.9 495.2 238.7 495.6C240.6 496.0 242.2 496.1 244.2 496.2C246.2 496.2 248.7 496.1 251.0 495.9C253.3 495.7 255.5 495.4 257.8 495.0C260.1 494.6 262.1 493.9 264.6 493.5C267.1 493.1 270.3 492.7 272.8 492.5C275.3 492.3 277.6 492.3 279.6 492.3C281.6 492.3 283.2 492.6 285.0 492.5C286.9 492.4 288.8 491.8 290.5 491.6C292.2 491.4 293.4 491.1 295.3 491.2C297.1 491.3 299.2 491.7 301.4 492.2C303.5 492.6 306.4 493.6 308.2 493.9C310.0 494.2 310.7 494.3 312.3 494.0C313.9 493.8 315.7 493.0 317.7 492.2C319.8 491.4 322.3 490.1 324.5 489.4C326.8 488.6 329.2 488.0 331.3 487.5C333.5 487.0 335.7 486.6 337.5 486.4C339.3 486.1 340.5 486.0 342.2 486.1C343.9 486.2 345.6 486.3 347.7 486.8C349.7 487.3 352.2 488.1 354.5 488.9C356.8 489.7 359.0 490.8 361.3 491.5C363.6 492.2 366.1 493.0 368.1 493.1C370.1 493.1 371.7 492.4 373.6 491.9C375.4 491.5 377.4 490.7 379.0 490.4C380.6 490.0 381.5 489.9 383.1 489.9C384.7 490.0 386.7 490.5 388.5 490.8C390.3 491.1 391.7 491.6 394.0 491.6C396.2 491.7 399.9 490.8 402.1 490.9C404.4 491.1 405.6 491.7 407.6 492.5C409.6 493.3 412.4 494.8 414.4 495.6C416.4 496.5 417.8 497.2 419.8 497.6C421.9 498.1 424.2 498.2 426.7 498.3C429.2 498.4 432.3 498.7 434.8 498.3C437.3 497.9 439.6 496.8 441.6 496.0C443.7 495.3 445.5 494.2 447.1 493.6C448.6 493.0 449.1 492.6 450.9 492.5C452.7 492.3 455.4 492.6 457.7 492.8C460.0 493.0 462.2 493.7 464.5 493.6C466.8 493.5 469.1 492.7 471.3 492.3C473.6 491.9 476.1 491.3 478.1 491.2C480.2 491.1 481.5 491.4 483.6 491.8C485.6 492.2 488.1 493.2 490.4 493.6C492.7 494.0 494.9 494.3 497.2 494.3C499.5 494.4 502.0 494.1 504.0 493.9C506.0 493.7 507.6 493.1 509.4 493.2C511.3 493.2 513.1 493.8 514.9 494.2C516.7 494.5 518.6 495.1 520.3 495.3C522.0 495.6 523.5 496.0 525.1 495.6C526.7 495.3 528.2 494.1 529.9 493.2C531.6 492.3 533.5 490.8 535.3 490.1C537.1 489.3 539.0 488.9 540.8 488.5C542.6 488.1 544.4 487.8 546.2 487.5C548.0 487.2 549.8 486.9 551.7 486.5C553.5 486.2 555.5 485.5 557.1 485.4C558.7 485.2 559.6 485.2 561.2 485.7C562.8 486.1 564.8 487.2 566.6 488.2C568.5 489.3 570.3 490.7 572.1 491.9C573.9 493.1 575.9 494.6 577.5 495.6C579.1 496.7 579.8 497.3 581.6 498.2C583.4 499.0 585.4 500.6 588.3 500.7C591.2 500.7 595.6 498.7 598.8 498.6C601.9 498.4 604.0 499.3 607.2 499.8C610.3 500.3 614.2 501.3 617.7 501.7C621.2 502.1 625.2 502.4 628.2 502.3C631.2 502.3 633.1 502.3 635.5 501.3C638.0 500.2 640.3 497.8 642.9 496.0C645.5 494.3 648.8 491.9 651.3 490.8C653.7 489.7 655.1 489.3 657.6 489.3C660.0 489.3 663.2 490.3 666.0 490.8C668.8 491.3 671.6 492.3 674.4 492.5C677.2 492.7 680.3 491.3 682.8 491.8C685.2 492.4 686.6 494.1 689.1 496.0C691.5 498.0 694.8 501.6 697.5 503.4C700.1 505.1 702.0 506.4 704.8 506.5C707.6 506.7 710.9 505.2 714.3 504.4C717.6 503.6 721.9 502.8 724.8 501.7C727.6 500.6 729.5 499.1 731.6 498.1C733.7 497.0 735.3 496.3 737.5 495.3C739.7 494.4 742.0 493.0 744.6 492.1C747.1 491.3 750.1 490.5 752.9 490.4C755.6 490.3 758.2 491.1 761.1 491.3C764.1 491.5 767.4 491.4 770.6 491.6C773.8 491.9 777.3 492.2 780.1 492.7C782.8 493.3 784.8 494.2 787.2 495.0C789.5 495.8 791.9 496.9 794.3 497.6C796.6 498.2 798.8 498.7 801.4 499.0C803.9 499.4 807.1 499.5 809.6 499.5C812.2 499.6 814.6 499.4 816.7 499.3C818.9 499.1 820.5 499.0 822.6 498.7C824.8 498.3 827.2 497.6 829.7 497.3C832.3 497.0 834.7 496.9 838.0 496.8C841.4 496.7 846.1 496.8 849.8 496.8C853.6 496.9 857.7 496.9 860.5 497.2C863.2 497.4 864.9 498.1 866.4 498.3C867.9 498.5 867.3 498.1 869.6 498.6C871.9 499.1 877.0 500.6 880.1 501.3C883.3 502.0 885.7 503.1 888.5 503.0C891.3 502.8 893.8 501.8 896.9 500.2C900.1 498.7 903.9 495.8 907.4 493.5C910.9 491.3 916.0 487.8 917.8 486.7" fill="none" stroke="#009292" stroke-width="1.25"/>
<line x1="141" y1="492.2" x2="178.0" y2="492.2" stroke="#009292" stroke-width="1.1" stroke-dasharray="4 2.5"/>
<line x1="917.8" y1="486.7" x2="957" y2="486.7" stroke="#009292" stroke-width="1.1" stroke-dasharray="4 2.5"/>
<circle cx="178.0" cy="492.2" r="2.1" fill="#00b4b4"/>
<circle cx="917.8" cy="486.7" r="2.1" fill="#00b4b4"/>
<path d="M178.0 532.6C179.3 533.0 183.3 533.8 186.0 535.0C188.7 536.2 191.2 538.4 194.0 539.6C196.8 540.8 200.0 542.3 203.0 542.0C206.0 541.7 209.2 539.4 212.0 538.0C214.8 536.6 217.0 534.5 220.0 533.6C223.0 532.7 226.7 532.9 230.0 532.8C233.3 532.7 237.0 533.2 240.0 533.0C243.0 532.8 245.7 532.4 248.0 531.6C250.3 530.8 251.7 528.9 254.0 528.0C256.3 527.1 259.3 526.5 262.0 526.4C264.7 526.3 267.3 526.7 270.0 527.6C272.7 528.5 275.3 530.6 278.0 532.0C280.7 533.4 283.3 534.8 286.0 536.0C288.7 537.2 291.5 538.3 294.0 539.0C296.5 539.7 298.7 540.6 301.0 540.4C303.3 540.2 305.5 538.8 308.0 537.6C310.5 536.4 313.3 534.1 316.0 533.0C318.7 531.9 321.3 531.5 324.0 531.0C326.7 530.5 329.0 530.0 332.0 530.0C335.0 530.0 338.3 530.9 342.0 531.0C345.7 531.1 350.3 530.8 354.0 530.8C357.7 530.8 361.0 531.2 364.0 531.0C367.0 530.8 369.3 529.9 372.0 529.4C374.7 528.9 377.3 528.0 380.0 528.0C382.7 528.0 385.3 528.6 388.0 529.4C390.7 530.2 393.3 531.5 396.0 532.6C398.7 533.7 401.3 535.0 404.0 536.0C406.7 537.0 409.7 538.2 412.0 538.4C414.3 538.6 416.0 538.2 418.0 537.0C420.0 535.8 422.0 532.8 424.0 531.0C426.0 529.2 427.7 527.2 430.0 526.0C432.3 524.8 435.7 523.8 438.0 523.6C440.3 523.4 442.0 523.8 444.0 524.6C446.0 525.4 447.7 527.1 450.0 528.4C452.3 529.7 455.3 532.5 458.0 532.6C460.7 532.7 463.3 530.1 466.0 529.0C468.7 527.9 471.7 526.2 474.0 526.0C476.3 525.8 478.0 526.9 480.0 528.0C482.0 529.1 484.0 531.1 486.0 532.6C488.0 534.1 490.0 536.0 492.0 537.0C494.0 538.0 495.7 538.4 498.0 538.4C500.3 538.4 503.3 537.7 506.0 537.0C508.7 536.3 511.3 535.3 514.0 534.4C516.7 533.5 519.7 531.7 522.0 531.6C524.3 531.5 525.7 533.1 528.0 534.0C530.3 534.9 533.3 536.7 536.0 537.0C538.7 537.3 541.3 536.2 544.0 535.6C546.7 535.0 549.3 534.1 552.0 533.6C554.7 533.1 557.3 532.9 560.0 532.6C562.7 532.3 565.0 532.0 568.0 531.6C571.0 531.2 575.0 530.3 578.0 530.4C581.0 530.5 583.3 531.1 586.0 532.0C588.7 532.9 591.3 534.7 594.0 535.6C596.7 536.5 599.3 537.6 602.0 537.6C604.7 537.6 607.0 536.4 610.0 535.6C613.0 534.8 617.0 533.8 620.0 532.6C623.0 531.4 625.3 529.7 628.0 528.4C630.7 527.1 633.7 525.3 636.0 524.6C638.3 523.9 640.0 523.7 642.0 524.0C644.0 524.3 645.7 525.3 648.0 526.4C650.3 527.5 653.3 529.5 656.0 530.4C658.7 531.3 661.3 531.3 664.0 532.0C666.7 532.7 669.3 533.5 672.0 534.4C674.7 535.3 677.3 537.0 680.0 537.6C682.7 538.2 685.0 538.3 688.0 538.0C691.0 537.7 695.0 537.0 698.0 536.0C701.0 535.0 703.0 533.3 706.0 532.0C709.0 530.7 713.2 529.2 716.0 528.4C718.8 527.6 720.7 526.7 723.0 527.0C725.3 527.3 727.8 528.3 730.0 530.0C732.2 531.7 734.0 534.9 736.0 537.0C738.0 539.1 740.0 541.5 742.0 542.6C744.0 543.7 745.7 544.0 748.0 543.6C750.3 543.2 753.3 541.7 756.0 540.0C758.7 538.3 761.3 535.2 764.0 533.6C766.7 532.0 769.3 530.8 772.0 530.6C774.7 530.4 777.3 531.8 780.0 532.4C782.7 533.0 785.3 534.3 788.0 534.4C790.7 534.5 793.3 533.6 796.0 533.0C798.7 532.4 801.3 531.7 804.0 531.0C806.7 530.3 809.3 530.0 812.0 529.0C814.7 528.0 817.7 525.9 820.0 525.0C822.3 524.1 824.0 523.1 826.0 523.6C828.0 524.1 830.0 526.3 832.0 528.0C834.0 529.7 836.3 532.4 838.0 533.6C839.7 534.8 840.0 535.3 842.0 535.0C844.0 534.7 847.3 533.0 850.0 532.0C852.7 531.0 855.7 529.6 858.0 529.0C860.3 528.4 861.7 528.2 864.0 528.4C866.3 528.6 869.0 529.3 872.0 530.0C875.0 530.7 879.0 531.8 882.0 532.4C885.0 533.0 887.3 533.5 890.0 533.4C892.7 533.3 895.3 532.7 898.0 532.0C900.7 531.3 903.7 530.3 906.0 529.4C908.3 528.5 910.0 527.3 912.0 526.6C914.0 525.9 916.8 525.6 917.8 525.4" fill="none" stroke="#0000a8" stroke-width="1.25"/>
<line x1="141" y1="532.6" x2="178.0" y2="532.6" stroke="#0000a8" stroke-width="1.1" stroke-dasharray="4 2.5"/>
<line x1="917.8" y1="525.4" x2="957" y2="525.4" stroke="#0000a8" stroke-width="1.1" stroke-dasharray="4 2.5"/>
<circle cx="178.0" cy="532.6" r="2.1" fill="#0000a8"/>
<circle cx="917.8" cy="525.4" r="2.1" fill="#0000a8"/>
<path d="M178.0 574.0C179.3 574.4 183.3 576.0 186.0 576.4C188.7 576.8 191.0 576.7 194.0 576.4C197.0 576.1 200.3 575.4 204.0 574.8C207.7 574.2 212.7 572.4 216.0 572.6C219.3 572.8 221.5 575.1 224.0 576.0C226.5 576.9 228.7 578.3 231.0 578.0C233.3 577.7 235.5 575.6 238.0 574.4C240.5 573.2 243.3 571.6 246.0 570.6C248.7 569.6 251.3 569.2 254.0 568.4C256.7 567.6 259.7 566.5 262.0 566.0C264.3 565.5 266.0 565.3 268.0 565.6C270.0 565.9 271.7 567.0 274.0 568.0C276.3 569.0 279.3 570.7 282.0 571.4C284.7 572.1 287.0 572.1 290.0 572.0C293.0 571.9 296.7 571.4 300.0 571.0C303.3 570.6 307.3 569.8 310.0 569.6C312.7 569.4 313.7 569.0 316.0 569.6C318.3 570.2 321.3 571.9 324.0 573.0C326.7 574.1 329.3 575.8 332.0 576.4C334.7 577.0 337.0 576.5 340.0 576.4C343.0 576.3 346.7 575.8 350.0 575.6C353.3 575.4 357.0 575.4 360.0 575.0C363.0 574.6 365.3 573.8 368.0 573.0C370.7 572.2 373.3 570.6 376.0 570.4C378.7 570.2 381.3 571.5 384.0 572.0C386.7 572.5 389.3 573.7 392.0 573.6C394.7 573.5 397.7 572.2 400.0 571.6C402.3 571.0 404.0 569.9 406.0 570.0C408.0 570.1 409.7 571.1 412.0 572.4C414.3 573.7 417.3 576.2 420.0 577.6C422.7 579.0 425.7 580.4 428.0 580.6C430.3 580.8 431.7 579.9 434.0 579.0C436.3 578.1 439.3 576.1 442.0 575.0C444.7 573.9 447.3 573.1 450.0 572.4C452.7 571.7 455.3 571.5 458.0 570.6C460.7 569.7 463.7 567.4 466.0 567.0C468.3 566.6 469.7 567.0 472.0 568.0C474.3 569.0 477.3 571.9 480.0 573.0C482.7 574.1 485.7 574.8 488.0 574.6C490.3 574.4 491.7 573.3 494.0 572.0C496.3 570.7 499.7 568.1 502.0 567.0C504.3 565.9 506.0 565.4 508.0 565.6C510.0 565.8 512.0 566.9 514.0 568.0C516.0 569.1 518.0 571.1 520.0 572.0C522.0 572.9 523.7 573.7 526.0 573.6C528.3 573.5 531.3 572.1 534.0 571.6C536.7 571.1 539.3 570.5 542.0 570.6C544.7 570.7 547.0 571.8 550.0 572.0C553.0 572.2 557.0 572.1 560.0 572.0C563.0 571.9 565.0 572.0 568.0 571.6C571.0 571.2 574.7 569.8 578.0 569.4C581.3 569.0 584.7 568.7 588.0 569.0C591.3 569.3 594.8 570.7 598.0 571.4C601.2 572.1 604.3 573.1 607.0 573.0C609.7 572.9 611.8 571.4 614.0 571.0C616.2 570.6 617.7 570.1 620.0 570.4C622.3 570.7 625.3 571.9 628.0 573.0C630.7 574.1 633.3 575.7 636.0 577.0C638.7 578.3 641.8 580.2 644.0 581.0C646.2 581.8 647.0 582.6 649.0 582.0C651.0 581.4 653.8 579.2 656.0 577.6C658.2 576.0 660.0 573.4 662.0 572.4C664.0 571.4 666.0 571.2 668.0 571.4C670.0 571.6 672.0 572.6 674.0 573.4C676.0 574.2 677.3 575.2 680.0 576.0C682.7 576.8 686.8 577.3 690.0 578.0C693.2 578.7 696.3 580.4 699.0 580.4C701.7 580.4 703.5 578.9 706.0 578.0C708.5 577.1 711.3 575.7 714.0 575.0C716.7 574.3 719.3 574.2 722.0 573.6C724.7 573.0 727.3 572.1 730.0 571.4C732.7 570.7 735.7 569.9 738.0 569.6C740.3 569.3 741.7 569.3 744.0 569.6C746.3 569.9 749.3 570.9 752.0 571.6C754.7 572.3 756.7 573.1 760.0 573.6C763.3 574.1 768.7 574.7 772.0 574.6C775.3 574.5 777.3 573.5 780.0 573.0C782.7 572.5 785.3 571.8 788.0 571.4C790.7 571.0 793.0 570.7 796.0 570.8C799.0 570.9 802.3 571.7 806.0 572.0C809.7 572.3 814.7 572.2 818.0 572.4C821.3 572.6 823.3 573.5 826.0 573.4C828.7 573.3 831.7 572.3 834.0 572.0C836.3 571.7 837.7 571.3 840.0 571.4C842.3 571.5 845.3 572.1 848.0 572.6C850.7 573.1 853.3 574.3 856.0 574.6C858.7 574.9 861.3 574.4 864.0 574.6C866.7 574.8 869.3 575.5 872.0 576.0C874.7 576.5 877.3 577.6 880.0 577.6C882.7 577.6 885.0 576.7 888.0 576.0C891.0 575.3 895.0 574.8 898.0 573.6C901.0 572.4 903.7 570.4 906.0 569.0C908.3 567.6 910.0 566.2 912.0 565.0C914.0 563.8 916.8 562.5 917.8 562.0" fill="none" stroke="#920092" stroke-width="1.25"/>
<line x1="141" y1="574.0" x2="178.0" y2="574.0" stroke="#920092" stroke-width="1.1" stroke-dasharray="4 2.5"/>
<line x1="917.8" y1="562.0" x2="957" y2="562.0" stroke="#920092" stroke-width="1.1" stroke-dasharray="4 2.5"/>
<circle cx="178.0" cy="574.0" r="2.1" fill="#920092"/>
<circle cx="917.8" cy="562.0" r="2.1" fill="#920092"/>
<path d="M178.0 616.6C179.3 617.0 183.0 618.5 186.0 619.0C189.0 619.5 192.7 620.3 196.0 619.6C199.3 618.9 202.7 616.3 206.0 615.0C209.3 613.7 212.7 613.0 216.0 612.0C219.3 611.0 222.3 609.7 226.0 609.0C229.7 608.3 234.7 608.8 238.0 608.0C241.3 607.2 243.3 605.1 246.0 604.0C248.7 602.9 251.7 601.7 254.0 601.4C256.3 601.1 257.7 601.2 260.0 602.0C262.3 602.8 265.3 604.7 268.0 606.0C270.7 607.3 273.3 609.3 276.0 610.0C278.7 610.7 281.3 610.2 284.0 610.0C286.7 609.8 289.3 608.9 292.0 608.6C294.7 608.3 297.0 607.9 300.0 608.0C303.0 608.1 306.7 608.9 310.0 609.4C313.3 609.9 316.7 610.5 320.0 611.0C323.3 611.5 327.0 612.4 330.0 612.4C333.0 612.4 335.3 611.6 338.0 611.0C340.7 610.4 343.3 609.3 346.0 609.0C348.7 608.7 351.0 608.8 354.0 609.0C357.0 609.2 361.0 609.6 364.0 610.0C367.0 610.4 369.5 611.2 372.0 611.6C374.5 612.0 376.8 612.8 379.0 612.4C381.2 612.0 383.0 610.7 385.0 609.0C387.0 607.3 389.2 603.7 391.0 602.0C392.8 600.3 394.3 598.8 396.0 598.6C397.7 598.4 399.2 599.8 401.0 601.0C402.8 602.2 404.8 604.8 407.0 605.6C409.2 606.4 411.8 605.7 414.0 605.6C416.2 605.5 417.7 604.8 420.0 605.0C422.3 605.2 425.3 606.0 428.0 606.6C430.7 607.2 433.0 608.2 436.0 608.6C439.0 609.0 442.7 609.2 446.0 609.0C449.3 608.8 453.0 607.9 456.0 607.6C459.0 607.3 461.3 606.8 464.0 607.0C466.7 607.2 469.7 607.9 472.0 608.6C474.3 609.3 476.0 610.5 478.0 611.0C480.0 611.5 482.0 611.9 484.0 611.6C486.0 611.3 487.7 610.0 490.0 609.0C492.3 608.0 495.3 606.3 498.0 605.6C500.7 604.9 503.3 605.1 506.0 605.0C508.7 604.9 511.3 605.1 514.0 605.0C516.7 604.9 519.3 604.2 522.0 604.4C524.7 604.6 527.3 605.4 530.0 606.0C532.7 606.6 535.3 608.1 538.0 608.0C540.7 607.9 543.7 606.2 546.0 605.6C548.3 605.0 549.7 604.4 552.0 604.6C554.3 604.8 557.3 605.8 560.0 607.0C562.7 608.2 565.5 610.9 568.0 612.0C570.5 613.1 572.7 613.6 575.0 613.4C577.3 613.2 579.5 611.8 582.0 611.0C584.5 610.2 587.0 609.2 590.0 608.4C593.0 607.6 597.0 606.7 600.0 606.0C603.0 605.3 605.3 604.2 608.0 604.4C610.7 604.6 613.3 606.2 616.0 607.0C618.7 607.8 621.3 609.3 624.0 609.4C626.7 609.5 629.3 608.4 632.0 607.6C634.7 606.8 637.7 605.1 640.0 604.4C642.3 603.7 643.7 603.2 646.0 603.6C648.3 604.0 651.3 605.6 654.0 606.6C656.7 607.6 659.3 609.1 662.0 609.6C664.7 610.1 667.0 609.6 670.0 609.4C673.0 609.2 676.7 608.7 680.0 608.6C683.3 608.5 686.7 608.8 690.0 608.6C693.3 608.4 697.3 607.2 700.0 607.4C702.7 607.6 703.7 608.4 706.0 609.6C708.3 610.8 711.7 613.3 714.0 614.4C716.3 615.5 717.3 615.9 720.0 616.0C722.7 616.1 726.7 615.2 730.0 615.0C733.3 614.8 736.7 615.2 740.0 615.0C743.3 614.8 747.0 613.7 750.0 614.0C753.0 614.3 755.7 616.1 758.0 617.0C760.3 617.9 762.0 619.4 764.0 619.4C766.0 619.4 767.7 618.6 770.0 617.0C772.3 615.4 775.7 611.8 778.0 610.0C780.3 608.2 782.0 607.1 784.0 606.4C786.0 605.7 787.7 605.5 790.0 606.0C792.3 606.5 795.3 608.2 798.0 609.4C800.7 610.6 803.3 612.4 806.0 613.4C808.7 614.4 811.7 615.1 814.0 615.6C816.3 616.1 818.0 616.5 820.0 616.4C822.0 616.3 823.7 616.2 826.0 615.0C828.3 613.8 831.7 610.7 834.0 609.4C836.3 608.1 838.0 607.1 840.0 607.0C842.0 606.9 843.7 608.1 846.0 609.0C848.3 609.9 851.7 611.8 854.0 612.6C856.3 613.4 858.0 613.9 860.0 613.6C862.0 613.3 863.7 612.4 866.0 611.0C868.3 609.6 871.7 606.6 874.0 605.0C876.3 603.4 878.0 602.2 880.0 601.4C882.0 600.6 884.0 600.3 886.0 600.4C888.0 600.5 889.7 601.2 892.0 602.0C894.3 602.8 897.0 604.2 900.0 605.0C903.0 605.8 907.0 606.0 910.0 606.6C913.0 607.2 916.5 608.1 917.8 608.4" fill="none" stroke="#6c0000" stroke-width="1.25"/>
<line x1="141" y1="616.6" x2="178.0" y2="616.6" stroke="#6c0000" stroke-width="1.1" stroke-dasharray="4 2.5"/>
<line x1="917.8" y1="608.4" x2="957" y2="608.4" stroke="#6c0000" stroke-width="1.1" stroke-dasharray="4 2.5"/>
<circle cx="178.0" cy="616.6" r="2.1" fill="#6c0000"/>
<circle cx="917.8" cy="608.4" r="2.1" fill="#6c0000"/>
<path d="M178.0 650.4C179.3 650.7 183.0 651.6 186.0 652.0C189.0 652.4 192.3 652.3 196.0 652.6C199.7 652.9 204.3 653.4 208.0 654.0C211.7 654.6 215.0 655.6 218.0 656.0C221.0 656.4 223.3 656.6 226.0 656.4C228.7 656.2 231.3 656.1 234.0 655.0C236.7 653.9 239.3 651.8 242.0 650.0C244.7 648.2 247.3 645.8 250.0 644.4C252.7 643.0 255.7 642.1 258.0 641.6C260.3 641.1 261.7 641.2 264.0 641.6C266.3 642.0 269.5 643.0 272.0 644.0C274.5 645.0 277.0 646.6 279.0 647.4C281.0 648.2 282.2 648.8 284.0 648.6C285.8 648.4 288.0 646.8 290.0 646.0C292.0 645.2 294.0 644.3 296.0 644.0C298.0 643.7 299.7 643.9 302.0 644.4C304.3 644.9 307.3 646.3 310.0 647.0C312.7 647.7 315.3 647.7 318.0 648.4C320.7 649.1 323.3 650.2 326.0 651.4C328.7 652.6 331.3 654.5 334.0 655.6C336.7 656.7 339.7 657.8 342.0 658.0C344.3 658.2 345.7 657.7 348.0 657.0C350.3 656.3 353.3 654.8 356.0 653.6C358.7 652.4 361.3 650.9 364.0 650.0C366.7 649.1 369.0 648.3 372.0 648.0C375.0 647.7 378.7 647.9 382.0 648.0C385.3 648.1 388.7 648.4 392.0 648.6C395.3 648.8 398.7 648.6 402.0 649.0C405.3 649.4 408.7 650.4 412.0 651.0C415.3 651.6 418.7 652.3 422.0 652.6C425.3 652.9 429.0 653.2 432.0 653.0C435.0 652.8 437.0 652.3 440.0 651.6C443.0 650.9 447.0 649.6 450.0 649.0C453.0 648.4 455.0 647.9 458.0 648.0C461.0 648.1 464.7 649.2 468.0 649.4C471.3 649.6 474.7 649.5 478.0 649.4C481.3 649.3 484.7 648.8 488.0 648.6C491.3 648.4 494.3 648.0 498.0 648.0C501.7 648.0 506.7 648.8 510.0 648.4C513.3 648.0 515.3 646.1 518.0 645.4C520.7 644.7 523.3 644.3 526.0 644.4C528.7 644.5 531.0 645.1 534.0 646.0C537.0 646.9 540.7 648.8 544.0 650.0C547.3 651.2 551.3 652.4 554.0 653.0C556.7 653.6 557.7 653.4 560.0 653.6C562.3 653.8 565.0 654.3 568.0 654.0C571.0 653.7 575.0 653.0 578.0 652.0C581.0 651.0 583.3 649.6 586.0 648.0C588.7 646.4 591.3 644.0 594.0 642.4C596.7 640.8 599.3 639.3 602.0 638.4C604.7 637.5 607.5 636.9 610.0 637.0C612.5 637.1 614.7 637.9 617.0 639.0C619.3 640.1 621.5 642.3 624.0 643.6C626.5 644.9 629.0 646.2 632.0 647.0C635.0 647.8 638.7 648.0 642.0 648.4C645.3 648.8 649.0 649.4 652.0 649.6C655.0 649.8 657.3 650.1 660.0 649.6C662.7 649.1 665.3 647.3 668.0 646.6C670.7 645.9 673.3 645.5 676.0 645.4C678.7 645.3 681.3 645.7 684.0 646.0C686.7 646.3 689.0 647.1 692.0 647.0C695.0 646.9 699.0 645.7 702.0 645.6C705.0 645.5 707.3 645.9 710.0 646.6C712.7 647.3 715.3 648.8 718.0 649.6C720.7 650.4 723.0 650.9 726.0 651.2C729.0 651.5 732.7 651.7 736.0 651.4C739.3 651.1 743.0 650.4 746.0 649.6C749.0 648.8 751.3 647.4 754.0 646.6C756.7 645.8 759.3 644.7 762.0 644.6C764.7 644.5 767.3 645.4 770.0 646.0C772.7 646.6 775.0 647.4 778.0 648.0C781.0 648.6 784.7 648.9 788.0 649.4C791.3 649.9 795.0 651.2 798.0 651.0C801.0 650.8 803.3 648.9 806.0 648.0C808.7 647.1 811.3 645.8 814.0 645.6C816.7 645.4 819.3 646.3 822.0 647.0C824.7 647.7 827.0 649.1 830.0 649.6C833.0 650.1 836.7 650.1 840.0 650.0C843.3 649.9 846.7 649.2 850.0 649.0C853.3 648.8 856.7 649.1 860.0 649.0C863.3 648.9 866.3 648.4 870.0 648.6C873.7 648.8 878.3 650.4 882.0 650.4C885.7 650.4 889.0 648.8 892.0 648.6C895.0 648.4 897.3 648.5 900.0 649.0C902.7 649.5 905.0 651.2 908.0 651.6C911.0 652.0 916.1 651.4 917.8 651.4" fill="none" stroke="#6c6c00" stroke-width="1.25"/>
<line x1="141" y1="650.4" x2="178.0" y2="650.4" stroke="#6c6c00" stroke-width="1.1" stroke-dasharray="4 2.5"/>
<line x1="917.8" y1="651.4" x2="957" y2="651.4" stroke="#6c6c00" stroke-width="1.1" stroke-dasharray="4 2.5"/>
<circle cx="178.0" cy="650.4" r="2.1" fill="#6c6c00"/>
<circle cx="917.8" cy="651.4" r="2.1" fill="#6c6c00"/>
<path d="M178.0 681.0C179.2 681.1 182.7 680.7 185.0 681.4C187.3 682.1 189.3 684.0 192.0 685.0C194.7 686.0 198.0 687.6 201.0 687.4C204.0 687.2 207.2 684.8 210.0 684.0C212.8 683.2 215.3 682.3 218.0 682.4C220.7 682.5 223.0 683.9 226.0 684.4C229.0 684.9 232.7 685.3 236.0 685.4C239.3 685.5 243.0 684.7 246.0 685.0C249.0 685.3 251.3 686.2 254.0 687.0C256.7 687.8 259.3 690.1 262.0 690.0C264.7 689.9 267.3 687.3 270.0 686.4C272.7 685.5 275.0 684.6 278.0 684.4C281.0 684.2 284.7 685.2 288.0 685.4C291.3 685.6 294.3 685.4 298.0 685.6C301.7 685.8 306.7 686.6 310.0 686.4C313.3 686.2 315.3 685.3 318.0 684.6C320.7 683.9 323.3 682.4 326.0 682.4C328.7 682.4 331.3 683.8 334.0 684.4C336.7 685.0 339.3 685.9 342.0 686.0C344.7 686.1 347.3 685.4 350.0 685.0C352.7 684.6 355.3 683.5 358.0 683.6C360.7 683.7 363.3 684.7 366.0 685.4C368.7 686.1 371.7 687.4 374.0 688.0C376.3 688.6 377.7 689.3 380.0 689.0C382.3 688.7 385.3 687.3 388.0 686.0C390.7 684.7 393.3 682.6 396.0 681.4C398.7 680.2 401.7 678.8 404.0 678.6C406.3 678.4 407.8 679.0 410.0 680.0C412.2 681.0 414.8 683.3 417.0 684.4C419.2 685.5 420.8 686.6 423.0 686.4C425.2 686.2 427.5 684.4 430.0 683.4C432.5 682.4 435.3 680.9 438.0 680.6C440.7 680.3 443.3 681.1 446.0 681.4C448.7 681.7 451.0 682.7 454.0 682.6C457.0 682.5 460.7 681.7 464.0 681.0C467.3 680.3 471.0 679.2 474.0 678.6C477.0 678.0 479.3 677.5 482.0 677.4C484.7 677.3 487.3 677.3 490.0 678.0C492.7 678.7 495.3 680.2 498.0 681.4C500.7 682.6 503.7 684.3 506.0 685.0C508.3 685.7 509.7 685.9 512.0 685.6C514.3 685.3 517.3 684.1 520.0 683.0C522.7 681.9 525.3 680.2 528.0 679.0C530.7 677.8 533.3 676.5 536.0 676.0C538.7 675.5 541.7 675.4 544.0 676.0C546.3 676.6 547.7 678.0 550.0 679.4C552.3 680.8 555.0 683.8 558.0 684.6C561.0 685.4 564.7 685.0 568.0 684.4C571.3 683.8 575.0 682.1 578.0 681.0C581.0 679.9 583.7 678.6 586.0 678.0C588.3 677.4 589.7 677.1 592.0 677.4C594.3 677.7 597.3 678.7 600.0 680.0C602.7 681.3 605.7 684.1 608.0 685.4C610.3 686.7 611.7 687.9 614.0 688.0C616.3 688.1 619.3 686.6 622.0 686.0C624.7 685.4 627.0 684.8 630.0 684.6C633.0 684.4 637.0 684.9 640.0 685.0C643.0 685.1 645.0 685.1 648.0 685.4C651.0 685.7 654.7 686.8 658.0 687.0C661.3 687.2 665.0 686.5 668.0 686.6C671.0 686.7 673.2 687.1 676.0 687.6C678.8 688.1 682.0 689.4 685.0 689.6C688.0 689.8 690.8 689.1 694.0 688.6C697.2 688.1 701.0 687.4 704.0 686.4C707.0 685.4 709.3 683.6 712.0 682.6C714.7 681.6 717.0 680.8 720.0 680.4C723.0 680.0 726.7 680.3 730.0 680.0C733.3 679.7 737.0 679.2 740.0 678.6C743.0 678.0 745.5 677.2 748.0 676.6C750.5 676.0 752.7 674.9 755.0 675.0C757.3 675.1 759.5 676.3 762.0 677.4C764.5 678.5 767.3 680.1 770.0 681.6C772.7 683.1 775.3 684.7 778.0 686.4C780.7 688.1 783.5 690.5 786.0 692.0C788.5 693.5 790.8 695.1 793.0 695.4C795.2 695.7 796.8 695.1 799.0 694.0C801.2 692.9 803.8 690.3 806.0 689.0C808.2 687.7 809.7 686.7 812.0 686.0C814.3 685.3 817.3 685.2 820.0 685.0C822.7 684.8 825.3 684.9 828.0 684.6C830.7 684.3 833.7 683.5 836.0 683.4C838.3 683.3 840.0 683.3 842.0 684.0C844.0 684.7 846.0 686.4 848.0 687.6C850.0 688.8 852.0 690.4 854.0 691.4C856.0 692.4 858.0 693.3 860.0 693.4C862.0 693.5 863.7 692.7 866.0 692.0C868.3 691.3 871.0 690.0 874.0 689.0C877.0 688.0 880.7 686.8 884.0 686.0C887.3 685.2 891.0 685.1 894.0 684.4C897.0 683.7 899.3 682.6 902.0 681.6C904.7 680.6 907.4 679.5 910.0 678.6C912.6 677.7 916.5 676.8 917.8 676.4" fill="none" stroke="#006c00" stroke-width="1.25"/>
<line x1="141" y1="681.0" x2="178.0" y2="681.0" stroke="#006c00" stroke-width="1.1" stroke-dasharray="4 2.5"/>
<line x1="917.8" y1="676.4" x2="957" y2="676.4" stroke="#006c00" stroke-width="1.1" stroke-dasharray="4 2.5"/>
<circle cx="178.0" cy="681.0" r="2.1" fill="#006c00"/>
<circle cx="917.8" cy="676.4" r="2.1" fill="#006c00"/>
<path d="M178.0 722.0C179.3 722.5 183.0 723.9 186.0 725.0C189.0 726.1 192.7 727.6 196.0 728.6C199.3 729.6 202.7 730.3 206.0 731.0C209.3 731.7 213.0 732.8 216.0 732.6C219.0 732.4 221.0 731.3 224.0 730.0C227.0 728.7 230.7 726.8 234.0 725.0C237.3 723.2 241.0 720.7 244.0 719.4C247.0 718.1 249.3 717.5 252.0 717.4C254.7 717.3 257.3 718.2 260.0 719.0C262.7 719.8 265.0 721.5 268.0 722.0C271.0 722.5 275.0 721.5 278.0 722.0C281.0 722.5 283.3 723.9 286.0 725.0C288.7 726.1 291.0 727.8 294.0 728.4C297.0 729.0 300.7 728.7 304.0 728.6C307.3 728.5 310.7 728.5 314.0 728.0C317.3 727.5 321.0 726.1 324.0 725.6C327.0 725.1 329.0 725.8 332.0 725.0C335.0 724.2 338.7 722.3 342.0 721.0C345.3 719.7 349.0 718.6 352.0 717.4C355.0 716.2 357.5 714.8 360.0 714.0C362.5 713.2 364.7 712.4 367.0 712.6C369.3 712.8 371.5 714.2 374.0 715.0C376.5 715.8 379.0 717.0 382.0 717.4C385.0 717.8 389.0 717.2 392.0 717.4C395.0 717.6 397.0 718.1 400.0 718.4C403.0 718.7 406.7 719.7 410.0 719.4C413.3 719.1 417.2 717.2 420.0 716.6C422.8 716.0 424.7 715.5 427.0 716.0C429.3 716.5 431.5 717.6 434.0 719.4C436.5 721.2 439.3 725.0 442.0 727.0C444.7 729.0 447.0 730.5 450.0 731.6C453.0 732.7 457.0 733.7 460.0 733.4C463.0 733.1 465.7 731.1 468.0 730.0C470.3 728.9 472.0 727.3 474.0 726.6C476.0 725.9 477.7 725.3 480.0 725.6C482.3 725.9 485.3 727.5 488.0 728.4C490.7 729.3 493.3 730.6 496.0 731.0C498.7 731.4 501.0 731.7 504.0 731.0C507.0 730.3 511.0 728.7 514.0 727.0C517.0 725.3 519.3 722.3 522.0 720.6C524.7 718.9 527.0 717.4 530.0 716.6C533.0 715.8 536.7 716.1 540.0 716.0C543.3 715.9 546.7 715.9 550.0 716.0C553.3 716.1 557.0 716.7 560.0 716.6C563.0 716.5 565.7 715.7 568.0 715.4C570.3 715.1 571.7 714.7 574.0 715.0C576.3 715.3 579.3 716.8 582.0 717.4C584.7 718.0 587.0 718.6 590.0 718.6C593.0 718.6 597.0 717.2 600.0 717.4C603.0 717.6 605.7 719.3 608.0 720.0C610.3 720.7 611.7 721.3 614.0 721.4C616.3 721.5 619.7 720.6 622.0 720.4C624.3 720.2 625.7 719.6 628.0 720.0C630.3 720.4 633.3 721.8 636.0 723.0C638.7 724.2 641.3 725.9 644.0 727.0C646.7 728.1 649.3 729.0 652.0 729.6C654.7 730.2 657.3 730.5 660.0 730.6C662.7 730.7 665.3 730.4 668.0 730.0C670.7 729.6 673.3 728.8 676.0 728.0C678.7 727.2 681.3 726.2 684.0 725.0C686.7 723.8 689.7 721.5 692.0 720.6C694.3 719.7 696.0 719.6 698.0 719.4C700.0 719.2 701.7 720.1 704.0 719.6C706.3 719.1 709.3 717.5 712.0 716.6C714.7 715.7 717.0 714.7 720.0 714.0C723.0 713.3 726.7 712.8 730.0 712.6C733.3 712.4 737.3 712.8 740.0 713.0C742.7 713.2 744.0 713.3 746.0 714.0C748.0 714.7 750.0 716.4 752.0 717.4C754.0 718.4 756.0 719.3 758.0 720.0C760.0 720.7 761.7 721.5 764.0 721.4C766.3 721.3 769.3 720.1 772.0 719.6C774.7 719.1 777.0 718.8 780.0 718.4C783.0 718.0 787.3 717.6 790.0 717.0C792.7 716.4 794.0 715.4 796.0 715.0C798.0 714.6 799.7 714.3 802.0 714.6C804.3 714.9 807.3 716.2 810.0 717.0C812.7 717.8 815.3 719.2 818.0 719.4C820.7 719.6 823.3 718.1 826.0 718.4C828.7 718.7 831.3 720.2 834.0 721.0C836.7 721.8 839.7 723.1 842.0 723.4C844.3 723.7 846.0 723.6 848.0 723.0C850.0 722.4 852.0 720.6 854.0 720.0C856.0 719.4 858.0 718.9 860.0 719.4C862.0 719.9 864.0 721.8 866.0 723.0C868.0 724.2 870.0 726.2 872.0 726.6C874.0 727.0 875.7 726.2 878.0 725.4C880.3 724.6 883.7 722.7 886.0 722.0C888.3 721.3 889.3 721.3 892.0 721.4C894.7 721.5 899.0 721.9 902.0 722.4C905.0 722.9 907.4 723.7 910.0 724.4C912.6 725.1 916.5 726.2 917.8 726.6" fill="none" stroke="#006c6c" stroke-width="1.25"/>
<line x1="141" y1="722.0" x2="178.0" y2="722.0" stroke="#006c6c" stroke-width="1.1" stroke-dasharray="4 2.5"/>
<line x1="917.8" y1="726.6" x2="957" y2="726.6" stroke="#006c6c" stroke-width="1.1" stroke-dasharray="4 2.5"/>
<circle cx="178.0" cy="722.0" r="2.1" fill="#006c6c"/>
<circle cx="917.8" cy="726.6" r="2.1" fill="#006c6c"/>
<path d="M178.0 758.4C180.0 758.7 186.3 760.5 190.0 760.4C193.7 760.3 196.7 758.5 200.0 758.0C203.3 757.5 206.7 757.1 210.0 757.4C213.3 757.7 217.0 759.0 220.0 759.6C223.0 760.2 224.7 760.6 228.0 761.0C231.3 761.4 236.0 761.3 240.0 762.0C244.0 762.7 248.7 765.2 252.0 765.4C255.3 765.6 257.5 763.7 260.0 763.0C262.5 762.3 264.7 761.1 267.0 761.4C269.3 761.7 271.5 763.6 274.0 765.0C276.5 766.4 279.5 768.9 282.0 770.0C284.5 771.1 286.3 771.8 289.0 771.6C291.7 771.4 294.5 769.7 298.0 769.0C301.5 768.3 306.0 768.2 310.0 767.6C314.0 767.0 318.3 766.1 322.0 765.6C325.7 765.1 329.0 765.2 332.0 764.4C335.0 763.6 337.3 762.7 340.0 761.0C342.7 759.3 345.3 756.2 348.0 754.4C350.7 752.6 353.7 750.9 356.0 750.4C358.3 749.9 359.7 750.7 362.0 751.4C364.3 752.1 367.0 753.6 370.0 754.4C373.0 755.2 376.7 755.7 380.0 756.4C383.3 757.1 386.7 757.6 390.0 758.4C393.3 759.2 396.7 760.8 400.0 761.4C403.3 762.0 406.7 762.0 410.0 762.0C413.3 762.0 416.7 761.3 420.0 761.4C423.3 761.5 427.0 762.4 430.0 762.6C433.0 762.8 435.0 762.8 438.0 762.6C441.0 762.4 444.7 761.9 448.0 761.6C451.3 761.3 455.3 760.9 458.0 760.6C460.7 760.3 461.7 759.8 464.0 760.0C466.3 760.2 469.3 761.2 472.0 762.0C474.7 762.8 477.0 763.8 480.0 764.6C483.0 765.4 486.7 765.9 490.0 766.6C493.3 767.3 496.7 768.4 500.0 769.0C503.3 769.6 507.0 770.1 510.0 770.0C513.0 769.9 515.3 769.2 518.0 768.4C520.7 767.6 523.3 765.9 526.0 765.0C528.7 764.1 531.3 763.4 534.0 763.0C536.7 762.6 539.3 762.3 542.0 762.4C544.7 762.5 547.0 763.3 550.0 763.6C553.0 763.9 556.7 763.8 560.0 764.0C563.3 764.2 566.3 765.3 570.0 765.0C573.7 764.7 578.7 762.8 582.0 762.0C585.3 761.2 587.3 760.2 590.0 760.4C592.7 760.6 595.0 762.0 598.0 763.0C601.0 764.0 604.3 765.5 608.0 766.4C611.7 767.3 616.3 768.0 620.0 768.4C623.7 768.8 626.7 769.2 630.0 769.0C633.3 768.8 636.7 767.8 640.0 767.0C643.3 766.2 646.3 764.7 650.0 764.0C653.7 763.3 658.7 763.6 662.0 763.0C665.3 762.4 667.3 761.0 670.0 760.6C672.7 760.2 675.0 760.1 678.0 760.4C681.0 760.7 684.3 762.0 688.0 762.4C691.7 762.8 696.3 763.1 700.0 763.0C703.7 762.9 707.0 762.4 710.0 762.0C713.0 761.6 715.0 760.7 718.0 760.4C721.0 760.1 724.7 760.6 728.0 760.4C731.3 760.2 735.0 759.9 738.0 759.0C741.0 758.1 743.3 756.0 746.0 755.0C748.7 754.0 751.7 753.4 754.0 753.0C756.3 752.6 757.7 752.3 760.0 752.6C762.3 752.9 765.0 754.3 768.0 755.0C771.0 755.7 774.7 756.2 778.0 757.0C781.3 757.8 785.0 758.6 788.0 759.6C791.0 760.6 793.0 761.9 796.0 763.0C799.0 764.1 802.7 765.5 806.0 766.4C809.3 767.3 813.0 768.1 816.0 768.4C819.0 768.7 821.3 768.6 824.0 768.0C826.7 767.4 829.3 765.7 832.0 765.0C834.7 764.3 837.3 764.0 840.0 763.6C842.7 763.2 845.3 763.1 848.0 762.6C850.7 762.1 853.7 760.7 856.0 760.4C858.3 760.1 859.7 760.1 862.0 760.6C864.3 761.1 867.0 763.0 870.0 763.6C873.0 764.2 876.7 763.9 880.0 764.0C883.3 764.1 886.7 763.9 890.0 764.0C893.3 764.1 896.7 764.7 900.0 764.6C903.3 764.5 907.0 764.1 910.0 763.6C913.0 763.1 916.5 761.8 917.8 761.4" fill="none" stroke="#000084" stroke-width="1.25"/>
<line x1="141" y1="758.4" x2="178.0" y2="758.4" stroke="#000084" stroke-width="1.1" stroke-dasharray="4 2.5"/>
<line x1="917.8" y1="761.4" x2="957" y2="761.4" stroke="#000084" stroke-width="1.1" stroke-dasharray="4 2.5"/>
<circle cx="178.0" cy="758.4" r="2.1" fill="#000084"/>
<circle cx="917.8" cy="761.4" r="2.1" fill="#000084"/>
<path d="M178.0 804.0C178.8 804.0 181.0 804.0 182.9 803.7C184.9 803.5 187.5 802.9 189.7 802.4C192.0 802.0 194.3 801.7 196.5 801.0C198.8 800.4 201.3 799.3 203.3 798.5C205.4 797.6 207.0 796.4 208.8 795.8C210.6 795.1 212.4 794.8 214.2 794.6C216.1 794.4 217.6 794.5 219.7 794.6C221.7 794.7 224.4 795.2 226.5 795.0C228.5 794.9 230.1 794.3 231.9 793.9C233.8 793.5 235.6 792.9 237.4 792.8C239.2 792.7 241.0 792.9 242.8 793.2C244.6 793.5 246.5 794.3 248.3 794.3C250.1 794.4 251.9 794.0 253.7 793.5C255.5 792.9 257.1 791.8 259.2 791.1C261.2 790.3 263.9 789.4 266.0 789.0C268.1 788.6 270.0 788.2 272.0 788.4C274.0 788.6 276.1 789.8 278.0 790.4C279.9 791.0 281.6 791.5 283.7 792.2C285.8 792.9 288.2 793.7 290.5 794.6C292.8 795.5 295.3 796.5 297.3 797.5C299.3 798.4 300.9 799.6 302.7 800.3C304.6 801.0 306.4 801.8 308.2 801.7C310.0 801.6 311.8 800.4 313.6 799.6C315.5 798.8 317.3 797.4 319.1 796.8C320.9 796.1 322.7 795.8 324.5 795.8C326.3 795.8 328.2 796.3 330.0 796.8C331.8 797.2 333.8 798.1 335.4 798.5C337.0 798.8 337.7 799.0 339.5 798.7C341.3 798.5 343.8 797.6 346.3 797.0C348.8 796.5 351.8 795.9 354.5 795.3C357.2 794.8 360.2 794.1 362.7 793.6C365.2 793.1 367.4 792.7 369.5 792.5C371.5 792.3 372.9 792.2 374.9 792.5C377.0 792.7 379.2 793.4 381.7 793.9C384.2 794.4 387.4 794.8 389.9 795.3C392.4 795.8 394.4 796.3 396.7 797.0C399.0 797.7 401.2 798.9 403.5 799.6C405.8 800.3 408.3 800.9 410.3 801.0C412.4 801.1 413.7 800.7 415.8 800.3C417.8 799.9 420.5 799.2 422.6 798.9C424.6 798.6 426.0 798.4 428.0 798.6C430.1 798.8 432.6 799.6 434.8 799.9C437.1 800.2 439.4 800.3 441.6 800.3C443.9 800.3 445.5 799.9 448.4 799.7C451.3 799.6 455.9 799.3 459.1 799.3C462.2 799.3 464.5 799.7 467.2 799.9C470.0 800.0 472.7 800.3 475.4 800.3C478.1 800.3 480.9 800.0 483.6 799.9C486.3 799.8 489.0 799.7 491.7 799.6C494.5 799.5 497.2 799.4 499.9 799.3C502.6 799.2 505.8 799.4 508.1 799.2C510.4 799.0 511.7 798.7 513.5 798.2C515.3 797.7 517.2 796.5 519.0 796.0C520.8 795.6 522.6 795.3 524.4 795.3C526.2 795.4 528.1 795.9 529.9 796.5C531.7 797.1 533.5 798.3 535.3 798.9C537.1 799.5 539.0 799.9 540.8 800.0C542.6 800.1 544.4 799.7 546.2 799.6C548.0 799.5 549.8 799.3 551.7 799.3C553.5 799.3 555.3 799.2 557.1 799.6C558.9 800.0 560.7 801.0 562.6 801.7C564.4 802.4 566.2 803.3 568.0 803.9C569.8 804.4 571.6 804.5 573.4 805.0C575.3 805.5 577.1 806.1 578.9 806.7C580.7 807.3 582.8 808.1 584.3 808.4C585.9 808.7 587.1 808.8 588.4 808.7C589.8 808.6 590.9 808.2 592.5 807.6C594.1 806.9 596.1 805.8 598.0 805.0C599.8 804.2 601.6 803.4 603.4 802.7C605.2 802.1 607.0 801.7 608.8 801.0C610.7 800.3 612.5 799.1 614.3 798.5C616.1 797.8 617.7 797.4 619.7 797.0C621.8 796.7 624.3 796.4 626.6 796.3C628.8 796.3 631.3 796.4 633.4 796.8C635.4 797.1 637.0 797.9 638.8 798.5C640.6 799.0 642.2 799.6 644.3 799.9C646.3 800.2 649.0 800.5 651.1 800.3C653.1 800.1 654.7 799.5 656.5 798.9C658.3 798.2 660.1 797.1 662.0 796.5C663.8 795.8 665.8 795.3 667.4 795.0C669.0 794.8 669.9 794.6 671.5 795.0C673.1 795.4 675.1 796.6 676.9 797.5C678.7 798.3 680.6 799.6 682.4 800.3C684.2 801.0 685.8 801.3 687.8 801.7C689.9 802.2 692.4 802.8 694.6 803.1C696.9 803.5 699.4 803.6 701.4 803.6C703.5 803.5 705.0 803.2 706.9 802.9C708.8 802.5 710.7 801.9 713.0 801.3C715.4 800.7 718.0 799.8 720.9 799.5C723.8 799.2 727.2 799.3 730.4 799.5C733.5 799.8 736.9 800.7 739.9 801.0C742.8 801.3 745.6 801.6 748.1 801.5C750.7 801.4 753.1 801.0 755.2 800.5C757.4 800.0 759.2 799.2 761.1 798.5C763.1 797.9 765.1 797.0 767.1 796.4C769.0 795.9 771.2 795.4 773.0 795.3C774.7 795.2 776.1 795.3 777.7 795.8C779.3 796.3 780.9 797.4 782.4 798.3C784.0 799.2 785.2 800.4 787.2 801.0C789.1 801.6 791.9 801.8 794.3 802.0C796.6 802.2 798.8 802.3 801.4 802.4C803.9 802.4 807.1 802.6 809.6 802.5C812.2 802.3 814.4 801.9 816.7 801.4C819.1 800.8 821.5 799.9 823.8 799.3C826.2 798.7 828.6 798.2 830.9 797.9C833.3 797.6 835.6 797.6 838.0 797.7C840.4 797.8 842.7 798.3 845.1 798.5C847.5 798.8 849.6 799.1 852.2 799.2C854.8 799.2 857.7 798.8 860.5 798.7C863.2 798.5 866.0 798.4 868.8 798.3C871.5 798.1 874.5 797.9 877.0 797.8C879.6 797.6 882.0 797.4 884.1 797.4C886.3 797.4 888.1 797.6 890.1 797.8C892.0 798.0 894.2 798.6 896.0 798.5C897.7 798.5 899.1 798.1 900.7 797.7C902.3 797.2 904.1 796.3 905.4 795.8C906.8 795.3 906.9 794.8 909.0 794.6C911.0 794.4 916.3 794.6 917.8 794.6" fill="none" stroke="#6c006c" stroke-width="1.25"/>
<line x1="141" y1="804.0" x2="178.0" y2="804.0" stroke="#6c006c" stroke-width="1.1" stroke-dasharray="4 2.5"/>
<line x1="917.8" y1="794.6" x2="957" y2="794.6" stroke="#6c006c" stroke-width="1.1" stroke-dasharray="4 2.5"/>
<circle cx="178.0" cy="804.0" r="2.1" fill="#6c006c"/>
<circle cx="917.8" cy="794.6" r="2.1" fill="#6c006c"/>
<path d="M178.0 838.6C179.0 838.9 181.9 839.9 184.3 840.6C186.7 841.2 189.5 842.1 192.4 842.6C195.4 843.0 199.3 843.4 202.0 843.4C204.7 843.4 206.3 843.1 208.8 842.6C211.3 842.0 214.2 840.9 217.0 840.0C219.7 839.1 222.6 838.1 225.1 837.4C227.6 836.8 229.7 836.4 231.9 836.0C234.2 835.6 236.7 835.1 238.7 834.9C240.8 834.7 242.2 834.7 244.2 834.7C246.2 834.7 249.0 835.1 251.0 834.9C253.0 834.7 254.6 834.1 256.4 833.5C258.3 832.8 260.1 831.6 261.9 831.0C263.7 830.4 265.5 830.1 267.3 829.9C269.2 829.7 270.7 829.8 272.8 829.9C274.8 830.0 277.3 830.2 279.6 830.3C281.9 830.4 284.4 830.3 286.4 830.5C288.4 830.7 289.8 831.3 291.9 831.6C293.9 831.9 296.8 832.0 298.7 832.3C300.5 832.6 301.2 832.8 302.7 833.5C304.3 834.1 306.4 835.4 308.2 836.4C310.0 837.5 311.8 838.9 313.6 839.7C315.5 840.5 317.0 841.0 319.1 841.3C321.1 841.5 323.4 841.2 325.9 841.1C328.4 841.1 331.6 841.1 334.1 841.0C336.6 840.9 338.8 840.9 340.9 840.6C342.9 840.3 344.7 839.5 346.3 839.1C347.9 838.8 348.8 838.4 350.4 838.7C352.0 839.0 354.0 840.1 355.9 841.0C357.7 841.9 359.5 843.5 361.3 844.3C363.1 845.1 364.9 845.5 366.7 845.8C368.6 846.1 370.4 846.1 372.2 846.0C374.0 845.9 375.6 845.3 377.6 845.1C379.7 845.0 381.9 845.3 384.4 845.1C386.9 845.0 389.9 844.5 392.6 844.3C395.3 844.0 398.1 843.8 400.8 843.7C403.5 843.6 406.5 843.9 409.0 843.8C411.5 843.7 413.7 843.6 415.8 843.1C417.8 842.6 419.4 841.7 421.2 840.7C423.0 839.8 424.8 838.5 426.7 837.4C428.5 836.4 430.5 835.2 432.1 834.6C433.7 834.0 434.4 833.8 436.2 833.6C438.0 833.4 441.0 833.4 443.0 833.3C445.0 833.2 446.0 833.0 448.4 832.9C450.9 832.7 455.0 832.5 457.7 832.5C460.4 832.5 462.5 832.7 464.5 832.9C466.6 833.1 467.9 833.8 470.0 833.7C472.0 833.7 474.3 833.0 476.8 832.5C479.3 831.9 482.2 831.0 484.9 830.3C487.7 829.7 490.6 829.2 493.1 828.6C495.6 828.0 497.9 827.2 499.9 826.8C502.0 826.4 503.5 826.3 505.4 826.4C507.2 826.4 508.8 826.6 510.8 827.2C512.9 827.8 515.3 829.2 517.6 830.0C519.9 830.9 522.2 831.8 524.4 832.5C526.7 833.2 529.0 833.8 531.2 834.3C533.5 834.8 536.0 835.1 538.0 835.6C540.1 836.0 541.7 836.7 543.5 837.0C545.3 837.3 547.1 837.5 548.9 837.3C550.8 837.1 552.6 836.3 554.4 835.7C556.2 835.2 557.8 834.4 559.8 833.9C561.9 833.4 564.4 833.1 566.6 832.9C568.9 832.7 571.4 832.7 573.4 832.6C575.5 832.5 577.1 832.2 578.9 832.0C580.7 831.9 582.5 831.6 584.3 831.8C586.2 831.9 588.0 832.5 589.8 832.9C591.6 833.3 593.4 833.9 595.2 834.0C597.0 834.1 598.9 833.6 600.7 833.5C602.5 833.4 604.3 833.3 606.1 833.5C607.9 833.6 609.8 834.1 611.6 834.6C613.4 835.1 615.2 836.2 617.0 836.4C618.8 836.7 620.7 836.3 622.5 836.0C624.3 835.8 626.1 835.1 627.9 834.9C629.7 834.6 631.5 834.5 633.4 834.6C635.2 834.7 636.8 835.3 638.8 835.7C640.8 836.2 643.3 837.0 645.6 837.2C647.9 837.3 649.9 836.7 652.4 836.6C654.9 836.5 657.9 836.4 660.6 836.4C663.3 836.4 666.3 836.5 668.8 836.6C671.3 836.6 673.3 836.5 675.6 836.7C677.8 836.9 680.1 837.1 682.4 837.7C684.6 838.3 686.9 839.3 689.2 840.3C691.5 841.3 694.0 842.8 696.0 843.8C698.0 844.8 699.6 845.8 701.4 846.3C703.3 846.8 705.1 846.8 706.9 846.8C708.7 846.8 709.6 846.8 712.3 846.4C715.1 845.9 719.9 844.8 723.3 844.1C726.7 843.4 729.4 842.7 732.8 842.1C736.1 841.6 740.0 841.4 743.4 840.7C746.7 839.9 749.9 838.6 752.9 837.6C755.8 836.6 758.2 835.6 761.1 834.7C764.1 833.9 767.6 833.3 770.6 832.5C773.6 831.8 776.3 830.7 778.9 830.2C781.4 829.6 783.8 829.2 786.0 829.1C788.1 829.0 790.1 829.3 791.9 829.6C793.7 829.8 794.8 830.4 796.6 830.5C798.4 830.7 800.8 830.4 802.5 830.3C804.3 830.2 805.7 829.8 807.3 829.9C808.8 830.0 810.4 830.5 812.0 831.0C813.6 831.6 815.1 832.4 816.7 833.3C818.3 834.1 819.9 835.4 821.5 836.3C823.0 837.3 824.4 838.2 826.2 838.8C828.0 839.5 830.1 840.1 832.1 840.2C834.1 840.3 836.0 839.9 838.0 839.4C840.0 839.0 842.0 838.1 843.9 837.6C845.9 837.1 848.1 836.7 849.8 836.5C851.6 836.3 852.8 836.8 854.6 836.3C856.3 835.9 858.5 834.8 860.5 833.9C862.5 832.9 864.6 831.4 866.4 830.8C868.2 830.1 869.6 829.9 871.1 829.9C872.7 829.9 874.1 830.5 875.9 830.8C877.6 831.1 880.0 831.8 881.8 831.8C883.5 831.8 884.9 831.4 886.5 830.8C888.1 830.2 889.8 828.9 891.2 828.3C892.7 827.7 894.0 827.2 895.4 827.2C896.8 827.2 898.0 827.7 899.5 828.6C901.0 829.5 902.7 831.1 904.2 832.6C905.8 834.1 907.4 836.2 909.0 837.6C910.6 839.0 912.2 840.1 913.7 840.9C915.2 841.7 917.1 842.3 917.8 842.5" fill="none" stroke="#540000" stroke-width="1.25"/>
<line x1="141" y1="838.6" x2="178.0" y2="838.6" stroke="#540000" stroke-width="1.1" stroke-dasharray="4 2.5"/>
<line x1="917.8" y1="842.5" x2="957" y2="842.5" stroke="#540000" stroke-width="1.1" stroke-dasharray="4 2.5"/>
<circle cx="178.0" cy="838.6" r="2.1" fill="#540000"/>
<circle cx="917.8" cy="842.5" r="2.1" fill="#540000"/>
<path d="M178.0 871.5C178.8 872.0 181.2 873.6 182.9 874.4C184.6 875.1 186.3 875.9 188.4 876.1C190.4 876.2 192.9 875.7 195.2 875.2C197.4 874.8 199.7 874.4 202.0 873.4C204.3 872.4 206.7 870.4 208.8 869.1C210.8 867.9 212.4 866.7 214.2 866.0C216.1 865.3 217.6 865.3 219.7 865.1C221.7 865.0 224.2 865.4 226.5 865.3C228.8 865.1 231.1 864.5 233.3 864.3C235.5 864.0 237.4 863.5 239.4 863.7C241.5 863.9 243.4 864.8 245.6 865.6C247.7 866.3 250.1 867.4 252.4 868.1C254.6 868.9 256.7 869.5 259.2 870.1C261.7 870.7 264.6 870.8 267.3 871.5C270.1 872.2 273.0 873.6 275.5 874.4C278.0 875.2 280.4 876.1 282.3 876.5C284.2 876.9 285.3 877.1 287.1 876.9C288.9 876.8 290.8 876.1 293.2 875.5C295.6 874.9 298.9 874.0 301.4 873.2C303.9 872.5 306.0 871.7 308.2 871.3C310.3 870.8 312.3 870.3 314.3 870.4C316.4 870.5 318.3 871.3 320.4 872.0C322.6 872.6 325.0 873.9 327.3 874.2C329.5 874.6 331.8 874.4 334.1 874.1C336.3 873.8 338.7 873.0 340.9 872.7C343.0 872.4 345.0 872.1 347.0 872.2C349.0 872.4 351.0 873.0 353.1 873.5C355.3 874.1 357.4 874.9 359.9 875.5C362.4 876.2 365.4 876.9 368.1 877.4C370.8 877.9 373.6 878.4 376.3 878.5C379.0 878.6 381.7 878.5 384.4 878.1C387.2 877.6 389.9 876.6 392.6 875.8C395.3 875.0 398.5 874.0 400.8 873.4C403.1 872.7 404.5 872.3 406.2 872.0C407.9 871.6 409.2 871.3 411.0 871.4C412.8 871.5 415.0 872.0 417.1 872.4C419.3 872.8 421.2 873.6 423.9 873.8C426.7 874.1 430.7 873.5 433.5 873.8C436.2 874.1 438.0 874.8 440.3 875.5C442.5 876.2 445.3 877.4 447.1 877.9C448.9 878.4 449.1 878.6 450.9 878.5C452.7 878.4 455.2 878.0 457.7 877.4C460.2 876.8 463.2 875.5 465.9 875.0C468.6 874.4 471.3 874.0 474.0 873.8C476.8 873.6 479.5 873.8 482.2 873.8C484.9 873.9 487.9 873.8 490.4 874.1C492.9 874.4 494.9 875.0 497.2 875.5C499.5 876.0 501.7 876.6 504.0 876.9C506.3 877.3 508.5 877.5 510.8 877.5C513.1 877.5 515.3 877.3 517.6 876.9C519.9 876.6 522.2 876.1 524.4 875.7C526.7 875.2 529.0 874.7 531.2 874.4C533.5 874.0 535.8 873.6 538.0 873.5C540.3 873.4 542.6 873.6 544.9 873.7C547.1 873.8 549.4 874.4 551.7 874.2C553.9 874.1 556.2 873.1 558.5 872.7C560.7 872.2 563.2 871.6 565.3 871.5C567.3 871.5 568.9 871.9 570.7 872.5C572.5 873.1 574.2 874.4 576.2 875.1C578.1 875.8 580.3 876.9 582.3 876.9C584.3 877.0 586.3 876.1 588.4 875.5C590.6 874.9 593.0 873.8 595.2 873.4C597.5 872.9 599.8 872.9 602.0 872.8C604.3 872.8 606.6 872.9 608.8 873.1C611.1 873.3 613.6 873.9 615.7 874.1C617.7 874.3 619.1 874.5 621.1 874.4C623.1 874.3 625.6 873.6 627.9 873.4C630.2 873.1 632.5 872.9 634.7 872.8C637.0 872.7 639.3 873.1 641.5 873.0C643.8 872.8 646.1 872.3 648.3 872.0C650.6 871.6 652.9 871.1 655.1 870.8C657.4 870.6 659.7 870.5 662.0 870.5C664.2 870.6 666.5 870.9 668.8 871.3C671.0 871.6 673.3 872.3 675.6 872.8C677.8 873.3 680.3 874.2 682.4 874.4C684.4 874.6 686.0 874.5 687.8 874.1C689.6 873.7 691.5 872.8 693.3 872.0C695.1 871.1 696.9 869.7 698.7 869.0C700.5 868.2 702.4 867.7 704.2 867.6C706.0 867.4 708.0 867.8 709.6 868.1C711.2 868.4 712.0 869.0 713.7 869.3C715.4 869.6 717.4 870.0 719.7 869.9C722.1 869.9 725.5 869.1 728.0 869.1C730.6 869.0 733.0 869.4 735.1 869.6C737.3 869.7 739.1 870.1 741.0 869.8C743.0 869.6 745.2 868.7 746.9 868.1C748.7 867.5 750.3 866.5 751.7 866.1C753.1 865.7 753.8 865.5 755.2 865.6C756.6 865.7 758.4 866.2 760.0 866.9C761.5 867.5 763.1 868.8 764.7 869.6C766.3 870.3 767.6 871.0 769.4 871.4C771.2 871.8 773.4 871.7 775.3 872.0C777.3 872.4 779.3 872.9 781.2 873.3C783.2 873.7 785.2 874.4 787.2 874.4C789.1 874.4 791.3 873.5 793.1 873.3C794.8 873.0 796.2 872.7 797.8 872.8C799.4 872.9 800.8 873.2 802.5 873.9C804.3 874.6 806.5 875.9 808.4 876.7C810.4 877.6 812.4 878.4 814.4 879.2C816.3 880.0 818.3 880.6 820.3 881.3C822.2 882.0 824.4 883.0 826.2 883.5C828.0 884.1 829.1 884.5 830.9 884.5C832.7 884.5 834.7 883.9 836.8 883.4C839.0 882.9 841.6 882.1 843.9 881.3C846.3 880.5 848.7 879.3 851.0 878.6C853.4 877.8 855.8 877.3 858.1 876.7C860.5 876.2 862.9 876.0 865.2 875.5C867.6 875.0 869.9 874.5 872.3 873.9C874.7 873.3 877.2 872.5 879.4 872.0C881.6 871.6 883.5 871.4 885.3 871.3C887.1 871.2 888.3 871.1 890.1 871.2C891.8 871.3 893.8 871.5 896.0 871.8C898.1 872.0 900.7 872.4 903.1 872.7C905.4 872.9 907.7 872.9 910.2 873.2C912.6 873.4 916.5 873.8 917.8 873.9" fill="none" stroke="#545400" stroke-width="1.25"/>
<line x1="141" y1="871.5" x2="178.0" y2="871.5" stroke="#545400" stroke-width="1.1" stroke-dasharray="4 2.5"/>
<line x1="917.8" y1="873.9" x2="957" y2="873.9" stroke="#545400" stroke-width="1.1" stroke-dasharray="4 2.5"/>
<circle cx="178.0" cy="871.5" r="2.1" fill="#545400"/>
<circle cx="917.8" cy="873.9" r="2.1" fill="#545400"/>
<path d="M178.0 911.1C178.8 910.6 181.2 908.9 182.9 908.0C184.6 907.0 186.3 906.1 188.4 905.4C190.4 904.8 192.2 904.3 195.2 904.0C198.1 903.7 203.1 903.3 206.1 903.4C209.0 903.6 210.6 904.2 212.9 904.7C215.1 905.2 217.0 905.9 219.7 906.6C222.4 907.3 225.8 908.3 229.2 909.0C232.6 909.6 236.7 910.1 240.1 910.5C243.5 911.0 246.5 911.3 249.6 911.5C252.8 911.8 255.8 912.1 259.2 912.1C262.6 912.2 266.9 912.0 270.1 911.8C273.2 911.6 275.7 911.2 278.2 911.0C280.7 910.7 283.0 910.4 285.0 910.4C287.1 910.4 288.4 910.4 290.5 910.8C292.5 911.3 295.0 912.3 297.3 913.1C299.6 913.9 301.6 914.8 304.1 915.4C306.6 916.0 309.8 916.4 312.3 916.5C314.8 916.6 316.8 916.3 319.1 916.1C321.4 915.9 323.6 915.6 325.9 915.4C328.2 915.2 330.4 915.1 332.7 914.8C335.0 914.5 337.0 914.1 339.5 913.4C342.0 912.7 345.0 911.5 347.7 910.8C350.4 910.2 352.9 909.9 355.9 909.4C358.8 908.9 362.2 908.1 365.4 907.7C368.6 907.3 372.2 907.1 374.9 906.9C377.6 906.6 379.7 906.1 381.7 906.0C383.8 905.9 385.4 905.8 387.2 906.1C389.0 906.5 390.6 907.2 392.6 908.3C394.7 909.3 397.4 911.4 399.4 912.5C401.5 913.6 403.2 914.3 404.9 914.8C406.6 915.3 407.8 915.7 409.6 915.7C411.5 915.6 413.8 914.8 415.8 914.4C417.7 914.0 419.4 913.5 421.2 913.2C423.0 913.0 424.6 913.1 426.7 912.8C428.7 912.6 431.0 912.1 433.5 911.7C436.0 911.2 439.1 910.5 441.6 910.1C444.1 909.7 445.8 909.6 448.4 909.1C451.1 908.7 454.8 907.7 457.7 907.3C460.6 906.9 463.2 906.7 465.9 906.7C468.6 906.7 471.3 906.9 474.0 907.1C476.8 907.4 479.5 907.8 482.2 908.1C484.9 908.5 487.9 908.8 490.4 909.1C492.9 909.5 494.9 909.7 497.2 910.1C499.5 910.5 501.7 911.2 504.0 911.5C506.3 911.9 508.8 912.4 510.8 912.4C512.9 912.4 514.4 912.1 516.3 911.5C518.1 911.0 519.9 909.8 521.7 909.0C523.5 908.2 525.6 907.2 527.1 906.7C528.7 906.2 529.6 905.9 531.2 906.0C532.8 906.1 534.9 906.4 536.7 907.3C538.5 908.2 540.3 910.0 542.1 911.5C543.9 913.1 545.8 915.3 547.6 916.5C549.4 917.7 551.0 918.2 553.0 918.8C555.1 919.4 557.6 919.7 559.8 920.2C562.1 920.7 564.6 921.5 566.6 921.9C568.7 922.3 570.3 922.9 572.1 922.8C573.9 922.6 575.7 922.0 577.5 921.1C579.3 920.1 581.2 918.5 583.0 917.2C584.8 915.9 586.6 914.4 588.4 913.2C590.2 912.1 591.8 911.3 593.9 910.4C595.9 909.6 598.4 908.7 600.7 908.1C602.9 907.5 605.2 907.3 607.5 906.9C609.8 906.4 612.3 905.8 614.3 905.6C616.3 905.3 617.7 905.3 619.7 905.4C621.8 905.5 624.5 906.2 626.6 906.3C628.6 906.3 630.2 905.9 632.0 905.7C633.8 905.5 635.6 905.1 637.4 905.3C639.3 905.4 641.1 905.9 642.9 906.6C644.7 907.2 646.5 908.3 648.3 909.1C650.2 909.9 651.7 910.8 653.8 911.4C655.8 912.0 658.6 912.5 660.6 912.5C662.6 912.6 664.2 911.9 666.0 911.5C667.9 911.2 669.7 910.5 671.5 910.3C673.3 910.0 675.1 910.1 676.9 910.1C678.7 910.1 680.6 910.4 682.4 910.1C684.2 909.9 685.8 909.2 687.8 908.7C689.9 908.2 692.6 907.3 694.6 907.3C696.7 907.3 698.3 908.0 700.1 908.7C701.9 909.4 703.7 910.7 705.5 911.7C707.3 912.6 709.6 913.9 711.0 914.4C712.3 914.9 712.2 914.8 713.7 914.7C715.2 914.5 717.8 914.0 719.7 913.5C721.7 913.0 723.9 912.1 725.7 911.8C727.4 911.4 728.4 911.2 730.4 911.3C732.4 911.3 735.3 911.9 737.5 912.0C739.7 912.1 741.4 912.1 743.4 912.0C745.4 911.9 747.3 911.5 749.3 911.4C751.3 911.3 753.3 911.7 755.2 911.6C757.2 911.5 759.4 911.4 761.1 910.8C762.9 910.2 764.3 909.0 765.9 907.9C767.4 906.9 769.0 905.5 770.6 904.6C772.2 903.7 773.9 903.1 775.3 902.6C776.8 902.2 777.9 901.9 779.5 902.0C781.0 902.1 782.9 902.6 784.8 903.4C786.7 904.2 788.7 905.7 790.7 906.7C792.7 907.7 794.5 908.5 796.6 909.2C798.8 909.9 801.2 910.3 803.7 910.8C806.3 911.2 809.2 911.7 812.0 911.9C814.8 912.1 817.7 912.1 820.3 912.1C822.8 912.2 825.0 912.3 827.4 912.4C829.7 912.4 832.1 912.3 834.5 912.5C836.8 912.7 839.2 913.2 841.6 913.5C843.9 913.8 846.3 914.1 848.7 914.2C851.0 914.3 853.6 914.2 855.8 914.1C857.9 914.0 859.7 913.8 861.7 913.5C863.6 913.2 865.6 912.6 867.6 912.3C869.6 911.9 871.5 911.4 873.5 911.3C875.5 911.1 877.4 911.5 879.4 911.3C881.4 911.0 883.4 910.3 885.3 909.8C887.3 909.3 889.1 908.6 891.2 908.3C893.4 908.0 896.2 908.0 898.3 907.8C900.5 907.6 902.3 907.2 904.2 907.0C906.2 906.7 907.9 906.1 910.2 906.1C912.4 906.0 916.5 906.6 917.8 906.7" fill="none" stroke="#005400" stroke-width="1.25"/>
<line x1="141" y1="911.1" x2="178.0" y2="911.1" stroke="#005400" stroke-width="1.1" stroke-dasharray="4 2.5"/>
<line x1="917.8" y1="906.7" x2="957" y2="906.7" stroke="#005400" stroke-width="1.1" stroke-dasharray="4 2.5"/>
<circle cx="178.0" cy="911.1" r="2.1" fill="#005400"/>
<circle cx="917.8" cy="906.7" r="2.1" fill="#005400"/>
<text x="548.5" y="379.5" font-size="11" fill="#920000" text-anchor="middle" font-family="'Liberation Sans', sans-serif">tx</text>
<text x="548.5" y="412.0" font-size="11" fill="#929200" text-anchor="middle" font-family="'Liberation Sans', sans-serif">ty</text>
<text x="548.5" y="451.0" font-size="11" fill="#009200" text-anchor="middle" font-family="'Liberation Sans', sans-serif">tz</text>
<text x="548.5" y="489.0" font-size="11" fill="#009292" text-anchor="middle" font-family="'Liberation Sans', sans-serif">rx</text>
<text x="548.5" y="527.5" font-size="11" fill="#0000a8" text-anchor="middle" font-family="'Liberation Sans', sans-serif">ry</text>
<text x="548.5" y="564.5" font-size="11" fill="#920092" text-anchor="middle" font-family="'Liberation Sans', sans-serif">rz</text>
<text x="548.5" y="602.0" font-size="11" fill="#6c0000" text-anchor="middle" font-family="'Liberation Sans', sans-serif">speedx</text>
<text x="548.5" y="643.0" font-size="11" fill="#6c6c00" text-anchor="middle" font-family="'Liberation Sans', sans-serif">speedy</text>
<text x="548.5" y="677.5" font-size="11" fill="#006c00" text-anchor="middle" font-family="'Liberation Sans', sans-serif">speedz</text>
<text x="548.5" y="715.5" font-size="11" fill="#006c6c" text-anchor="middle" font-family="'Liberation Sans', sans-serif">ax</text>
<text x="548.5" y="756.0" font-size="11" fill="#000084" text-anchor="middle" font-family="'Liberation Sans', sans-serif">ay</text>
<text x="548.5" y="793.0" font-size="11" fill="#6c006c" text-anchor="middle" font-family="'Liberation Sans', sans-serif">az</text>
<text x="548.5" y="830.0" font-size="11" fill="#540000" text-anchor="middle" font-family="'Liberation Sans', sans-serif">targetx</text>
<text x="548.5" y="867.0" font-size="11" fill="#545400" text-anchor="middle" font-family="'Liberation Sans', sans-serif">targety</text>
<text x="548.5" y="908.5" font-size="11" fill="#005400" text-anchor="middle" font-family="'Liberation Sans', sans-serif">targetz</text>
<rect x="108.4" y="940" width="863.4" height="14" fill="#1c1c1c" stroke="#4a4a4a" stroke-width="1"/>
<text x="111.6" y="951.2" font-size="12" fill="#d4d4d4" textLength="36.9" lengthAdjust="spacingAndGlyphs" font-family="'Liberation Mono', monospace">noise1</text>
<rect x="929.2" y="940.6" width="13.6" height="13" fill="#282828" stroke="#484848" stroke-width="1"/>
<rect x="944.0" y="940.6" width="13.6" height="13" fill="#282828" stroke="#484848" stroke-width="1"/>
<rect x="958.6" y="940.6" width="13.6" height="13" fill="#282828" stroke="#484848" stroke-width="1"/>
<circle cx="936.2" cy="947.6" r="3" fill="#3c3c3c"/>
<circle cx="950.6" cy="947.7" r="3.9" fill="#628cd8"/>
<path d="M965.3 943.4v8.2M961.2 947.5h8.2" stroke="#4c4c4c" stroke-width="2"/>
<rect x="1133" y="356.2" width="827.2" height="582.6" fill="#686868"/>
<rect x="1133" y="356.2" width="827.2" height="1.4" fill="#7e7e7e"/>
<rect x="1133" y="357.5" width="3.6" height="578" fill="#595959"/>
<rect x="1957.6" y="357.5" width="2.6" height="578" fill="#5e5e5e"/>
<rect x="1133" y="935.3" width="827.2" height="3.7" fill="#777"/>
<rect x="1105" y="356.2" width="28" height="582.6" fill="#5c8042"/>
<rect x="1105.0" y="356.2" width="1.1" height="582.6" fill="#6ea84e"/>
<rect x="1112.9" y="356.2" width="1.3" height="582.6" fill="#6ea84e"/>
<rect x="1131.1" y="356.2" width="1.9" height="582.6" fill="#6ea84e"/>
<rect x="1105" y="356.2" width="28" height="1.2" fill="#6ea84e"/>
<rect x="1114.0" y="375.1" width="17.6" height="1.3" fill="#6ea84e"/>
<rect x="1114.0" y="394.1" width="17.6" height="1.3" fill="#6ea84e"/>
<rect x="1114.0" y="413.0" width="17.6" height="1.3" fill="#6ea84e"/>
<rect x="1114.0" y="432.0" width="17.6" height="1.3" fill="#6ea84e"/>
<circle cx="1122.5" cy="366.8" r="4.3" fill="none" stroke="#b4c8a0" stroke-width="1.6"/>
<circle cx="1122.5" cy="366.8" r="2.2" fill="#b4c8a0"/>
<path d="M1128.66 380.32 L1125.32 382.89 L1121.72 383.40 L1119.92 386.75 L1117.10 391.62 L1120.95 389.05 L1124.03 389.55 L1124.80 386.45 L1126.86 384.15z" fill="#b4c8a0"/>
<path d="M1116.80 404.60 L1123.00 404.60 L1121.00 401.50 L1123.60 401.50 L1127.90 405.85 L1123.60 410.20 L1121.00 410.20 L1123.00 407.10 L1116.80 407.10z" fill="#b4c8a0"/>
<ellipse cx="1122.2" cy="427.0" rx="3.9" ry="3.6" fill="#b4c8a0"/>
<path d="M1123.50 423.95 C1123.80 419.25 1128.40 419.45 1127.50 424.25" fill="none" stroke="#b4c8a0" stroke-width="1.5"/>
<rect x="1105" y="644.2" width="8" height="7" fill="#78b058"/>
<rect x="1960.2" y="356.2" width="8.8" height="582.6" fill="#8e8e8c"/>
<rect x="1960.2" y="550.4" width="8.8" height="193.8" fill="#5c8042"/>
<rect x="1960.2" y="644" width="8.8" height="6.2" fill="#000"/>
<rect x="1341.4" y="360" width="1.3" height="575" fill="#7a7a7a"/>
<rect x="1751.4" y="360" width="1.3" height="575" fill="#7a7a7a"/>
<line x1="1546.8" y1="365.4" x2="1546.8" y2="935" stroke="#7d8282" stroke-width="1.5" stroke-dasharray="9 10.15"/>
<rect x="1137" y="475.0" width="818.6" height="1.5" fill="#303030"/>
<rect x="1137" y="589.6" width="818.6" height="1.5" fill="#303030"/>
<rect x="1137" y="704.7" width="818.6" height="1.5" fill="#303030"/>
<rect x="1137" y="819.8" width="818.6" height="1.5" fill="#303030"/>
<text x="1544.8" y="388.3" font-size="13.8" fill="#101010" stroke="#101010" stroke-width="0.3" text-anchor="end" textLength="7.1" lengthAdjust="spacingAndGlyphs" font-family="'Liberation Sans', sans-serif">0</text>
<text x="1549" y="388.3" font-size="14.3" fill="#101010" stroke="#101010" stroke-width="0.35" textLength="15.2" lengthAdjust="spacingAndGlyphs" font-family="'Liberation Mono', monospace">tx</text>
<text x="1544.8" y="426.6" font-size="13.8" fill="#101010" stroke="#101010" stroke-width="0.3" text-anchor="end" textLength="7.1" lengthAdjust="spacingAndGlyphs" font-family="'Liberation Sans', sans-serif">0</text>
<text x="1549" y="426.6" font-size="14.3" fill="#101010" stroke="#101010" stroke-width="0.35" textLength="15.2" lengthAdjust="spacingAndGlyphs" font-family="'Liberation Mono', monospace">ty</text>
<text x="1544.8" y="464.9" font-size="13.8" fill="#101010" stroke="#101010" stroke-width="0.3" text-anchor="end" textLength="7.1" lengthAdjust="spacingAndGlyphs" font-family="'Liberation Sans', sans-serif">0</text>
<text x="1549" y="464.9" font-size="14.3" fill="#101010" stroke="#101010" stroke-width="0.35" textLength="15.2" lengthAdjust="spacingAndGlyphs" font-family="'Liberation Mono', monospace">tz</text>
<text x="1544.8" y="503.2" font-size="13.8" fill="#101010" stroke="#101010" stroke-width="0.3" text-anchor="end" textLength="7.1" lengthAdjust="spacingAndGlyphs" font-family="'Liberation Sans', sans-serif">0</text>
<text x="1549" y="503.2" font-size="14.3" fill="#101010" stroke="#101010" stroke-width="0.35" textLength="15.2" lengthAdjust="spacingAndGlyphs" font-family="'Liberation Mono', monospace">rx</text>
<text x="1544.8" y="541.5" font-size="13.8" fill="#101010" stroke="#101010" stroke-width="0.3" text-anchor="end" textLength="7.1" lengthAdjust="spacingAndGlyphs" font-family="'Liberation Sans', sans-serif">0</text>
<text x="1549" y="541.5" font-size="14.3" fill="#101010" stroke="#101010" stroke-width="0.35" textLength="15.2" lengthAdjust="spacingAndGlyphs" font-family="'Liberation Mono', monospace">ry</text>
<text x="1544.8" y="579.8" font-size="13.8" fill="#101010" stroke="#101010" stroke-width="0.3" text-anchor="end" textLength="7.1" lengthAdjust="spacingAndGlyphs" font-family="'Liberation Sans', sans-serif">0</text>
<text x="1549" y="579.8" font-size="14.3" fill="#101010" stroke="#101010" stroke-width="0.35" textLength="15.2" lengthAdjust="spacingAndGlyphs" font-family="'Liberation Mono', monospace">rz</text>
<text x="1544.8" y="618.1" font-size="13.8" fill="#101010" stroke="#101010" stroke-width="0.3" text-anchor="end" textLength="7.1" lengthAdjust="spacingAndGlyphs" font-family="'Liberation Sans', sans-serif">0</text>
<text x="1549" y="618.1" font-size="14.3" fill="#101010" stroke="#101010" stroke-width="0.35" textLength="45.5" lengthAdjust="spacingAndGlyphs" font-family="'Liberation Mono', monospace">speedx</text>
<text x="1544.8" y="656.4" font-size="13.8" fill="#101010" stroke="#101010" stroke-width="0.3" text-anchor="end" textLength="7.1" lengthAdjust="spacingAndGlyphs" font-family="'Liberation Sans', sans-serif">0</text>
<text x="1549" y="656.4" font-size="14.3" fill="#101010" stroke="#101010" stroke-width="0.35" textLength="45.5" lengthAdjust="spacingAndGlyphs" font-family="'Liberation Mono', monospace">speedy</text>
<text x="1544.8" y="694.7" font-size="13.8" fill="#101010" stroke="#101010" stroke-width="0.3" text-anchor="end" textLength="7.1" lengthAdjust="spacingAndGlyphs" font-family="'Liberation Sans', sans-serif">0</text>
<text x="1549" y="694.7" font-size="14.3" fill="#101010" stroke="#101010" stroke-width="0.35" textLength="45.5" lengthAdjust="spacingAndGlyphs" font-family="'Liberation Mono', monospace">speedz</text>
<text x="1544.8" y="733.0" font-size="13.8" fill="#101010" stroke="#101010" stroke-width="0.3" text-anchor="end" textLength="7.1" lengthAdjust="spacingAndGlyphs" font-family="'Liberation Sans', sans-serif">0</text>
<text x="1549" y="733.0" font-size="14.3" fill="#101010" stroke="#101010" stroke-width="0.35" textLength="15.2" lengthAdjust="spacingAndGlyphs" font-family="'Liberation Mono', monospace">ax</text>
<text x="1544.8" y="771.3" font-size="13.8" fill="#101010" stroke="#101010" stroke-width="0.3" text-anchor="end" textLength="7.1" lengthAdjust="spacingAndGlyphs" font-family="'Liberation Sans', sans-serif">0</text>
<text x="1549" y="771.3" font-size="14.3" fill="#101010" stroke="#101010" stroke-width="0.35" textLength="15.2" lengthAdjust="spacingAndGlyphs" font-family="'Liberation Mono', monospace">ay</text>
<text x="1544.8" y="809.6" font-size="13.8" fill="#101010" stroke="#101010" stroke-width="0.3" text-anchor="end" textLength="7.1" lengthAdjust="spacingAndGlyphs" font-family="'Liberation Sans', sans-serif">0</text>
<text x="1549" y="809.6" font-size="14.3" fill="#101010" stroke="#101010" stroke-width="0.35" textLength="15.2" lengthAdjust="spacingAndGlyphs" font-family="'Liberation Mono', monospace">az</text>
<text x="1544.8" y="847.9" font-size="13.8" fill="#101010" stroke="#101010" stroke-width="0.3" text-anchor="end" textLength="7.1" lengthAdjust="spacingAndGlyphs" font-family="'Liberation Sans', sans-serif">0</text>
<text x="1549" y="847.9" font-size="14.3" fill="#101010" stroke="#101010" stroke-width="0.35" textLength="53.1" lengthAdjust="spacingAndGlyphs" font-family="'Liberation Mono', monospace">targetx</text>
<text x="1544.8" y="886.2" font-size="13.8" fill="#101010" stroke="#101010" stroke-width="0.3" text-anchor="end" textLength="7.1" lengthAdjust="spacingAndGlyphs" font-family="'Liberation Sans', sans-serif">0</text>
<text x="1549" y="886.2" font-size="14.3" fill="#101010" stroke="#101010" stroke-width="0.35" textLength="53.1" lengthAdjust="spacingAndGlyphs" font-family="'Liberation Mono', monospace">targety</text>
<text x="1544.8" y="924.5" font-size="13.8" fill="#101010" stroke="#101010" stroke-width="0.3" text-anchor="end" textLength="7.1" lengthAdjust="spacingAndGlyphs" font-family="'Liberation Sans', sans-serif">0</text>
<text x="1549" y="924.5" font-size="14.3" fill="#101010" stroke="#101010" stroke-width="0.35" textLength="53.1" lengthAdjust="spacingAndGlyphs" font-family="'Liberation Mono', monospace">targetz</text>
<rect x="1105.3" y="940" width="863.6" height="14" fill="#1c1c1c" stroke="#4a4a4a" stroke-width="1"/>
<text x="1108.4" y="951.2" font-size="12" fill="#d4d4d4" textLength="118" lengthAdjust="spacingAndGlyphs" font-family="'Liberation Mono', monospace">Posistagenetsender1</text>
<rect x="1926.4" y="940.6" width="13.6" height="13" fill="#282828" stroke="#484848" stroke-width="1"/>
<rect x="1940.8" y="940.6" width="13.6" height="13" fill="#282828" stroke="#484848" stroke-width="1"/>
<rect x="1955.2" y="940.6" width="13.6" height="13" fill="#282828" stroke="#484848" stroke-width="1"/>
<circle cx="1933.2" cy="947.4" r="2.8" fill="#3c3c3c"/>
<circle cx="1947.5" cy="947.4" r="2.8" fill="none" stroke="#3a5a98" stroke-width="1.6" stroke-dasharray="1.2 0.8"/>
<path d="M1962 943.3v8.2M1957.9 947.4h8.2" stroke="#555" stroke-width="2"/>
<clipPath id="cn"><rect x="108.4" y="356.4" width="32" height="583"/><rect x="1105.6" y="356.2" width="31" height="583"/><rect x="1137" y="356" width="832" height="8"/></clipPath>
<use href="#bgc" clip-path="url(#cn)" opacity="0.1"/>
<clipPath id="cl"><rect x="108.4" y="939.5" width="820.6" height="15"/><rect x="1105.3" y="939.5" width="820.4" height="15"/></clipPath>
<use href="#bgc" clip-path="url(#cl)" opacity="0.75"/>
</svg>
<div id="w">
<div style="position:absolute;left:0;top:0;width:2048px;height:25px;background:#fff"></div>
<div style="position:absolute;left:0;top:0;width:2048px;height:1px;background:#7d8895"></div>
<svg style="position:absolute;left:6.2px;top:5.2px" width="13" height="13.6" viewBox="0 0 13 13.6"><rect width="13" height="13.6" fill="#4b4b4b"/><rect x="1.8" y="4.4" width="2" height="5" fill="#6a9a55"/><rect x="9.4" y="4.4" width="2" height="5" fill="#6a9a55"/><rect x="4.4" y="1.8" width="4.6" height="1.9" fill="#6a9a55"/><rect x="4.4" y="10" width="4.6" height="1.9" fill="#6a9a55"/><circle cx="3" cy="3.3" r="0.95" fill="#0a0a0a"/><circle cx="10.4" cy="3.3" r="0.95" fill="#0a0a0a"/><circle cx="3" cy="10.5" r="0.95" fill="#0a0a0a"/><circle cx="10.4" cy="10.5" r="0.95" fill="#0a0a0a"/><circle cx="6.7" cy="6.9" r="1.9" fill="#3c3c3c" stroke="#f4f4f4" stroke-width="1.3"/></svg>
<div id="ttl" style="position:absolute;left:23.2px;top:7.4px;font:9.8px 'Liberation Sans', sans-serif;color:#000;-webkit-text-stroke:0.2px #000;white-space:nowrap;transform:scaleX(0.957);transform-origin:0 0">TouchDesigner 2023.12120: D:/posistageSenderCHOP/PosistageSenderCHOP/Touchdesigner/psnsenderchop.2.toe*</div>
<svg style="position:absolute;left:1940px;top:0" width="108" height="25"><path d="M13 12.5h8.2" stroke="#111" stroke-width="1"/><rect x="49.5" y="8.5" width="7.6" height="7" fill="none" stroke="#111" stroke-width="1"/><path d="M86.2 8.2l8.2 7.8M94.4 8.2l-8.2 7.8" stroke="#111" stroke-width="1"/></svg>
<div style="position:absolute;left:0;top:25px;width:2048px;height:59px;background:#2e3035"></div>
<div style="position:absolute;left:0;top:45px;width:2048px;height:18px;background:#2e2f34"></div>
<div style="position:absolute;left:0;top:63px;width:2048px;height:20.6px;background:#383a42"></div>
<div style="position:absolute;left:0;top:24.9px;width:2048px;height:1.6px;background:linear-gradient(#5a5d62,#2c2e33)"></div>
<div style="position:absolute;left:0;top:44px;width:2048px;height:1px;background:#4e5157"></div>
<div style="position:absolute;left:0;top:63px;width:2048px;height:1.9px;background:#4c4f56"></div>
<div style="position:absolute;left:0;top:83.2px;width:2048px;height:1.1px;background:#55585f"></div>
<div class="mt" style="left:9.0px;top:28.5px">File</div>
<div class="mt" style="left:38.5px;top:28.5px">Edit</div>
<div class="mt" style="left:69.0px;top:28.5px">Dialogs</div>
<div class="mt" style="left:116.0px;top:28.5px">Help</div>
<div class="btn" style="left:147.5px;top:27.7px;width:79.5px;height:14.6px;line-height:13.2px">WIKI</div>
<div class="btn" style="left:230.0px;top:27.7px;width:79.5px;height:14.6px;line-height:13.2px">FORUM</div>
<div class="btn" style="left:312.0px;top:27.7px;width:79.5px;height:14.6px;line-height:13.2px">TUTORIALS</div>
<div style="position:absolute;left:394px;top:27.6px;width:23.6px;height:14.6px;border:1px solid #4b4e56;box-sizing:border-box"></div>
<div style="position:absolute;left:395.6px;top:28.8px;width:21px;height:12.5px;background:#d8904a;border:0px solid #8a4a1c;box-sizing:border-box;font:bold 9.5px 'Liberation Sans', sans-serif;color:#7a1500;line-height:11px;text-align:center;letter-spacing:0.5px">O|I</div>
<div class="btn" style="left:419.8px;top:27.6px;width:24px;height:14.6px;line-height:13.5px;color:#5c6068;font-size:11px">60</div>
<div class="btn" style="left:445.4px;top:27.6px;width:69px;height:14.6px;line-height:13.5px;text-align:left;padding-left:3px;font-size:11px">FPS:&nbsp;&nbsp;&nbsp;60</div>
<div style="position:absolute;left:518.5px;top:30.5px;width:8px;height:8px;border:1px solid #8e8e8e;box-sizing:content-box;background:#2a2c31"></div>
<svg style="position:absolute;left:518.5px;top:30.5px" width="10" height="10"><path d="M2.6 2.6l4.8 4.8M7.4 2.6l-4.8 4.8" stroke="#e8e8e8" stroke-width="1.5"/></svg>
<div class="mt" style="left:533.5px;top:28.8px">Realtime</div>
<div class="btn" style="left:582.4px;top:27.7px;width:1382px;height:14.6px;line-height:13.2px;text-align:left;padding-left:3px;box-sizing:border-box;background:#3a3a3c">9:59:33 Load Project .toe: psnsenderchop.2.toe loaded successfully.</div>
<div class="btn" style="left:1966.5px;top:27.7px;width:79px;height:14.6px;background:#2f3239"></div>
<div style="position:absolute;left:0;top:25px;width:1.2px;height:59px;background:#55585f"></div>
<div style="position:absolute;left:0;top:84.3px;width:1.2px;height:1141.5px;background:#262626"></div>
<div class="ib" style="left:2.3px;top:47.4px;width:16.1px;height:14.3px"></div>
<svg style="position:absolute;left:2.3px;top:47.4px" width="17" height="15"><rect x="3" y="3.4" width="10.6" height="8" fill="none" stroke="#a0a6ae" stroke-width="1"/><path d="M3.6 9.5l4.7-4 4.7 4" fill="none" stroke="#a0a6ae" stroke-width="1.1"/></svg>
<div class="ib" style="left:20.3px;top:47.4px;width:15.8px;height:14.3px;background:#405a94"></div>
<svg style="position:absolute;left:20px;top:47.5px" width="17" height="15"><path d="M3.5 10.5c3 2 7 2 10 0l-1.5-2.5h-7z" fill="#e4e8f0"/><path d="M8.5 3v6M6 5.5l2.5-2.8 2.5 2.8" stroke="#e4e8f0" stroke-width="1.5" fill="none"/></svg>
<div style="position:absolute;left:45.2px;top:49.5px;width:1.6px;height:11px;background:#8a8e96"></div>
<div class="mt" style="left:58.4px;top:48.3px;color:#a4aab2">Pane Layout</div>
<div class="ib" style="left:122.0px;top:47.5px;width:17.5px;height:14px"></div>
<div class="ib" style="left:142.0px;top:47.5px;width:17.5px;height:14px"></div>
<div class="ib" style="left:162.4px;top:47.5px;width:17.5px;height:14px"></div>
<div class="ib" style="left:182.4px;top:47.5px;width:17.5px;height:14px"></div>
<div class="ib" style="left:202.4px;top:47.5px;width:17.5px;height:14px"></div>
<div style="position:absolute;left:150.5px;top:48px;width:1px;height:14px;background:#55585f"></div>
<div style="position:absolute;left:162.4px;top:54.5px;width:18px;height:1px;background:#55585f"></div>
<div style="position:absolute;left:191px;top:48px;width:1px;height:14px;background:#55585f"></div>
<div style="position:absolute;left:191px;top:54.5px;width:10px;height:1px;background:#55585f"></div>
<div style="position:absolute;left:211.5px;top:48px;width:1px;height:14px;background:#55585f"></div>
<div style="position:absolute;left:202.4px;top:54.5px;width:18px;height:1px;background:#55585f"></div>
<div style="position:absolute;left:229.6px;top:49.5px;width:1.4px;height:11px;background:#5a5d64"></div>
<div class="mt" style="left:242.4px;top:48.3px;color:#a4aab2">New Layout</div>
<div class="ib" style="left:304.6px;top:47.5px;width:15.5px;height:14px"></div>
<svg style="position:absolute;left:304.6px;top:47.5px" width="16" height="15"><path d="M8.2 3.6v8M4.2 7.6h8" stroke="#d0d0d0" stroke-width="1.3"/></svg>
<div class="ib" style="left:2.0px;top:65.8px;width:16px;height:15.9px"></div>
<div class="ib" style="left:20.2px;top:65.8px;width:16px;height:15.9px"></div>
<div class="ib" style="left:39.0px;top:65.8px;width:16px;height:15.9px"></div>
<div class="ib" style="left:57.3px;top:65.8px;width:16px;height:15.9px"></div>
<div class="ib" style="left:76.3px;top:65.8px;width:16px;height:15.9px"></div>
<div class="ib" style="left:94.6px;top:65.8px;width:16px;height:15.9px"></div>
<div class="ib" style="left:113.2px;top:65.8px;width:16px;height:15.9px"></div>
<div class="ib" style="left:131.5px;top:65.8px;width:16px;height:15.9px"></div>
<svg style="position:absolute;left:0;top:65px" width="150" height="18"><path d="M5.9 7.2h7.9l-3.95 4.7z" fill="#dcdcdc"/><rect x="24.6" y="4.4" width="7" height="8" fill="#d8d8d8"/><path d="M43 8.6l3.8-3.2v2h4.6v2.4h-4.6v2z" fill="none" stroke="#5a5d64" stroke-width="0.9"/><path d="M69.4 8.6l-3.8-3.2v2h-4.6v2.4h4.6v2z" fill="none" stroke="#5a5d64" stroke-width="0.9"/><path d="M84.2 4.4v8.6M79.8 8.7h8.8" stroke="#d4d8dc" stroke-width="1.3"/><path d="M102.7 4.4l1.25 2.7 2.95.3-2.2 2 .6 2.9-2.6-1.5-2.6 1.5.6-2.9-2.2-2 2.95-.3z" fill="#d8dce0"/><path d="M116 6.5l5-3.4 5 3.4M117 11.5l-1.5-1.2 1.5-1.2" fill="none" stroke="#e0e0e0" stroke-width="1.1"/><circle cx="122.5" cy="9.8" r="2.2" fill="none" stroke="#e0e0e0" stroke-width="1.1"/><path d="M124.2 11.5l2.2 2.2" stroke="#e0e0e0" stroke-width="1.3"/><path d="M135 8.8l4.5-3.6 4.5 3.6M136.3 8v4.8h6.4v-4.8" fill="none" stroke="#c8c8c8" stroke-width="1"/><path d="M139.5 10.5h3.4" stroke="#c8c8c8" stroke-width="1.6"/></svg>
<div class="mt" style="left:151px;top:67.5px">/ project1</div>
<div class="ib" style="left:1993.6px;top:65.7px;width:16px;height:16px;font:10.8px 'Liberation Sans', sans-serif;color:#c8c8c8;text-align:center;line-height:15px">0</div>
<div class="ib" style="left:2012px;top:65.7px;width:16.4px;height:16px"></div>
<div class="ib" style="left:2030.2px;top:65.7px;width:16.2px;height:16px"></div>
<svg style="position:absolute;left:2012px;top:65.7px" width="36" height="16"><rect x="4.5" y="5" width="8" height="6.6" fill="none" stroke="#c8ccd0" stroke-width="1.1"/><path d="M4 5h9" stroke="#c8ccd0" stroke-width="1.6"/><path d="M24.6 4.6h3v4h2l-3.5 4.2-3.5-4.2h2z" fill="none" stroke="#c8ccd0" stroke-width="0.9"/></svg>
<div style="position:absolute;left:1703px;top:84px;width:345px;height:175px;background:#434343"></div>
<div style="position:absolute;left:1703px;top:84px;width:345px;height:38.5px;background:#5a8140"></div>
<div style="position:absolute;left:1706px;top:89.8px;font:bold 9.7px 'Liberation Sans', sans-serif;color:#f0f0f0;white-space:nowrap">PSN Sender</div>
<div style="position:absolute;left:1768px;top:87.4px;width:278px;height:15.4px;background:#789d63"></div>
<div style="position:absolute;left:1770.5px;top:89.2px;font:10.25px 'Liberation Mono', monospace;color:#dcecd2;white-space:nowrap">Posistagenetsender1</div>
<div style="position:absolute;left:1706.5px;top:103.5px;font:bold 14px 'Liberation Sans', sans-serif;color:#e8e8e8">?</div>
<div style="position:absolute;left:1721px;top:105.5px;width:15px;height:14.5px;background:linear-gradient(#34508c 0,#4a6aa8 50%,#e8e8e8 56%,#c87840 62%,#c87840 100%)"></div>
<div style="position:absolute;left:1724px;top:103.5px;font:bold 14px 'Liberation Sans', sans-serif;color:#f4f4f4">?</div>
<div style="position:absolute;left:1743.4px;top:103.6px;font:bold 15px 'Liberation Sans', sans-serif;color:#f4f4f4">i</div>
<svg style="position:absolute;left:1940px;top:104px" width="108" height="18"><path d="M4.5 13.8l1.2-3.6 6.6-6.4 2.4 2.4-6.6 6.4z" fill="#9bb686"/><ellipse cx="27.5" cy="8" rx="6" ry="3.6" fill="#9bb686"/><ellipse cx="23.5" cy="10" rx="4" ry="2.8" fill="#9bb686"/><path d="M21 11.5l-1.5 3 3.5-2z" fill="#9bb686"/><path d="M39.5 12.5l5-7.5 7.5 3.2-4.6 7.2z" fill="none" stroke="#f0f0f0" stroke-width="1.3"/><path d="M45 4.5l3-1.3 2.2 2.4" fill="none" stroke="#f0f0f0" stroke-width="1.2"/><circle cx="62" cy="9" r="7" fill="#f0f0f0"/><path d="M58 8.5c0-5 8-5 8-1.5v2h-4c-2 0-2.5 1-2.5 2.5z" fill="#3c6eb4"/><path d="M66 9.5c0 5-8 5-8 1.5v-1.2h4c2 0 2.5-1.2 2.5-2.5z" fill="#d87832"/><path d="M79.7 3.5v11M74.2 9h11" stroke="#f4f4f4" stroke-width="2.2"/><circle cx="97.8" cy="9" r="6.2" fill="none" stroke="#f0f0f0" stroke-width="1.3"/><circle cx="97.8" cy="9" r="3.4" fill="none" stroke="#f0f0f0" stroke-width="1.2"/><circle cx="97.8" cy="9" r="1.1" fill="#f0f0f0"/></svg>
<div style="position:absolute;left:1710.6px;top:131.2px;font:10.7px 'Liberation Sans', sans-serif;color:#cfcfcf">Common</div>
<div style="position:absolute;left:1706px;top:146px;width:339.5px;height:1.2px;background:#8a8a8a"></div>
<div style="position:absolute;left:1706px;top:145px;width:52.4px;height:2.6px;background:#e6e6e6"></div>
<div style="position:absolute;left:1623px;width:200px;top:153.5px;text-align:right;font:10.7px 'Liberation Sans', sans-serif;color:#707070;white-space:nowrap">Time Slice</div>
<div style="position:absolute;left:1623px;width:200px;top:171.2px;text-align:right;font:10.7px 'Liberation Sans', sans-serif;color:#707070;white-space:nowrap">Scope</div>
<div style="position:absolute;left:1623px;width:200px;top:188.9px;text-align:right;font:10.7px 'Liberation Sans', sans-serif;color:#707070;white-space:nowrap">Sample Rate Match</div>
<div style="position:absolute;left:1623px;width:200px;top:206.6px;text-align:right;font:10.7px 'Liberation Sans', sans-serif;color:#e4e4e4;white-space:nowrap">Export Method</div>
<div style="position:absolute;left:1623px;width:200px;top:224.3px;text-align:right;font:10.7px 'Liberation Sans', sans-serif;color:#707070;white-space:nowrap">Export Root</div>
<div style="position:absolute;left:1623px;width:200px;top:242.0px;text-align:right;font:10.7px 'Liberation Sans', sans-serif;color:#e4e4e4;white-space:nowrap">Export Table</div>
<div style="position:absolute;left:1847px;top:152.6px;width:19.6px;height:14px;background:#686868;font:10.7px 'Liberation Sans', sans-serif;color:#8e8e8e;text-align:center;line-height:14px">On</div>
<div style="position:absolute;left:1830px;top:170.6px;font:10.7px 'Liberation Sans', sans-serif;color:#707070">*</div>
<div style="position:absolute;left:2029.5px;top:169.2px;width:16.4px;height:15.6px;background:#585858"></div>
<svg style="position:absolute;left:2029.5px;top:169.2px" width="17" height="16"><path d="M4 3.2l9.4 4.8-9.4 4.8z" fill="#6e6e6e"/></svg>
<div style="position:absolute;left:1827px;top:187.6px;width:218.6px;height:15.4px;background:#595959;box-sizing:border-box;border:1px solid #505050;font:10.7px 'Liberation Sans', sans-serif;color:#6c6c6c;line-height:14px;padding-left:2.5px;white-space:nowrap;overflow:hidden">Resample At Maximum Rate</div>
<svg style="position:absolute;left:2034px;top:192px" width="10" height="8"><path d="M1 2h8l-4 4.4z" fill="#4e4e4e"/></svg>
<div style="position:absolute;left:1827px;top:205.2px;width:218.6px;height:15px;background:#5e5e5e;box-sizing:border-box;border:1px solid #4c4c4c;font:10.7px 'Liberation Sans', sans-serif;color:#dedede;line-height:13.6px;padding-left:2.5px;white-space:nowrap">DAT Table by Index</div>
<svg style="position:absolute;left:2034px;top:209.4px" width="10" height="8"><path d="M0.8 1.6h8.4l-4.2 4.8z" fill="#ececec"/></svg>
<div style="position:absolute;left:1827px;top:240.2px;width:202.6px;height:15.6px;background:#b9b9b5"></div>
<svg style="position:absolute;left:2028.5px;top:222.5px" width="19" height="15"><path d="M1 2.2c5-1.6 8 .8 9.4 4.6" fill="none" stroke="#111" stroke-width="1.2"/><path d="M7.2 7.8l9.6 5.4-2.6-9.6z" fill="#4a4a4a" stroke="#111" stroke-width="1.1"/></svg>
<svg style="position:absolute;left:2028.5px;top:240.3px" width="19" height="15"><path d="M1 2.2c5-1.6 8 .8 9.4 4.6" fill="none" stroke="#111" stroke-width="1.2"/><path d="M7.2 7.8l9.6 5.4-2.6-9.6z" fill="#4a4a4a" stroke="#111" stroke-width="1.1"/></svg>
<div style="position:absolute;left:0;top:1225.6px;width:2048px;height:59.4px;background:#303135"></div>
<div style="position:absolute;left:0;top:1225.8px;width:2048px;height:1.3px;background:#5c5f64"></div>
<div style="position:absolute;left:0;top:1281.5px;width:2048px;height:1.5px;background:#55575c"></div>
<div style="position:absolute;left:0;top:1283px;width:2048px;height:2px;background:#000"></div>
<div style="position:absolute;left:0.5px;top:1226.5px;width:223px;height:55.5px;background:#101010;border:1px solid #6a6a6a;box-sizing:border-box"></div>
<div class="il" style="left:4.6px;top:1230.2px">Start:</div>
<div class="iv" style="left:53.6px;top:1230.2px">1</div>
<div class="il" style="left:109.6px;top:1230.2px">End:</div>
<div class="iv" style="left:158px;top:1230.2px">600</div>
<div class="il" style="left:4.6px;top:1242.5px">RStart:</div>
<div class="iv" style="left:53.6px;top:1242.5px">1</div>
<div class="il" style="left:109.6px;top:1242.5px">REnd:</div>
<div class="iv" style="left:158px;top:1242.5px">600</div>
<div class="il" style="left:4.6px;top:1254.8px">FPS:</div>
<div class="iv" style="left:53.6px;top:1254.8px">60.0</div>
<div class="il" style="left:109.6px;top:1254.8px">Tempo:</div>
<div class="iv" style="left:158px;top:1254.8px">120.0</div>
<div class="il" style="left:4.6px;top:1267.1px">ResetF:</div>
<div class="iv" style="left:53.6px;top:1267.1px">1</div>
<div class="il" style="left:109.6px;top:1267.1px">T Sig:</div>
<div class="iv" style="left:158px;top:1267.1px">4</div>
<div class="iv" style="left:186.5px;top:1267.1px">4</div>
<div style="position:absolute;left:225px;top:1227px;width:1821px;height:10.6px;background:#0c0c0e"></div>
<div style="position:absolute;left:225px;top:1237.3px;width:1821px;height:1.7px;background:#3c3c3c"></div>
<div style="position:absolute;left:375.6px;top:1227.5px;width:1px;height:10px;background:#6a6a6a"></div>
<div class="rl" style="left:377.6px">51</div>
<div style="position:absolute;left:527.9px;top:1227.5px;width:1px;height:10px;background:#6a6a6a"></div>
<div class="rl" style="left:529.9px">101</div>
<div style="position:absolute;left:680.1px;top:1227.5px;width:1px;height:10px;background:#6a6a6a"></div>
<div class="rl" style="left:682.1px">151</div>
<div style="position:absolute;left:832.4px;top:1227.5px;width:1px;height:10px;background:#6a6a6a"></div>
<div class="rl" style="left:834.4px">201</div>
<div style="position:absolute;left:984.6px;top:1227.5px;width:1px;height:10px;background:#6a6a6a"></div>
<div class="rl" style="left:986.6px">251</div>
<div style="position:absolute;left:1136.9px;top:1227.5px;width:1px;height:10px;background:#6a6a6a"></div>
<div class="rl" style="left:1138.9px">301</div>
<div style="position:absolute;left:1289.2px;top:1227.5px;width:1px;height:10px;background:#6a6a6a"></div>
<div class="rl" style="left:1291.2px">351</div>
<div style="position:absolute;left:1441.4px;top:1227.5px;width:1px;height:10px;background:#6a6a6a"></div>
<div class="rl" style="left:1443.4px">401</div>
<div style="position:absolute;left:1593.7px;top:1227.5px;width:1px;height:10px;background:#6a6a6a"></div>
<div class="rl" style="left:1595.7px">451</div>
<div style="position:absolute;left:1745.9px;top:1227.5px;width:1px;height:10px;background:#6a6a6a"></div>
<div class="rl" style="left:1747.9px">501</div>
<div style="position:absolute;left:1898.2px;top:1227.5px;width:1px;height:10px;background:#6a6a6a"></div>
<div class="rl" style="left:1900.2px">551</div>
<div class="rl" style="left:226px">1</div>
<div class="rl" style="left:2026.5px">600</div>
<div style="position:absolute;left:1210.2px;top:1227.4px;width:1.8px;height:10px;background:#93a7d8"></div>
<div style="position:absolute;left:225.5px;top:1239px;width:1819px;height:6.2px;background:#3a4a74"></div>
<div style="position:absolute;left:225.5px;top:1238.6px;width:16.5px;height:7px;background:#55585e;border:1px solid #6a6d74;box-sizing:border-box"></div>
<div style="position:absolute;left:2028px;top:1238.6px;width:16.5px;height:7px;background:#55585e;border:1px solid #6a6d74;box-sizing:border-box"></div>
<div style="position:absolute;left:225px;top:1245.4px;width:1821px;height:2.2px;background:#45474c"></div>
<div class="ib" style="left:227.4px;top:1249.2px;width:16px;height:14.2px;color:#64676e;font:11px 'Liberation Sans', sans-serif;text-align:center;line-height:13.6px">/</div>
<div class="ib" style="left:227.4px;top:1264.6px;width:16px;height:14.2px;color:#64676e;font:11px 'Liberation Mono', monospace;text-align:center;line-height:13.6px">I</div>
<div style="position:absolute;left:247px;top:1250.2px;width:52px;height:12.6px;background:#e08a48;border:1px solid #8c4a1c;box-sizing:border-box;font:10.6px 'Liberation Sans', sans-serif;color:#861500;text-align:center;line-height:11px">TimeCode</div>
<div class="ib" style="left:247px;top:1265.6px;width:52px;height:12.6px;font:10.6px 'Liberation Sans', sans-serif;color:#c8c8c8;text-align:center;line-height:11.4px;background:#3d4048">Beats</div>
<div style="position:absolute;left:302.5px;top:1249px;width:160px;height:30px;background:#000;border:1px solid #55585f;box-sizing:border-box;font:22.6px 'Liberation Sans', sans-serif;color:#6a9ce4;text-align:center;line-height:29px;letter-spacing:0.9px;padding-left:1px">00:00:05:24</div>
<div style="position:absolute;left:466px;top:1249px;width:106.5px;height:30px;background:#000;border:1px solid #55585f;box-sizing:border-box;font:22.6px 'Liberation Sans', sans-serif;color:#6a9ce4;text-align:center;line-height:29px">325</div>
<div class="ib" style="left:575.0px;top:1249px;width:30.8px;height:30px;background:#3a3d45"></div>
<div class="ib" style="left:608.4px;top:1249px;width:30.8px;height:30px;background:#3a3d45"></div>
<div class="ib" style="left:641.6px;top:1249px;width:30.8px;height:30px;background:#3a3d45"></div>
<div class="ib" style="left:674.6px;top:1249px;width:30.8px;height:30px;background:#c6864c"></div>
<div class="ib" style="left:707.8px;top:1249px;width:30.8px;height:30px;background:#3a3d45"></div>
<div class="ib" style="left:741.0px;top:1249px;width:30.8px;height:30px;background:#3a3d45"></div>
<svg style="position:absolute;left:575px;top:1249px" width="200" height="30"><path d="M11.3 11.2v7.4M12.2 14.9l4.4-3.7v7.4zM16.6 14.9l4.4-3.7v7.4z" fill="#bcc0c4" stroke="#bcc0c4" stroke-width="0.8"/><path d="M46.6 10.8v8.4M50.6 10.8v8.4" stroke="#bcc0c4" stroke-width="1.5"/><path d="M78.6 15l4.6-3.6v7.2z" fill="#c4c8cc"/><path d="M116.8 15l-4.4-3.6v7.2z" fill="#6a1000"/></svg>
<div style="position:absolute;left:707.8px;top:1249px;width:30.8px;height:30px;font:13px 'Liberation Sans', sans-serif;color:#c8c8c8;text-align:center;line-height:28px">-</div>
<div style="position:absolute;left:741px;top:1249px;width:30.8px;height:30px;font:15px 'Liberation Sans', sans-serif;color:#c8c8c8;text-align:center;line-height:29px">+</div>
<div class="mt" style="left:775.6px;top:1249.8px;color:#b8bcc0">Range Limit</div>
<div style="position:absolute;left:776px;top:1266.6px;width:36.5px;height:12.4px;background:#d48a4c;border:1px solid #8c4a1c;box-sizing:border-box;font:10.6px 'Liberation Sans', sans-serif;color:#861500;text-align:center;line-height:11px">Loop</div>
<div class="ib" style="left:816px;top:1266.6px;width:36.5px;height:12.4px;font:10.6px 'Liberation Sans', sans-serif;color:#c8c8c8;text-align:center;line-height:11px;background:#3d4048">Once</div>
</div>
</body></html>
